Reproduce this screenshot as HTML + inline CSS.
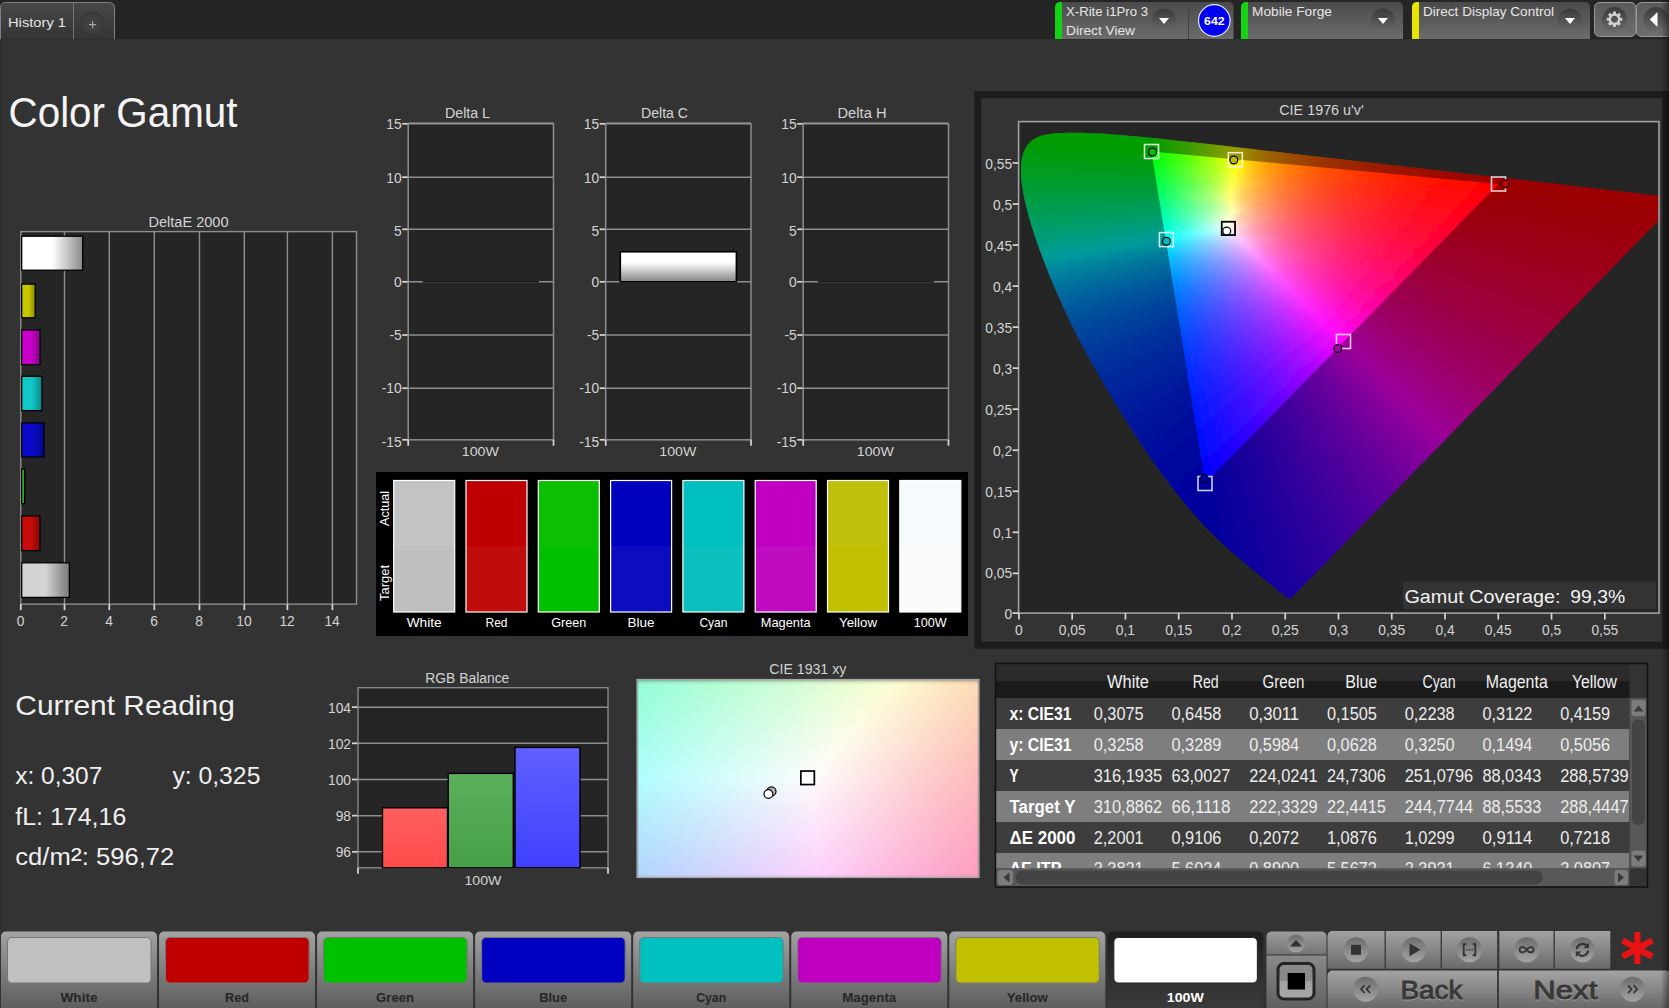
<!DOCTYPE html>
<html lang="en"><head><meta charset="utf-8"><title>Color Gamut</title>
<style>
html,body{margin:0;padding:0;background:#333;overflow:hidden}
body{width:1669px;height:1008px;font-family:"Liberation Sans",sans-serif}
svg{display:block;font-family:"Liberation Sans",sans-serif}
</style></head><body>
<svg width="1669" height="1008" viewBox="0 0 1669 1008" fill="#d4d4d4">
<defs>
<linearGradient id="tabg" x1="0" y1="0" x2="0" y2="1"><stop offset="0" stop-color="#484848"/><stop offset="1" stop-color="#343434"/></linearGradient>
<radialGradient id="plusg" cx="0.5" cy="0.5" r="0.5"><stop offset="0" stop-color="#3c3c3c"/><stop offset="1" stop-color="#333"/></radialGradient>
<radialGradient id="plusg2" cx="0.5" cy="0.5" r="0.5"><stop offset="0" stop-color="#444"/><stop offset="0.75" stop-color="#3e3e3e"/><stop offset="1" stop-color="#373737"/></radialGradient>
<linearGradient id="devg" x1="0" y1="0" x2="0" y2="1"><stop offset="0" stop-color="#4a4a4a"/><stop offset="1" stop-color="#6c6c6c"/></linearGradient>
<radialGradient id="ddg" cx="0.5" cy="0.3" r="0.8"><stop offset="0" stop-color="#3e3e3e"/><stop offset="1" stop-color="#5a5a5a"/></radialGradient>
<linearGradient id="ddg2" x1="0" y1="0" x2="0" y2="1"><stop offset="0" stop-color="#3a3a3a"/><stop offset="1" stop-color="#6a6a6a"/></linearGradient>
<linearGradient id="gbg" x1="0" y1="0" x2="0" y2="1"><stop offset="0" stop-color="#5a5a5a"/><stop offset="1" stop-color="#6e6e6e"/></linearGradient>
<linearGradient id="eb0" x1="0" y1="0" x2="1" y2="0"><stop offset="0" stop-color="#ffffff"/><stop offset="0.5" stop-color="#ffffff"/><stop offset="1" stop-color="#8a8a8a"/></linearGradient>
<linearGradient id="eb1" x1="0" y1="0" x2="1" y2="0"><stop offset="0" stop-color="#c8c800"/><stop offset="0.5" stop-color="#c8c800"/><stop offset="1" stop-color="#8c8c00"/></linearGradient>
<linearGradient id="eb2" x1="0" y1="0" x2="1" y2="0"><stop offset="0" stop-color="#c800c8"/><stop offset="0.5" stop-color="#c800c8"/><stop offset="1" stop-color="#8c008c"/></linearGradient>
<linearGradient id="eb3" x1="0" y1="0" x2="1" y2="0"><stop offset="0" stop-color="#10c8c8"/><stop offset="0.5" stop-color="#10c8c8"/><stop offset="1" stop-color="#0a8888"/></linearGradient>
<linearGradient id="eb4" x1="0" y1="0" x2="1" y2="0"><stop offset="0" stop-color="#0a0ac8"/><stop offset="0.5" stop-color="#0a0ac8"/><stop offset="1" stop-color="#06068c"/></linearGradient>
<linearGradient id="eb5" x1="0" y1="0" x2="1" y2="0"><stop offset="0" stop-color="#2cb82c"/><stop offset="0.5" stop-color="#2cb82c"/><stop offset="1" stop-color="#1e801e"/></linearGradient>
<linearGradient id="eb6" x1="0" y1="0" x2="1" y2="0"><stop offset="0" stop-color="#c80c0c"/><stop offset="0.5" stop-color="#c80c0c"/><stop offset="1" stop-color="#880808"/></linearGradient>
<linearGradient id="eb7" x1="0" y1="0" x2="1" y2="0"><stop offset="0" stop-color="#d4d4d4"/><stop offset="0.5" stop-color="#d4d4d4"/><stop offset="1" stop-color="#787878"/></linearGradient>
<linearGradient id="dcb" x1="0" y1="0" x2="0" y2="1"><stop offset="0" stop-color="#fff"/><stop offset="0.35" stop-color="#fff"/><stop offset="1" stop-color="#858585"/></linearGradient>
<linearGradient id="rb0" x1="0" y1="0" x2="0" y2="1"><stop offset="0" stop-color="#ff6060"/><stop offset="1" stop-color="#ff4a4a"/></linearGradient>
<linearGradient id="rb1" x1="0" y1="0" x2="0" y2="1"><stop offset="0" stop-color="#5cb05c"/><stop offset="1" stop-color="#46a046"/></linearGradient>
<linearGradient id="rb2" x1="0" y1="0" x2="0" y2="1"><stop offset="0" stop-color="#6060ff"/><stop offset="1" stop-color="#4040ff"/></linearGradient>
<clipPath id="locus"><polygon points="1291.08,598.13 1291.28,597.97 1291.19,598.03 1291.13,598.07 1291.08,598.11 1291.03,598.14 1290.99,598.17 1290.95,598.2 1290.91,598.22 1290.87,598.24 1290.83,598.26 1290.79,598.28 1290.75,598.3 1290.71,598.31 1290.66,598.33 1290.61,598.34 1290.56,598.35 1290.49,598.36 1290.41,598.36 1290.3,598.37 1290.18,598.37 1290.05,598.37 1289.9,598.36 1289.73,598.36 1289.55,598.35 1289.37,598.34 1289.21,598.33 1289.05,598.32 1288.88,598.28 1288.66,598.23 1288.4,598.13 1288.07,597.99 1287.68,597.79 1287.21,597.53 1286.66,597.19 1286.03,596.78 1285.33,596.29 1284.54,595.72 1283.68,595.07 1282.73,594.33 1281.7,593.52 1280.58,592.61 1279.37,591.62 1278.07,590.54 1276.68,589.37 1275.18,588.12 1273.59,586.78 1271.89,585.36 1270.08,583.85 1268.16,582.26 1266.13,580.58 1263.98,578.8 1261.7,576.93 1259.28,574.94 1256.72,572.84 1254.01,570.61 1251.14,568.25 1248.11,565.75 1244.91,563.1 1241.55,560.28 1238.02,557.29 1234.33,554.12 1230.47,550.74 1226.45,547.15 1222.27,543.33 1217.93,539.27 1213.41,534.92 1208.63,530.14 1203.5,524.79 1197.95,518.73 1191.93,511.85 1185.48,504.18 1178.66,495.76 1171.52,486.62 1164.11,476.8 1156.46,466.28 1148.58,455.03 1140.5,443.06 1132.25,430.37 1123.87,417.06 1115.41,403.27 1106.94,389.1 1098.52,374.69 1090.25,360.13 1082.28,345.51 1074.71,330.95 1067.64,316.52 1061.09,302.33 1055.04,288.5 1049.48,275.13 1044.42,262.32 1039.85,250.15 1035.79,238.67 1032.27,227.94 1029.28,218.01 1026.81,208.86 1024.81,200.45 1023.25,192.76 1022.1,185.75 1021.34,179.37 1020.94,173.56 1020.9,168.28 1021.2,163.46 1021.81,159.09 1022.73,155.14 1023.95,151.59 1025.45,148.43 1027.21,145.62 1029.22,143.17 1031.44,141.05 1033.87,139.25 1036.49,137.75 1039.29,136.51 1042.25,135.51 1045.36,134.73 1048.61,134.13 1051.98,133.68 1055.46,133.35 1059.04,133.11 1062.69,132.94 1066.39,132.83 1070.12,132.77 1073.85,132.75 1077.59,132.76 1081.34,132.81 1085.11,132.9 1088.91,133.02 1092.76,133.17 1096.66,133.35 1100.62,133.57 1104.66,133.81 1108.78,134.09 1112.98,134.39 1117.27,134.72 1121.66,135.08 1126.14,135.47 1130.73,135.88 1135.42,136.32 1140.22,136.78 1145.13,137.26 1150.16,137.77 1155.32,138.3 1160.6,138.85 1166.02,139.42 1171.57,140.02 1177.27,140.64 1183.12,141.28 1189.12,141.94 1195.28,142.62 1201.59,143.33 1208.06,144.06 1214.69,144.8 1221.49,145.57 1228.45,146.37 1235.57,147.18 1242.87,148.01 1250.33,148.87 1257.96,149.75 1265.77,150.64 1273.75,151.56 1281.9,152.5 1290.22,153.46 1298.72,154.43 1307.39,155.43 1316.22,156.44 1325.2,157.47 1334.3,158.52 1343.51,159.57 1352.81,160.64 1362.2,161.72 1371.65,162.81 1381.14,163.9 1390.67,165 1400.2,166.1 1409.73,167.2 1419.23,168.3 1428.69,169.39 1438.09,170.47 1447.42,171.54 1456.64,172.6 1465.75,173.64 1474.72,174.67 1483.53,175.68 1492.16,176.66 1500.59,177.62 1508.79,178.56 1516.76,179.48 1524.47,180.36 1531.9,181.22 1539.08,182.05 1545.99,182.85 1552.63,183.62 1559.01,184.35 1565.13,185.06 1570.98,185.74 1576.57,186.38 1581.92,187 1587.02,187.58 1591.91,188.14 1596.6,188.68 1601.1,189.19 1605.43,189.69 1609.61,190.17 1613.66,190.63 1617.56,191.08 1621.34,191.52 1624.97,191.94 1628.45,192.34 1631.79,192.73 1634.98,193.1 1638.01,193.45 1640.88,193.78 1643.59,194.09 1646.15,194.38 1648.57,194.65 1650.85,194.91 1653,195.15 1655.02,195.38 1656.92,195.6 1658.71,195.8 1660.39,196 1661.97,196.18 1663.44,196.35 1664.81,196.51 1666.08,196.65 1667.25,196.79 1668.32,196.91 1669.3,197.03 1670.18,197.13 1670.99,197.22 1671.73,197.31 1672.4,197.39 1673.03,197.46 1673.62,197.52 1674.18,197.59 1674.72,197.65 1675.25,197.71 1675.77,197.77 1676.28,197.83 1676.78,197.89 1677.26,197.95 1677.73,198 1678.19,198.05 1678.63,198.1 1679.06,198.15 1679.46,198.2 1679.85,198.24 1680.22,198.29 1680.56,198.33 1680.88,198.36 1681.17,198.4 1681.44,198.43 1681.67,198.45 1681.87,198.48 1682.03,198.5 1682.16,198.51 1682.25,198.52 1682.3,198.53 1682.31,198.53 1681.61,196.66"/></clipPath>
<clipPath id="plotc"><rect x="1018.6" y="121.6" width="640.4" height="491.5"/></clipPath>
<filter id="vb" x="-2%" y="-2%" width="104%" height="104%"><feGaussianBlur stdDeviation="0.9 1.7"/></filter>
<linearGradient id="s0" x1="1046.46" y1="0" x2="1108.61" y2="0" gradientUnits="userSpaceOnUse"><stop offset="0" stop-color="#0f0"/><stop offset="1" stop-color="#0f0"/></linearGradient>
<linearGradient id="s1" x1="1036.56" y1="0" x2="1134.23" y2="0" gradientUnits="userSpaceOnUse"><stop offset="0" stop-color="#0f0"/><stop offset="0.99" stop-color="#0f0"/></linearGradient>
<linearGradient id="s2" x1="1031.49" y1="0" x2="1154.95" y2="0" gradientUnits="userSpaceOnUse"><stop offset="0" stop-color="#0f0"/><stop offset="0.96" stop-color="#02ff00"/><stop offset="1" stop-color="#0dff00"/></linearGradient>
<linearGradient id="s3" x1="1028.2" y1="0" x2="1174.03" y2="0" gradientUnits="userSpaceOnUse"><stop offset="0" stop-color="#0f0"/><stop offset="0.83" stop-color="#01ff00"/><stop offset="0.99" stop-color="#3aff00"/></linearGradient>
<linearGradient id="s4" x1="1025.71" y1="0" x2="1192.37" y2="0" gradientUnits="userSpaceOnUse"><stop offset="0" stop-color="#0f0"/><stop offset="0.74" stop-color="#01ff00"/><stop offset="0.95" stop-color="#5f0"/><stop offset="1" stop-color="#6bff00"/></linearGradient>
<linearGradient id="s5" x1="1023.74" y1="0" x2="1210.32" y2="0" gradientUnits="userSpaceOnUse"><stop offset="0" stop-color="#0f0"/><stop offset="0.68" stop-color="#0f0"/><stop offset="0.86" stop-color="#54ff00"/><stop offset="1" stop-color="#a0ff00"/></linearGradient>
<linearGradient id="s6" x1="1022.13" y1="0" x2="1228.02" y2="0" gradientUnits="userSpaceOnUse"><stop offset="0" stop-color="#00ff04"/><stop offset="0.26" stop-color="#0f0"/><stop offset="0.62" stop-color="#01ff00"/><stop offset="0.79" stop-color="#5f0"/><stop offset="0.93" stop-color="#aeff00"/><stop offset="1" stop-color="#daff00"/></linearGradient>
<linearGradient id="s7" x1="1020.88" y1="0" x2="1245.55" y2="0" gradientUnits="userSpaceOnUse"><stop offset="0" stop-color="#00ff07"/><stop offset="0.29" stop-color="#0f0"/><stop offset="0.58" stop-color="#02ff00"/><stop offset="0.73" stop-color="#57ff00"/><stop offset="0.86" stop-color="#b1ff00"/><stop offset="0.96" stop-color="#feff00"/><stop offset="1" stop-color="#ffe400"/></linearGradient>
<linearGradient id="s8" x1="1019.82" y1="0" x2="1262.98" y2="0" gradientUnits="userSpaceOnUse"><stop offset="0" stop-color="#00ff0a"/><stop offset="0.35" stop-color="#0f0"/><stop offset="0.54" stop-color="#01ff00"/><stop offset="0.68" stop-color="#56ff00"/><stop offset="0.8" stop-color="#aeff00"/><stop offset="0.89" stop-color="#ff0"/><stop offset="0.95" stop-color="#ffce00"/><stop offset="1" stop-color="#ffb300"/></linearGradient>
<linearGradient id="s9" x1="1018.9" y1="0" x2="1280.36" y2="0" gradientUnits="userSpaceOnUse"><stop offset="0" stop-color="#00ff0e"/><stop offset="0.41" stop-color="#0f0"/><stop offset="0.5" stop-color="#0f0"/><stop offset="0.63" stop-color="#56ff00"/><stop offset="0.75" stop-color="#aeff00"/><stop offset="0.83" stop-color="#fffe00"/><stop offset="0.89" stop-color="#ffcd00"/><stop offset="0.96" stop-color="#ffa100"/><stop offset="1" stop-color="#ff9100"/></linearGradient>
<linearGradient id="s10" x1="1018.6" y1="0" x2="1297.75" y2="0" gradientUnits="userSpaceOnUse"><stop offset="0" stop-color="#0f1"/><stop offset="0.46" stop-color="#0f0"/><stop offset="0.48" stop-color="#03ff00"/><stop offset="0.6" stop-color="#58ff00"/><stop offset="0.7" stop-color="#b1ff00"/><stop offset="0.78" stop-color="#fffe00"/><stop offset="0.83" stop-color="#ffcd00"/><stop offset="0.9" stop-color="#ffa100"/><stop offset="0.99" stop-color="#ff7800"/><stop offset="1" stop-color="#ff7600"/></linearGradient>
<linearGradient id="s11" x1="1018.6" y1="0" x2="1315.16" y2="0" gradientUnits="userSpaceOnUse"><stop offset="0" stop-color="#00ff14"/><stop offset="0.45" stop-color="#0f0"/><stop offset="0.56" stop-color="#5f0"/><stop offset="0.66" stop-color="#adff00"/><stop offset="0.74" stop-color="#fffe00"/><stop offset="0.79" stop-color="#ffcd00"/><stop offset="0.85" stop-color="#ffa000"/><stop offset="0.93" stop-color="#ff7800"/><stop offset="1" stop-color="#ff6100"/></linearGradient>
<linearGradient id="s12" x1="1018.6" y1="0" x2="1332.59" y2="0" gradientUnits="userSpaceOnUse"><stop offset="0" stop-color="#00ff18"/><stop offset="0.43" stop-color="#02ff05"/><stop offset="0.53" stop-color="#57ff00"/><stop offset="0.62" stop-color="#b1ff00"/><stop offset="0.69" stop-color="#fffd00"/><stop offset="0.74" stop-color="#fc0"/><stop offset="0.8" stop-color="#ffa000"/><stop offset="0.88" stop-color="#f70"/><stop offset="0.99" stop-color="#ff5200"/><stop offset="1" stop-color="#ff5000"/></linearGradient>
<linearGradient id="s13" x1="1018.6" y1="0" x2="1350.03" y2="0" gradientUnits="userSpaceOnUse"><stop offset="0" stop-color="#00ff1b"/><stop offset="0.4" stop-color="#01ff09"/><stop offset="0.5" stop-color="#57ff02"/><stop offset="0.59" stop-color="#aeff00"/><stop offset="0.65" stop-color="#feff00"/><stop offset="0.71" stop-color="#ffc800"/><stop offset="0.76" stop-color="#ff9d00"/><stop offset="0.84" stop-color="#ff7500"/><stop offset="0.94" stop-color="#ff5100"/><stop offset="1" stop-color="#ff4200"/></linearGradient>
<linearGradient id="s14" x1="1018.6" y1="0" x2="1367.44" y2="0" gradientUnits="userSpaceOnUse"><stop offset="0" stop-color="#00ff1e"/><stop offset="0.38" stop-color="#00ff0e"/><stop offset="0.48" stop-color="#54ff08"/><stop offset="0.56" stop-color="#abff01"/><stop offset="0.62" stop-color="#ff0"/><stop offset="0.67" stop-color="#ffcd00"/><stop offset="0.72" stop-color="#ffa000"/><stop offset="0.79" stop-color="#f70"/><stop offset="0.89" stop-color="#ff5200"/><stop offset="1" stop-color="#ff3600"/></linearGradient>
<linearGradient id="s15" x1="1018.6" y1="0" x2="1384.81" y2="0" gradientUnits="userSpaceOnUse"><stop offset="0" stop-color="#0f2"/><stop offset="0.37" stop-color="#02ff12"/><stop offset="0.46" stop-color="#56ff0c"/><stop offset="0.53" stop-color="#aeff06"/><stop offset="0.59" stop-color="#ffff01"/><stop offset="0.63" stop-color="#ffcf00"/><stop offset="0.68" stop-color="#ffa300"/><stop offset="0.75" stop-color="#ff7a00"/><stop offset="0.83" stop-color="#ff5600"/><stop offset="0.96" stop-color="#ff3400"/><stop offset="1" stop-color="#ff2c00"/></linearGradient>
<linearGradient id="s16" x1="1018.6" y1="0" x2="1402.14" y2="0" gradientUnits="userSpaceOnUse"><stop offset="0" stop-color="#00ff25"/><stop offset="0.35" stop-color="#01ff16"/><stop offset="0.44" stop-color="#56ff11"/><stop offset="0.51" stop-color="#aeff0c"/><stop offset="0.57" stop-color="#fffe07"/><stop offset="0.6" stop-color="#ffce03"/><stop offset="0.65" stop-color="#ffa200"/><stop offset="0.71" stop-color="#ff7a00"/><stop offset="0.8" stop-color="#f50"/><stop offset="0.91" stop-color="#ff3400"/><stop offset="1" stop-color="#ff2300"/></linearGradient>
<linearGradient id="s17" x1="1018.6" y1="0" x2="1419.47" y2="0" gradientUnits="userSpaceOnUse"><stop offset="0" stop-color="#00ff29"/><stop offset="0.34" stop-color="#00ff1b"/><stop offset="0.42" stop-color="#55ff16"/><stop offset="0.49" stop-color="#aeff11"/><stop offset="0.54" stop-color="#fffd0d"/><stop offset="0.58" stop-color="#ffce07"/><stop offset="0.62" stop-color="#ffa203"/><stop offset="0.68" stop-color="#ff7900"/><stop offset="0.76" stop-color="#ff5400"/><stop offset="0.87" stop-color="#f30"/><stop offset="1" stop-color="#ff1c00"/></linearGradient>
<linearGradient id="s18" x1="1018.6" y1="0" x2="1436.82" y2="0" gradientUnits="userSpaceOnUse"><stop offset="0" stop-color="#00ff2c"/><stop offset="0.32" stop-color="#00ff20"/><stop offset="0.39" stop-color="#4fff1c"/><stop offset="0.46" stop-color="#a8ff17"/><stop offset="0.52" stop-color="#feff13"/><stop offset="0.55" stop-color="#ffca0c"/><stop offset="0.6" stop-color="#ff9f07"/><stop offset="0.66" stop-color="#ff7702"/><stop offset="0.73" stop-color="#ff5200"/><stop offset="0.84" stop-color="#ff3100"/><stop offset="1" stop-color="#ff1500"/></linearGradient>
<linearGradient id="s19" x1="1018.6" y1="0" x2="1454.21" y2="0" gradientUnits="userSpaceOnUse"><stop offset="0" stop-color="#00ff30"/><stop offset="0.31" stop-color="#01ff24"/><stop offset="0.38" stop-color="#55ff21"/><stop offset="0.45" stop-color="#abff1d"/><stop offset="0.5" stop-color="#feff19"/><stop offset="0.53" stop-color="#fc1"/><stop offset="0.57" stop-color="#ffa00b"/><stop offset="0.63" stop-color="#ff7705"/><stop offset="0.7" stop-color="#ff5300"/><stop offset="0.8" stop-color="#ff3200"/><stop offset="0.96" stop-color="#ff1500"/><stop offset="1" stop-color="#ff0f00"/></linearGradient>
<linearGradient id="s20" x1="1018.6" y1="0" x2="1471.67" y2="0" gradientUnits="userSpaceOnUse"><stop offset="0" stop-color="#0f3"/><stop offset="0.3" stop-color="#00ff29"/><stop offset="0.37" stop-color="#54ff26"/><stop offset="0.43" stop-color="#abff22"/><stop offset="0.48" stop-color="#ffff1f"/><stop offset="0.51" stop-color="#ffce17"/><stop offset="0.55" stop-color="#ffa110"/><stop offset="0.6" stop-color="#ff7909"/><stop offset="0.67" stop-color="#ff5403"/><stop offset="0.77" stop-color="#f30"/><stop offset="0.91" stop-color="#ff1500"/><stop offset="1" stop-color="#ff0900"/></linearGradient>
<linearGradient id="s21" x1="1018.6" y1="0" x2="1489.16" y2="0" gradientUnits="userSpaceOnUse"><stop offset="0" stop-color="#00ff37"/><stop offset="0.29" stop-color="#00ff2e"/><stop offset="0.35" stop-color="#51ff2b"/><stop offset="0.41" stop-color="#a8ff28"/><stop offset="0.46" stop-color="#fffe25"/><stop offset="0.49" stop-color="#ffcd1c"/><stop offset="0.53" stop-color="#ffa014"/><stop offset="0.58" stop-color="#ff790d"/><stop offset="0.64" stop-color="#ff5306"/><stop offset="0.74" stop-color="#ff3200"/><stop offset="0.88" stop-color="#ff1500"/><stop offset="1" stop-color="#ff0500"/></linearGradient>
<linearGradient id="s22" x1="1018.6" y1="0" x2="1506.66" y2="0" gradientUnits="userSpaceOnUse"><stop offset="0" stop-color="#00ff3a"/><stop offset="0.28" stop-color="#01ff33"/><stop offset="0.34" stop-color="#57ff30"/><stop offset="0.4" stop-color="#afff2e"/><stop offset="0.44" stop-color="#fffd2b"/><stop offset="0.47" stop-color="#ffcc21"/><stop offset="0.51" stop-color="#ffa018"/><stop offset="0.56" stop-color="#ff7810"/><stop offset="0.62" stop-color="#ff5309"/><stop offset="0.71" stop-color="#ff3102"/><stop offset="0.85" stop-color="#ff1400"/><stop offset="1" stop-color="#f00"/></linearGradient>
<linearGradient id="s23" x1="1018.6" y1="0" x2="1524.11" y2="0" gradientUnits="userSpaceOnUse"><stop offset="0" stop-color="#00ff3e"/><stop offset="0.27" stop-color="#01ff38"/><stop offset="0.33" stop-color="#56ff36"/><stop offset="0.39" stop-color="#b0ff34"/><stop offset="0.43" stop-color="#fdff32"/><stop offset="0.46" stop-color="#ffc926"/><stop offset="0.49" stop-color="#ff9d1c"/><stop offset="0.54" stop-color="#ff7413"/><stop offset="0.6" stop-color="#ff500b"/><stop offset="0.69" stop-color="#ff2f04"/><stop offset="0.83" stop-color="#ff1200"/><stop offset="0.98" stop-color="#f00"/><stop offset="1" stop-color="#f00"/></linearGradient>
<linearGradient id="s24" x1="1018.6" y1="0" x2="1541.48" y2="0" gradientUnits="userSpaceOnUse"><stop offset="0" stop-color="#00ff41"/><stop offset="0.26" stop-color="#00ff3d"/><stop offset="0.32" stop-color="#50ff3b"/><stop offset="0.37" stop-color="#a9ff3a"/><stop offset="0.41" stop-color="#feff38"/><stop offset="0.44" stop-color="#ffcb2c"/><stop offset="0.47" stop-color="#ff9e21"/><stop offset="0.52" stop-color="#ff7618"/><stop offset="0.58" stop-color="#ff510f"/><stop offset="0.67" stop-color="#ff3007"/><stop offset="0.79" stop-color="#ff1300"/><stop offset="0.94" stop-color="#f00"/><stop offset="1" stop-color="#f00"/></linearGradient>
<linearGradient id="s25" x1="1018.6" y1="0" x2="1558.78" y2="0" gradientUnits="userSpaceOnUse"><stop offset="0" stop-color="#00ff45"/><stop offset="0.26" stop-color="#01ff42"/><stop offset="0.31" stop-color="#55ff41"/><stop offset="0.36" stop-color="#acff40"/><stop offset="0.4" stop-color="#ffff3f"/><stop offset="0.42" stop-color="#ffcd32"/><stop offset="0.46" stop-color="#ffa127"/><stop offset="0.5" stop-color="#ff781c"/><stop offset="0.56" stop-color="#ff5312"/><stop offset="0.64" stop-color="#ff320a"/><stop offset="0.76" stop-color="#ff1502"/><stop offset="0.91" stop-color="#f00"/><stop offset="1" stop-color="#f00"/></linearGradient>
<linearGradient id="s26" x1="1018.6" y1="0" x2="1576.08" y2="0" gradientUnits="userSpaceOnUse"><stop offset="0" stop-color="#00ff49"/><stop offset="0.25" stop-color="#01ff47"/><stop offset="0.3" stop-color="#55ff47"/><stop offset="0.35" stop-color="#adff46"/><stop offset="0.39" stop-color="#fffe45"/><stop offset="0.41" stop-color="#ffcf38"/><stop offset="0.44" stop-color="#ffa32c"/><stop offset="0.48" stop-color="#ff7a20"/><stop offset="0.53" stop-color="#ff5616"/><stop offset="0.61" stop-color="#ff340d"/><stop offset="0.72" stop-color="#ff1705"/><stop offset="0.87" stop-color="#f00"/><stop offset="1" stop-color="#f00"/></linearGradient>
<linearGradient id="s27" x1="1018.6" y1="0" x2="1593.48" y2="0" gradientUnits="userSpaceOnUse"><stop offset="0" stop-color="#00ff4d"/><stop offset="0.24" stop-color="#00ff4c"/><stop offset="0.29" stop-color="#52ff4c"/><stop offset="0.34" stop-color="#a9ff4c"/><stop offset="0.37" stop-color="#fffe4c"/><stop offset="0.4" stop-color="#ffce3e"/><stop offset="0.43" stop-color="#ffa230"/><stop offset="0.46" stop-color="#ff7a24"/><stop offset="0.52" stop-color="#ff5519"/><stop offset="0.59" stop-color="#ff340f"/><stop offset="0.7" stop-color="#ff1606"/><stop offset="0.84" stop-color="#f00"/><stop offset="1" stop-color="#f00"/></linearGradient>
<linearGradient id="s28" x1="1018.6" y1="0" x2="1610.94" y2="0" gradientUnits="userSpaceOnUse"><stop offset="0" stop-color="#00ff50"/><stop offset="0.23" stop-color="#02ff52"/><stop offset="0.29" stop-color="#57ff52"/><stop offset="0.33" stop-color="#b1ff53"/><stop offset="0.36" stop-color="#fdff53"/><stop offset="0.39" stop-color="#ffc741"/><stop offset="0.42" stop-color="#ff9d33"/><stop offset="0.46" stop-color="#ff7427"/><stop offset="0.51" stop-color="#ff501b"/><stop offset="0.58" stop-color="#ff2f11"/><stop offset="0.69" stop-color="#ff1207"/><stop offset="0.82" stop-color="#ff0001"/><stop offset="1" stop-color="#f00"/></linearGradient>
<linearGradient id="s29" x1="1018.6" y1="0" x2="1628.31" y2="0" gradientUnits="userSpaceOnUse"><stop offset="0" stop-color="#00ff54"/><stop offset="0.23" stop-color="#01ff57"/><stop offset="0.28" stop-color="#54ff58"/><stop offset="0.32" stop-color="#adff59"/><stop offset="0.35" stop-color="#feff5a"/><stop offset="0.38" stop-color="#ffc948"/><stop offset="0.4" stop-color="#ff9e39"/><stop offset="0.44" stop-color="#ff752b"/><stop offset="0.49" stop-color="#ff501e"/><stop offset="0.56" stop-color="#ff2f13"/><stop offset="0.67" stop-color="#ff1209"/><stop offset="0.79" stop-color="#ff0002"/><stop offset="1" stop-color="#f00"/></linearGradient>
<linearGradient id="s30" x1="1018.6" y1="0" x2="1645.64" y2="0" gradientUnits="userSpaceOnUse"><stop offset="0" stop-color="#00ff58"/><stop offset="0.22" stop-color="#00ff5c"/><stop offset="0.27" stop-color="#54ff5e"/><stop offset="0.31" stop-color="#adff5f"/><stop offset="0.34" stop-color="#ffff61"/><stop offset="0.36" stop-color="#ffcc4e"/><stop offset="0.39" stop-color="#ff9f3e"/><stop offset="0.43" stop-color="#ff7730"/><stop offset="0.47" stop-color="#ff5322"/><stop offset="0.54" stop-color="#ff3216"/><stop offset="0.64" stop-color="#ff150c"/><stop offset="0.76" stop-color="#ff0004"/><stop offset="0.96" stop-color="#f00"/><stop offset="1" stop-color="#f00"/></linearGradient>
<linearGradient id="s31" x1="1018.6" y1="0" x2="1661" y2="0" gradientUnits="userSpaceOnUse"><stop offset="0" stop-color="#00ff5c"/><stop offset="0.22" stop-color="#02ff62"/><stop offset="0.26" stop-color="#56ff64"/><stop offset="0.3" stop-color="#adff66"/><stop offset="0.33" stop-color="#ffff68"/><stop offset="0.35" stop-color="#ffce55"/><stop offset="0.38" stop-color="#ffa345"/><stop offset="0.41" stop-color="#ff7935"/><stop offset="0.46" stop-color="#ff5527"/><stop offset="0.52" stop-color="#ff341a"/><stop offset="0.61" stop-color="#ff160f"/><stop offset="0.74" stop-color="#ff0006"/><stop offset="0.95" stop-color="#f00"/><stop offset="1" stop-color="#f00"/></linearGradient>
<linearGradient id="s32" x1="1018.6" y1="0" x2="1661" y2="0" gradientUnits="userSpaceOnUse"><stop offset="0" stop-color="#00ff60"/><stop offset="0.22" stop-color="#01ff68"/><stop offset="0.26" stop-color="#56ff6a"/><stop offset="0.3" stop-color="#aeff6d"/><stop offset="0.33" stop-color="#fffe6f"/><stop offset="0.35" stop-color="#ffcd5b"/><stop offset="0.38" stop-color="#ffa249"/><stop offset="0.41" stop-color="#ff7939"/><stop offset="0.46" stop-color="#ff542a"/><stop offset="0.52" stop-color="#ff331c"/><stop offset="0.61" stop-color="#ff1610"/><stop offset="0.74" stop-color="#ff0007"/><stop offset="0.97" stop-color="#f00"/><stop offset="1" stop-color="#f00"/></linearGradient>
<linearGradient id="s33" x1="1018.6" y1="0" x2="1661" y2="0" gradientUnits="userSpaceOnUse"><stop offset="0" stop-color="#00ff64"/><stop offset="0.22" stop-color="#00ff6d"/><stop offset="0.26" stop-color="#52ff70"/><stop offset="0.3" stop-color="#aaff73"/><stop offset="0.33" stop-color="#fffd76"/><stop offset="0.35" stop-color="#ffcc61"/><stop offset="0.38" stop-color="#ffa14e"/><stop offset="0.41" stop-color="#ff783d"/><stop offset="0.46" stop-color="#ff532d"/><stop offset="0.52" stop-color="#ff321f"/><stop offset="0.61" stop-color="#ff1512"/><stop offset="0.73" stop-color="#ff0009"/><stop offset="1" stop-color="#f00"/></linearGradient>
<linearGradient id="s34" x1="1018.6" y1="0" x2="1661" y2="0" gradientUnits="userSpaceOnUse"><stop offset="0" stop-color="#00ff67"/><stop offset="0.22" stop-color="#02ff73"/><stop offset="0.26" stop-color="#5f7"/><stop offset="0.3" stop-color="#aeff7a"/><stop offset="0.33" stop-color="#fdff7e"/><stop offset="0.35" stop-color="#ffc865"/><stop offset="0.38" stop-color="#ff9c51"/><stop offset="0.42" stop-color="#ff743f"/><stop offset="0.46" stop-color="#ff502f"/><stop offset="0.53" stop-color="#ff2f20"/><stop offset="0.63" stop-color="#ff1213"/><stop offset="0.74" stop-color="#ff000a"/><stop offset="1" stop-color="#f00"/></linearGradient>
<linearGradient id="s35" x1="1018.85" y1="0" x2="1661" y2="0" gradientUnits="userSpaceOnUse"><stop offset="0" stop-color="#00ff6b"/><stop offset="0.22" stop-color="#02ff79"/><stop offset="0.26" stop-color="#56ff7d"/><stop offset="0.3" stop-color="#afff81"/><stop offset="0.33" stop-color="#ffff85"/><stop offset="0.35" stop-color="#ffd06f"/><stop offset="0.38" stop-color="#ffa35a"/><stop offset="0.41" stop-color="#ff7a47"/><stop offset="0.45" stop-color="#ff5635"/><stop offset="0.51" stop-color="#ff3425"/><stop offset="0.6" stop-color="#ff1717"/><stop offset="0.73" stop-color="#ff000c"/><stop offset="1" stop-color="#f00"/></linearGradient>
<linearGradient id="s36" x1="1019.26" y1="0" x2="1661" y2="0" gradientUnits="userSpaceOnUse"><stop offset="0" stop-color="#00ff70"/><stop offset="0.22" stop-color="#02ff7f"/><stop offset="0.26" stop-color="#56ff83"/><stop offset="0.3" stop-color="#adff88"/><stop offset="0.33" stop-color="#feff8d"/><stop offset="0.35" stop-color="#ffc771"/><stop offset="0.38" stop-color="#ff9d5c"/><stop offset="0.41" stop-color="#ff7448"/><stop offset="0.46" stop-color="#ff4f36"/><stop offset="0.53" stop-color="#ff2f25"/><stop offset="0.62" stop-color="#ff1217"/><stop offset="0.73" stop-color="#ff000e"/><stop offset="1" stop-color="#ff0001"/></linearGradient>
<linearGradient id="s37" x1="1019.66" y1="0" x2="1661" y2="0" gradientUnits="userSpaceOnUse"><stop offset="0" stop-color="#00ff74"/><stop offset="0.22" stop-color="#00ff85"/><stop offset="0.26" stop-color="#4aff89"/><stop offset="0.3" stop-color="#a3ff8f"/><stop offset="0.33" stop-color="#fffe94"/><stop offset="0.35" stop-color="#ffcf7c"/><stop offset="0.37" stop-color="#ffa264"/><stop offset="0.41" stop-color="#ff794f"/><stop offset="0.45" stop-color="#ff543c"/><stop offset="0.51" stop-color="#ff332a"/><stop offset="0.6" stop-color="#ff161b"/><stop offset="0.72" stop-color="#ff0010"/><stop offset="1" stop-color="#ff0002"/></linearGradient>
<linearGradient id="s38" x1="1020.11" y1="0" x2="1661" y2="0" gradientUnits="userSpaceOnUse"><stop offset="0" stop-color="#00ff78"/><stop offset="0.22" stop-color="#00ff8b"/><stop offset="0.26" stop-color="#4fff90"/><stop offset="0.3" stop-color="#a5ff96"/><stop offset="0.33" stop-color="#ffff9c"/><stop offset="0.35" stop-color="#ffcc81"/><stop offset="0.37" stop-color="#ffa069"/><stop offset="0.41" stop-color="#ff7753"/><stop offset="0.45" stop-color="#ff533f"/><stop offset="0.51" stop-color="#ff322d"/><stop offset="0.61" stop-color="#ff141d"/><stop offset="0.72" stop-color="#f01"/><stop offset="1" stop-color="#ff0003"/></linearGradient>
<linearGradient id="s39" x1="1020.59" y1="0" x2="1661" y2="0" gradientUnits="userSpaceOnUse"><stop offset="0" stop-color="#00ff7c"/><stop offset="0.22" stop-color="#00ff91"/><stop offset="0.26" stop-color="#53ff97"/><stop offset="0.3" stop-color="#abff9e"/><stop offset="0.33" stop-color="#fdffa4"/><stop offset="0.35" stop-color="#ffc784"/><stop offset="0.38" stop-color="#ff9c6c"/><stop offset="0.41" stop-color="#ff7456"/><stop offset="0.45" stop-color="#ff5041"/><stop offset="0.52" stop-color="#ff2f2e"/><stop offset="0.61" stop-color="#ff121e"/><stop offset="0.72" stop-color="#ff0013"/><stop offset="1" stop-color="#ff0004"/></linearGradient>
<linearGradient id="s40" x1="1021.07" y1="0" x2="1661" y2="0" gradientUnits="userSpaceOnUse"><stop offset="0" stop-color="#00ff80"/><stop offset="0.21" stop-color="#00ff96"/><stop offset="0.22" stop-color="#00ff97"/><stop offset="0.26" stop-color="#54ff9e"/><stop offset="0.3" stop-color="#adffa6"/><stop offset="0.33" stop-color="#fffeac"/><stop offset="0.35" stop-color="#ffce8f"/><stop offset="0.37" stop-color="#ffa376"/><stop offset="0.4" stop-color="#ff7b5e"/><stop offset="0.44" stop-color="#ff5648"/><stop offset="0.5" stop-color="#ff3535"/><stop offset="0.59" stop-color="#ff1723"/><stop offset="0.71" stop-color="#ff0015"/><stop offset="1" stop-color="#ff0005"/></linearGradient>
<linearGradient id="s41" x1="1021.54" y1="0" x2="1661" y2="0" gradientUnits="userSpaceOnUse"><stop offset="0" stop-color="#00ff84"/><stop offset="0.21" stop-color="#00ff9b"/><stop offset="0.22" stop-color="#01ff9d"/><stop offset="0.26" stop-color="#55ffa5"/><stop offset="0.3" stop-color="#afffad"/><stop offset="0.33" stop-color="#feffb5"/><stop offset="0.35" stop-color="#ffcc95"/><stop offset="0.37" stop-color="#ff9e79"/><stop offset="0.41" stop-color="#ff7660"/><stop offset="0.45" stop-color="#ff5149"/><stop offset="0.51" stop-color="#ff3035"/><stop offset="0.6" stop-color="#ff1323"/><stop offset="0.71" stop-color="#ff0016"/><stop offset="1" stop-color="#ff0006"/></linearGradient>
<linearGradient id="s42" x1="1022.05" y1="0" x2="1661" y2="0" gradientUnits="userSpaceOnUse"><stop offset="0" stop-color="#00ff89"/><stop offset="0.2" stop-color="#00ffa0"/><stop offset="0.22" stop-color="#01ffa4"/><stop offset="0.26" stop-color="#57ffac"/><stop offset="0.3" stop-color="#adffb5"/><stop offset="0.33" stop-color="#fdffbd"/><stop offset="0.35" stop-color="#ffc698"/><stop offset="0.37" stop-color="#ff9a7c"/><stop offset="0.41" stop-color="#ff7263"/><stop offset="0.45" stop-color="#ff4e4b"/><stop offset="0.52" stop-color="#ff2d36"/><stop offset="0.61" stop-color="#ff1024"/><stop offset="0.71" stop-color="#ff0018"/><stop offset="1" stop-color="#ff0007"/></linearGradient>
<linearGradient id="s43" x1="1022.59" y1="0" x2="1661" y2="0" gradientUnits="userSpaceOnUse"><stop offset="0" stop-color="#00ff8d"/><stop offset="0.19" stop-color="#00ffa6"/><stop offset="0.22" stop-color="#02ffab"/><stop offset="0.26" stop-color="#58ffb4"/><stop offset="0.3" stop-color="#b0ffbd"/><stop offset="0.33" stop-color="#fffdc4"/><stop offset="0.34" stop-color="#ffcda4"/><stop offset="0.37" stop-color="#ffa187"/><stop offset="0.4" stop-color="#ff796c"/><stop offset="0.44" stop-color="#ff5453"/><stop offset="0.5" stop-color="#ff333d"/><stop offset="0.59" stop-color="#ff1529"/><stop offset="0.7" stop-color="#ff001a"/><stop offset="0.98" stop-color="#ff0009"/><stop offset="1" stop-color="#ff0008"/></linearGradient>
<linearGradient id="s44" x1="1023.13" y1="0" x2="1661" y2="0" gradientUnits="userSpaceOnUse"><stop offset="0" stop-color="#00ff92"/><stop offset="0.19" stop-color="#00ffab"/><stop offset="0.22" stop-color="#00ffb1"/><stop offset="0.26" stop-color="#53ffba"/><stop offset="0.29" stop-color="#aaffc4"/><stop offset="0.32" stop-color="#ffffce"/><stop offset="0.34" stop-color="#ffd1ae"/><stop offset="0.37" stop-color="#ffa48f"/><stop offset="0.4" stop-color="#ff7c73"/><stop offset="0.44" stop-color="#ff5759"/><stop offset="0.49" stop-color="#ff3542"/><stop offset="0.58" stop-color="#ff172d"/><stop offset="0.7" stop-color="#ff001d"/><stop offset="0.96" stop-color="#ff000a"/><stop offset="1" stop-color="#ff0009"/></linearGradient>
<linearGradient id="s45" x1="1023.67" y1="0" x2="1661" y2="0" gradientUnits="userSpaceOnUse"><stop offset="0" stop-color="#00ff96"/><stop offset="0.18" stop-color="#00ffb0"/><stop offset="0.22" stop-color="#00ffb8"/><stop offset="0.26" stop-color="#54ffc2"/><stop offset="0.29" stop-color="#adffcd"/><stop offset="0.32" stop-color="#feffd6"/><stop offset="0.34" stop-color="#ffcbb1"/><stop offset="0.37" stop-color="#ff9f91"/><stop offset="0.4" stop-color="#ff7774"/><stop offset="0.44" stop-color="#ff525a"/><stop offset="0.5" stop-color="#ff3142"/><stop offset="0.59" stop-color="#ff142d"/><stop offset="0.7" stop-color="#ff001e"/><stop offset="0.96" stop-color="#ff000c"/><stop offset="1" stop-color="#ff000a"/></linearGradient>
<linearGradient id="s46" x1="1024.21" y1="0" x2="1661" y2="0" gradientUnits="userSpaceOnUse"><stop offset="0" stop-color="#00ff9b"/><stop offset="0.18" stop-color="#00ffb5"/><stop offset="0.22" stop-color="#01ffbf"/><stop offset="0.26" stop-color="#56ffca"/><stop offset="0.3" stop-color="#afffd5"/><stop offset="0.32" stop-color="#fdffdf"/><stop offset="0.33" stop-color="#ffead0"/><stop offset="0.35" stop-color="#ffbbac"/><stop offset="0.38" stop-color="#ff918d"/><stop offset="0.41" stop-color="#ff6a70"/><stop offset="0.46" stop-color="#ff4756"/><stop offset="0.52" stop-color="#ff273e"/><stop offset="0.63" stop-color="#ff0b29"/><stop offset="0.7" stop-color="#ff001f"/><stop offset="0.96" stop-color="#ff000d"/><stop offset="1" stop-color="#ff000b"/></linearGradient>
<linearGradient id="s47" x1="1024.81" y1="0" x2="1661" y2="0" gradientUnits="userSpaceOnUse"><stop offset="0" stop-color="#00ff9f"/><stop offset="0.17" stop-color="#0fb"/><stop offset="0.22" stop-color="#02ffc6"/><stop offset="0.26" stop-color="#57ffd1"/><stop offset="0.29" stop-color="#aeffdd"/><stop offset="0.32" stop-color="#fffee7"/><stop offset="0.34" stop-color="#ffcfc3"/><stop offset="0.36" stop-color="#ffa4a2"/><stop offset="0.39" stop-color="#ff7b82"/><stop offset="0.43" stop-color="#ff5665"/><stop offset="0.49" stop-color="#ff354c"/><stop offset="0.57" stop-color="#ff1735"/><stop offset="0.69" stop-color="#f02"/><stop offset="0.93" stop-color="#ff000f"/><stop offset="1" stop-color="#ff000c"/></linearGradient>
<linearGradient id="s48" x1="1025.41" y1="0" x2="1661" y2="0" gradientUnits="userSpaceOnUse"><stop offset="0" stop-color="#00ffa4"/><stop offset="0.17" stop-color="#00ffc0"/><stop offset="0.22" stop-color="#0fc"/><stop offset="0.26" stop-color="#52ffd8"/><stop offset="0.29" stop-color="#a8ffe5"/><stop offset="0.32" stop-color="#fffff1"/><stop offset="0.34" stop-color="#ffd0cb"/><stop offset="0.36" stop-color="#ffa4a9"/><stop offset="0.39" stop-color="#ff7b88"/><stop offset="0.43" stop-color="#ff5669"/><stop offset="0.49" stop-color="#ff344f"/><stop offset="0.57" stop-color="#ff1737"/><stop offset="0.68" stop-color="#ff0024"/><stop offset="0.92" stop-color="#f01"/><stop offset="1" stop-color="#ff000d"/></linearGradient>
<linearGradient id="s49" x1="1026.01" y1="0" x2="1660.27" y2="0" gradientUnits="userSpaceOnUse"><stop offset="0" stop-color="#00ffa8"/><stop offset="0.16" stop-color="#00ffc5"/><stop offset="0.22" stop-color="#01ffd4"/><stop offset="0.26" stop-color="#54ffe0"/><stop offset="0.29" stop-color="#abffee"/><stop offset="0.32" stop-color="#fefffa"/><stop offset="0.34" stop-color="#ffcdd1"/><stop offset="0.36" stop-color="#ffa2ad"/><stop offset="0.39" stop-color="#ff798c"/><stop offset="0.43" stop-color="#ff546d"/><stop offset="0.49" stop-color="#ff3351"/><stop offset="0.57" stop-color="#ff1639"/><stop offset="0.68" stop-color="#ff0026"/><stop offset="0.91" stop-color="#ff0012"/><stop offset="1" stop-color="#ff000e"/></linearGradient>
<linearGradient id="s50" x1="1026.61" y1="0" x2="1658.32" y2="0" gradientUnits="userSpaceOnUse"><stop offset="0" stop-color="#00ffad"/><stop offset="0.16" stop-color="#00ffcb"/><stop offset="0.22" stop-color="#01ffdb"/><stop offset="0.26" stop-color="#55ffe9"/><stop offset="0.29" stop-color="#adfff7"/><stop offset="0.32" stop-color="#ecfdff"/><stop offset="0.32" stop-color="#fff7fd"/><stop offset="0.34" stop-color="#ffc9d6"/><stop offset="0.36" stop-color="#ff9db0"/><stop offset="0.4" stop-color="#ff748c"/><stop offset="0.44" stop-color="#ff4f6d"/><stop offset="0.5" stop-color="#ff2e51"/><stop offset="0.59" stop-color="#ff1238"/><stop offset="0.69" stop-color="#ff0028"/><stop offset="0.91" stop-color="#ff0013"/><stop offset="1" stop-color="#ff000f"/></linearGradient>
<linearGradient id="s51" x1="1027.21" y1="0" x2="1656.38" y2="0" gradientUnits="userSpaceOnUse"><stop offset="0" stop-color="#00ffb2"/><stop offset="0.16" stop-color="#00ffd0"/><stop offset="0.22" stop-color="#00ffe2"/><stop offset="0.25" stop-color="#4cffef"/><stop offset="0.29" stop-color="#a3fffe"/><stop offset="0.33" stop-color="#fef"/><stop offset="0.34" stop-color="#ffbfd5"/><stop offset="0.37" stop-color="#ff95b0"/><stop offset="0.4" stop-color="#ff6f8d"/><stop offset="0.45" stop-color="#ff4a6d"/><stop offset="0.51" stop-color="#ff2a50"/><stop offset="0.6" stop-color="#ff0e37"/><stop offset="0.69" stop-color="#ff0029"/><stop offset="0.91" stop-color="#ff0015"/><stop offset="1" stop-color="#ff0010"/></linearGradient>
<linearGradient id="s52" x1="1027.86" y1="0" x2="1654.43" y2="0" gradientUnits="userSpaceOnUse"><stop offset="0" stop-color="#00ffb7"/><stop offset="0.15" stop-color="#00ffd6"/><stop offset="0.22" stop-color="#00ffea"/><stop offset="0.26" stop-color="#55fff9"/><stop offset="0.28" stop-color="#87fcff"/><stop offset="0.33" stop-color="#fee5ff"/><stop offset="0.35" stop-color="#ffb3d1"/><stop offset="0.38" stop-color="#f8a"/><stop offset="0.41" stop-color="#ff6287"/><stop offset="0.46" stop-color="#ff3f67"/><stop offset="0.53" stop-color="#ff214b"/><stop offset="0.64" stop-color="#ff0633"/><stop offset="0.69" stop-color="#ff002b"/><stop offset="0.91" stop-color="#ff0016"/><stop offset="1" stop-color="#f01"/></linearGradient>
<linearGradient id="s53" x1="1028.52" y1="0" x2="1652.48" y2="0" gradientUnits="userSpaceOnUse"><stop offset="0" stop-color="#00ffbc"/><stop offset="0.15" stop-color="#00ffdb"/><stop offset="0.22" stop-color="#01fff2"/><stop offset="0.26" stop-color="#53fdff"/><stop offset="0.33" stop-color="#eddfff"/><stop offset="0.33" stop-color="#ffdafe"/><stop offset="0.35" stop-color="#ffadd3"/><stop offset="0.38" stop-color="#ff83ac"/><stop offset="0.42" stop-color="#ff5e88"/><stop offset="0.47" stop-color="#ff3b68"/><stop offset="0.54" stop-color="#ff1d4b"/><stop offset="0.66" stop-color="#ff0332"/><stop offset="0.72" stop-color="#ff0029"/><stop offset="0.96" stop-color="#ff0015"/><stop offset="1" stop-color="#ff0012"/></linearGradient>
<linearGradient id="s54" x1="1029.18" y1="0" x2="1650.54" y2="0" gradientUnits="userSpaceOnUse"><stop offset="0" stop-color="#00ffc1"/><stop offset="0.15" stop-color="#00ffe1"/><stop offset="0.22" stop-color="#00fff9"/><stop offset="0.24" stop-color="#2dfcff"/><stop offset="0.31" stop-color="#c7ddff"/><stop offset="0.34" stop-color="#ffd2ff"/><stop offset="0.36" stop-color="#ffa7d5"/><stop offset="0.39" stop-color="#ff7dac"/><stop offset="0.42" stop-color="#ff5888"/><stop offset="0.48" stop-color="#ff3767"/><stop offset="0.56" stop-color="#ff194a"/><stop offset="0.67" stop-color="#ff0032"/><stop offset="0.87" stop-color="#ff001c"/><stop offset="1" stop-color="#ff0013"/></linearGradient>
<linearGradient id="s55" x1="1029.83" y1="0" x2="1648.59" y2="0" gradientUnits="userSpaceOnUse"><stop offset="0" stop-color="#00ffc6"/><stop offset="0.14" stop-color="#00ffe7"/><stop offset="0.22" stop-color="#00fdff"/><stop offset="0.29" stop-color="#99deff"/><stop offset="0.34" stop-color="#fecaff"/><stop offset="0.37" stop-color="#ff9acf"/><stop offset="0.4" stop-color="#ff72a7"/><stop offset="0.44" stop-color="#ff4e82"/><stop offset="0.5" stop-color="#ff2d62"/><stop offset="0.59" stop-color="#ff1145"/><stop offset="0.68" stop-color="#ff0032"/><stop offset="0.88" stop-color="#ff001c"/><stop offset="1" stop-color="#ff0015"/></linearGradient>
<linearGradient id="s56" x1="1030.49" y1="0" x2="1646.65" y2="0" gradientUnits="userSpaceOnUse"><stop offset="0" stop-color="#00ffcb"/><stop offset="0.14" stop-color="#00ffec"/><stop offset="0.2" stop-color="#00fdff"/><stop offset="0.22" stop-color="#01f5ff"/><stop offset="0.3" stop-color="#9ad6ff"/><stop offset="0.34" stop-color="#ffc0fe"/><stop offset="0.37" stop-color="#ff97d3"/><stop offset="0.4" stop-color="#ff70ab"/><stop offset="0.44" stop-color="#ff4c86"/><stop offset="0.5" stop-color="#ff2d65"/><stop offset="0.58" stop-color="#ff1148"/><stop offset="0.68" stop-color="#ff0035"/><stop offset="0.87" stop-color="#ff001e"/><stop offset="1" stop-color="#ff0016"/></linearGradient>
<linearGradient id="s57" x1="1031.18" y1="0" x2="1644.7" y2="0" gradientUnits="userSpaceOnUse"><stop offset="0" stop-color="#00ffd0"/><stop offset="0.14" stop-color="#00fff2"/><stop offset="0.18" stop-color="#00fdff"/><stop offset="0.22" stop-color="#0ef"/><stop offset="0.29" stop-color="#8ad1ff"/><stop offset="0.35" stop-color="#ffb9ff"/><stop offset="0.37" stop-color="#ff8fd2"/><stop offset="0.4" stop-color="#ff6aab"/><stop offset="0.44" stop-color="#ff4886"/><stop offset="0.51" stop-color="#ff2a65"/><stop offset="0.59" stop-color="#ff0e48"/><stop offset="0.68" stop-color="#ff0037"/><stop offset="0.87" stop-color="#ff0020"/><stop offset="1" stop-color="#ff0017"/></linearGradient>
<linearGradient id="s58" x1="1031.88" y1="0" x2="1642.76" y2="0" gradientUnits="userSpaceOnUse"><stop offset="0" stop-color="#00ffd6"/><stop offset="0.13" stop-color="#00fff8"/><stop offset="0.16" stop-color="#00fcff"/><stop offset="0.22" stop-color="#00e7ff"/><stop offset="0.3" stop-color="#99c7ff"/><stop offset="0.35" stop-color="#feb2ff"/><stop offset="0.38" stop-color="#ff86cf"/><stop offset="0.41" stop-color="#ff62a7"/><stop offset="0.46" stop-color="#ff4183"/><stop offset="0.52" stop-color="#ff2362"/><stop offset="0.62" stop-color="#ff0945"/><stop offset="0.68" stop-color="#ff0039"/><stop offset="0.87" stop-color="#f02"/><stop offset="1" stop-color="#ff0018"/></linearGradient>
<linearGradient id="s59" x1="1032.59" y1="0" x2="1640.81" y2="0" gradientUnits="userSpaceOnUse"><stop offset="0" stop-color="#00ffdb"/><stop offset="0.14" stop-color="#00fdff"/><stop offset="0.22" stop-color="#02e0ff"/><stop offset="0.3" stop-color="#9ac0ff"/><stop offset="0.36" stop-color="#ffa9fe"/><stop offset="0.38" stop-color="#ff83d3"/><stop offset="0.41" stop-color="#ff60ab"/><stop offset="0.46" stop-color="#ff4087"/><stop offset="0.52" stop-color="#ff2366"/><stop offset="0.61" stop-color="#ff0a49"/><stop offset="0.68" stop-color="#ff003b"/><stop offset="0.86" stop-color="#ff0024"/><stop offset="1" stop-color="#ff0019"/></linearGradient>
<linearGradient id="s60" x1="1033.29" y1="0" x2="1638.87" y2="0" gradientUnits="userSpaceOnUse"><stop offset="0" stop-color="#00ffe0"/><stop offset="0.12" stop-color="#00fdff"/><stop offset="0.22" stop-color="#00daff"/><stop offset="0.3" stop-color="#94baff"/><stop offset="0.36" stop-color="#ffa3ff"/><stop offset="0.38" stop-color="#ff7dd2"/><stop offset="0.42" stop-color="#ff5aa9"/><stop offset="0.47" stop-color="#ff3b85"/><stop offset="0.53" stop-color="#ff1f64"/><stop offset="0.63" stop-color="#ff0647"/><stop offset="0.68" stop-color="#ff003d"/><stop offset="0.86" stop-color="#ff0025"/><stop offset="1" stop-color="#ff001b"/></linearGradient>
<linearGradient id="s61" x1="1034" y1="0" x2="1636.92" y2="0" gradientUnits="userSpaceOnUse"><stop offset="0" stop-color="#00ffe6"/><stop offset="0.1" stop-color="#00fdff"/><stop offset="0.22" stop-color="#01d3ff"/><stop offset="0.31" stop-color="#9cb2ff"/><stop offset="0.36" stop-color="#fe9dff"/><stop offset="0.39" stop-color="#ff75cf"/><stop offset="0.43" stop-color="#ff53a6"/><stop offset="0.48" stop-color="#ff3482"/><stop offset="0.55" stop-color="#ff1961"/><stop offset="0.65" stop-color="#ff0245"/><stop offset="0.81" stop-color="#ff002c"/><stop offset="1" stop-color="#ff001c"/></linearGradient>
<linearGradient id="s62" x1="1034.71" y1="0" x2="1634.97" y2="0" gradientUnits="userSpaceOnUse"><stop offset="0" stop-color="#00ffeb"/><stop offset="0.08" stop-color="#00fdff"/><stop offset="0.22" stop-color="#02cdff"/><stop offset="0.31" stop-color="#9dacff"/><stop offset="0.37" stop-color="#ff95fe"/><stop offset="0.39" stop-color="#ff72d3"/><stop offset="0.43" stop-color="#ff51a9"/><stop offset="0.48" stop-color="#ff3485"/><stop offset="0.55" stop-color="#ff1965"/><stop offset="0.65" stop-color="#ff0247"/><stop offset="0.81" stop-color="#ff002e"/><stop offset="1" stop-color="#ff001d"/></linearGradient>
<linearGradient id="s63" x1="1035.45" y1="0" x2="1633.03" y2="0" gradientUnits="userSpaceOnUse"><stop offset="0" stop-color="#00fff1"/><stop offset="0.06" stop-color="#00fdff"/><stop offset="0.22" stop-color="#00c8ff"/><stop offset="0.31" stop-color="#9ba6ff"/><stop offset="0.37" stop-color="#ff8ffe"/><stop offset="0.4" stop-color="#ff6cd2"/><stop offset="0.44" stop-color="#ff4daa"/><stop offset="0.49" stop-color="#ff3085"/><stop offset="0.56" stop-color="#ff1664"/><stop offset="0.66" stop-color="#ff0047"/><stop offset="0.82" stop-color="#ff002e"/><stop offset="1" stop-color="#ff001e"/></linearGradient>
<linearGradient id="s64" x1="1036.2" y1="0" x2="1631.08" y2="0" gradientUnits="userSpaceOnUse"><stop offset="0" stop-color="#00fff7"/><stop offset="0.04" stop-color="#00fdff"/><stop offset="0.22" stop-color="#01c2ff"/><stop offset="0.32" stop-color="#9ca0ff"/><stop offset="0.37" stop-color="#ff8aff"/><stop offset="0.4" stop-color="#ff68d3"/><stop offset="0.44" stop-color="#ff4aab"/><stop offset="0.49" stop-color="#ff2e86"/><stop offset="0.56" stop-color="#ff1566"/><stop offset="0.66" stop-color="#ff0049"/><stop offset="0.82" stop-color="#ff0030"/><stop offset="1" stop-color="#ff0020"/></linearGradient>
<linearGradient id="s65" x1="1036.95" y1="0" x2="1629.14" y2="0" gradientUnits="userSpaceOnUse"><stop offset="0" stop-color="#00fffd"/><stop offset="0.05" stop-color="#00f3ff"/><stop offset="0.22" stop-color="#00bdff"/><stop offset="0.32" stop-color="#979bff"/><stop offset="0.38" stop-color="#ff83fd"/><stop offset="0.41" stop-color="#ff63d2"/><stop offset="0.45" stop-color="#ff45aa"/><stop offset="0.5" stop-color="#ff2a85"/><stop offset="0.57" stop-color="#ff1164"/><stop offset="0.66" stop-color="#ff004b"/><stop offset="0.82" stop-color="#ff0031"/><stop offset="1" stop-color="#ff0021"/></linearGradient>
<linearGradient id="s66" x1="1037.7" y1="0" x2="1627.19" y2="0" gradientUnits="userSpaceOnUse"><stop offset="0" stop-color="#00fbff"/><stop offset="0.22" stop-color="#01b8ff"/><stop offset="0.32" stop-color="#9b95ff"/><stop offset="0.38" stop-color="#ff7efe"/><stop offset="0.41" stop-color="#ff5dd1"/><stop offset="0.45" stop-color="#ff40a8"/><stop offset="0.51" stop-color="#ff2684"/><stop offset="0.58" stop-color="#ff0e63"/><stop offset="0.66" stop-color="#ff004d"/><stop offset="0.82" stop-color="#f03"/><stop offset="1" stop-color="#f02"/></linearGradient>
<linearGradient id="s67" x1="1038.45" y1="0" x2="1625.25" y2="0" gradientUnits="userSpaceOnUse"><stop offset="0" stop-color="#00f6ff"/><stop offset="0.22" stop-color="#02b3ff"/><stop offset="0.33" stop-color="#9c90ff"/><stop offset="0.39" stop-color="#ff79ff"/><stop offset="0.42" stop-color="#ff5ad2"/><stop offset="0.46" stop-color="#ff3daa"/><stop offset="0.51" stop-color="#ff2485"/><stop offset="0.59" stop-color="#ff0d65"/><stop offset="0.66" stop-color="#ff0050"/><stop offset="0.81" stop-color="#ff0035"/><stop offset="1" stop-color="#ff0023"/></linearGradient>
<linearGradient id="s68" x1="1039.2" y1="0" x2="1623.3" y2="0" gradientUnits="userSpaceOnUse"><stop offset="0" stop-color="#00f0ff"/><stop offset="0.22" stop-color="#01aeff"/><stop offset="0.33" stop-color="#9a8bff"/><stop offset="0.39" stop-color="#ff74ff"/><stop offset="0.42" stop-color="#ff55d2"/><stop offset="0.46" stop-color="#ff3aaa"/><stop offset="0.52" stop-color="#ff2185"/><stop offset="0.6" stop-color="#ff0a64"/><stop offset="0.66" stop-color="#ff0052"/><stop offset="0.81" stop-color="#ff0038"/><stop offset="1" stop-color="#ff0025"/></linearGradient>
<linearGradient id="s69" x1="1039.98" y1="0" x2="1621.36" y2="0" gradientUnits="userSpaceOnUse"><stop offset="0" stop-color="#00ebff"/><stop offset="0.23" stop-color="#02aaff"/><stop offset="0.33" stop-color="#9b86ff"/><stop offset="0.39" stop-color="#ff6efd"/><stop offset="0.43" stop-color="#ff50d1"/><stop offset="0.47" stop-color="#ff35a8"/><stop offset="0.53" stop-color="#ff1d84"/><stop offset="0.61" stop-color="#ff0763"/><stop offset="0.66" stop-color="#ff0054"/><stop offset="0.81" stop-color="#ff0039"/><stop offset="1" stop-color="#ff0026"/></linearGradient>
<linearGradient id="s70" x1="1040.77" y1="0" x2="1619.41" y2="0" gradientUnits="userSpaceOnUse"><stop offset="0" stop-color="#00e6ff"/><stop offset="0.22" stop-color="#00a5ff"/><stop offset="0.33" stop-color="#9a82ff"/><stop offset="0.4" stop-color="#ff6afe"/><stop offset="0.43" stop-color="#ff4dd2"/><stop offset="0.47" stop-color="#f3a"/><stop offset="0.53" stop-color="#ff1b85"/><stop offset="0.62" stop-color="#ff0664"/><stop offset="0.66" stop-color="#ff0057"/><stop offset="0.81" stop-color="#ff003c"/><stop offset="1" stop-color="#ff0027"/></linearGradient>
<linearGradient id="s71" x1="1041.56" y1="0" x2="1617.47" y2="0" gradientUnits="userSpaceOnUse"><stop offset="0" stop-color="#00e1ff"/><stop offset="0.23" stop-color="#01a1ff"/><stop offset="0.34" stop-color="#9b7dff"/><stop offset="0.4" stop-color="#ff65fe"/><stop offset="0.43" stop-color="#ff4ad3"/><stop offset="0.48" stop-color="#ff30ab"/><stop offset="0.54" stop-color="#ff1986"/><stop offset="0.62" stop-color="#ff0465"/><stop offset="0.66" stop-color="#ff0059"/><stop offset="0.81" stop-color="#ff003d"/><stop offset="1" stop-color="#ff0029"/></linearGradient>
<linearGradient id="s72" x1="1042.35" y1="0" x2="1615.52" y2="0" gradientUnits="userSpaceOnUse"><stop offset="0" stop-color="#00dcff"/><stop offset="0.23" stop-color="#009dff"/><stop offset="0.34" stop-color="#9979ff"/><stop offset="0.4" stop-color="#ff61ff"/><stop offset="0.44" stop-color="#ff45d2"/><stop offset="0.49" stop-color="#ff2ca9"/><stop offset="0.55" stop-color="#ff1685"/><stop offset="0.63" stop-color="#ff0264"/><stop offset="0.76" stop-color="#ff0047"/><stop offset="0.96" stop-color="#ff002e"/><stop offset="1" stop-color="#ff002a"/></linearGradient>
<linearGradient id="s73" x1="1043.15" y1="0" x2="1613.57" y2="0" gradientUnits="userSpaceOnUse"><stop offset="0" stop-color="#00d7ff"/><stop offset="0.23" stop-color="#0199ff"/><stop offset="0.34" stop-color="#9b75ff"/><stop offset="0.41" stop-color="#ff5cfd"/><stop offset="0.45" stop-color="#ff41d1"/><stop offset="0.49" stop-color="#ff29a8"/><stop offset="0.56" stop-color="#ff1384"/><stop offset="0.65" stop-color="#ff0063"/><stop offset="0.78" stop-color="#ff0046"/><stop offset="0.98" stop-color="#ff002d"/><stop offset="1" stop-color="#ff002c"/></linearGradient>
<linearGradient id="s74" x1="1043.94" y1="0" x2="1611.63" y2="0" gradientUnits="userSpaceOnUse"><stop offset="0" stop-color="#00d2ff"/><stop offset="0.23" stop-color="#0095ff"/><stop offset="0.34" stop-color="#9971ff"/><stop offset="0.41" stop-color="#ff58fe"/><stop offset="0.45" stop-color="#ff3ed2"/><stop offset="0.5" stop-color="#ff27a9"/><stop offset="0.56" stop-color="#ff1184"/><stop offset="0.65" stop-color="#ff0065"/><stop offset="0.78" stop-color="#ff0048"/><stop offset="0.98" stop-color="#ff002f"/><stop offset="1" stop-color="#ff002d"/></linearGradient>
<linearGradient id="s75" x1="1044.74" y1="0" x2="1609.68" y2="0" gradientUnits="userSpaceOnUse"><stop offset="0" stop-color="#00ceff"/><stop offset="0.23" stop-color="#0191ff"/><stop offset="0.35" stop-color="#9a6dff"/><stop offset="0.42" stop-color="#ff54fe"/><stop offset="0.45" stop-color="#ff3ad1"/><stop offset="0.5" stop-color="#ff24a9"/><stop offset="0.57" stop-color="#ff0f85"/><stop offset="0.65" stop-color="#ff0068"/><stop offset="0.78" stop-color="#ff004a"/><stop offset="0.98" stop-color="#ff0031"/><stop offset="1" stop-color="#ff002e"/></linearGradient>
<linearGradient id="s76" x1="1045.57" y1="0" x2="1607.74" y2="0" gradientUnits="userSpaceOnUse"><stop offset="0" stop-color="#00c9ff"/><stop offset="0.23" stop-color="#008eff"/><stop offset="0.35" stop-color="#9969ff"/><stop offset="0.42" stop-color="#ff50ff"/><stop offset="0.46" stop-color="#ff38d2"/><stop offset="0.51" stop-color="#ff21a9"/><stop offset="0.58" stop-color="#ff0c84"/><stop offset="0.65" stop-color="#ff006b"/><stop offset="0.77" stop-color="#ff004d"/><stop offset="0.97" stop-color="#f03"/><stop offset="1" stop-color="#ff0030"/></linearGradient>
<linearGradient id="s77" x1="1046.4" y1="0" x2="1605.79" y2="0" gradientUnits="userSpaceOnUse"><stop offset="0" stop-color="#00c5ff"/><stop offset="0.23" stop-color="#018aff"/><stop offset="0.35" stop-color="#9a65ff"/><stop offset="0.43" stop-color="#ff4dff"/><stop offset="0.46" stop-color="#ff35d3"/><stop offset="0.51" stop-color="#ff1faa"/><stop offset="0.58" stop-color="#ff0b86"/><stop offset="0.64" stop-color="#ff006e"/><stop offset="0.77" stop-color="#ff0050"/><stop offset="0.96" stop-color="#ff0035"/><stop offset="1" stop-color="#ff0031"/></linearGradient>
<linearGradient id="s78" x1="1047.23" y1="0" x2="1603.85" y2="0" gradientUnits="userSpaceOnUse"><stop offset="0" stop-color="#00c1ff"/><stop offset="0.23" stop-color="#0087ff"/><stop offset="0.35" stop-color="#9b61ff"/><stop offset="0.43" stop-color="#ff48fd"/><stop offset="0.47" stop-color="#ff30d1"/><stop offset="0.52" stop-color="#ff1ba8"/><stop offset="0.59" stop-color="#ff0884"/><stop offset="0.64" stop-color="#ff0070"/><stop offset="0.77" stop-color="#ff0052"/><stop offset="0.96" stop-color="#ff0037"/><stop offset="1" stop-color="#f03"/></linearGradient>
<linearGradient id="s79" x1="1048.06" y1="0" x2="1601.9" y2="0" gradientUnits="userSpaceOnUse"><stop offset="0" stop-color="#00bdff"/><stop offset="0.23" stop-color="#0183ff"/><stop offset="0.36" stop-color="#9c5dff"/><stop offset="0.44" stop-color="#ff45fd"/><stop offset="0.47" stop-color="#ff2ed1"/><stop offset="0.53" stop-color="#ff19a9"/><stop offset="0.6" stop-color="#ff0684"/><stop offset="0.64" stop-color="#ff0073"/><stop offset="0.77" stop-color="#ff0054"/><stop offset="0.95" stop-color="#ff0039"/><stop offset="1" stop-color="#ff0034"/></linearGradient>
<linearGradient id="s80" x1="1048.9" y1="0" x2="1599.96" y2="0" gradientUnits="userSpaceOnUse"><stop offset="0" stop-color="#00b9ff"/><stop offset="0.23" stop-color="#0080ff"/><stop offset="0.36" stop-color="#9b5aff"/><stop offset="0.44" stop-color="#ff41fe"/><stop offset="0.48" stop-color="#ff2bd2"/><stop offset="0.53" stop-color="#ff17aa"/><stop offset="0.6" stop-color="#ff0585"/><stop offset="0.65" stop-color="#ff0076"/><stop offset="0.77" stop-color="#ff0056"/><stop offset="0.95" stop-color="#ff003b"/><stop offset="1" stop-color="#ff0036"/></linearGradient>
<linearGradient id="s81" x1="1049.73" y1="0" x2="1598.01" y2="0" gradientUnits="userSpaceOnUse"><stop offset="0" stop-color="#00b5ff"/><stop offset="0.23" stop-color="#017dff"/><stop offset="0.36" stop-color="#9c57ff"/><stop offset="0.44" stop-color="#ff3efe"/><stop offset="0.49" stop-color="#ff28d1"/><stop offset="0.54" stop-color="#ff14a9"/><stop offset="0.61" stop-color="#ff0284"/><stop offset="0.72" stop-color="#ff0063"/><stop offset="0.88" stop-color="#ff0046"/><stop offset="1" stop-color="#ff0037"/></linearGradient>
<linearGradient id="s82" x1="1050.58" y1="0" x2="1596.07" y2="0" gradientUnits="userSpaceOnUse"><stop offset="0" stop-color="#00b1ff"/><stop offset="0.23" stop-color="#007aff"/><stop offset="0.36" stop-color="#9b54ff"/><stop offset="0.45" stop-color="#ff3bff"/><stop offset="0.49" stop-color="#ff26d2"/><stop offset="0.54" stop-color="#ff12aa"/><stop offset="0.62" stop-color="#ff0185"/><stop offset="0.73" stop-color="#ff0064"/><stop offset="0.88" stop-color="#ff0047"/><stop offset="1" stop-color="#ff0039"/></linearGradient>
<linearGradient id="s83" x1="1051.46" y1="0" x2="1594.12" y2="0" gradientUnits="userSpaceOnUse"><stop offset="0" stop-color="#00aeff"/><stop offset="0.23" stop-color="#0177ff"/><stop offset="0.37" stop-color="#9c51ff"/><stop offset="0.45" stop-color="#ff38ff"/><stop offset="0.49" stop-color="#ff23d3"/><stop offset="0.55" stop-color="#ff10aa"/><stop offset="0.63" stop-color="#ff0085"/><stop offset="0.74" stop-color="#ff0064"/><stop offset="0.9" stop-color="#ff0047"/><stop offset="1" stop-color="#ff003a"/></linearGradient>
<linearGradient id="s84" x1="1052.33" y1="0" x2="1592.17" y2="0" gradientUnits="userSpaceOnUse"><stop offset="0" stop-color="#0af"/><stop offset="0.23" stop-color="#0074ff"/><stop offset="0.37" stop-color="#9b4eff"/><stop offset="0.46" stop-color="#ff34fd"/><stop offset="0.5" stop-color="#ff20d1"/><stop offset="0.56" stop-color="#ff0da9"/><stop offset="0.63" stop-color="#ff0087"/><stop offset="0.74" stop-color="#f06"/><stop offset="0.89" stop-color="#ff0049"/><stop offset="1" stop-color="#ff003c"/></linearGradient>
<linearGradient id="s85" x1="1053.21" y1="0" x2="1590.23" y2="0" gradientUnits="userSpaceOnUse"><stop offset="0" stop-color="#00a7ff"/><stop offset="0.23" stop-color="#0171ff"/><stop offset="0.37" stop-color="#9c4bff"/><stop offset="0.46" stop-color="#ff31fd"/><stop offset="0.51" stop-color="#ff1dd1"/><stop offset="0.57" stop-color="#ff0ba8"/><stop offset="0.63" stop-color="#ff008b"/><stop offset="0.73" stop-color="#ff0069"/><stop offset="0.89" stop-color="#ff004b"/><stop offset="1" stop-color="#ff003d"/></linearGradient>
<linearGradient id="s86" x1="1054.08" y1="0" x2="1588.28" y2="0" gradientUnits="userSpaceOnUse"><stop offset="0" stop-color="#00a3ff"/><stop offset="0.23" stop-color="#016fff"/><stop offset="0.38" stop-color="#9b48ff"/><stop offset="0.47" stop-color="#ff2efe"/><stop offset="0.51" stop-color="#ff1bd2"/><stop offset="0.57" stop-color="#ff0aa9"/><stop offset="0.63" stop-color="#ff008e"/><stop offset="0.73" stop-color="#ff006c"/><stop offset="0.88" stop-color="#ff004e"/><stop offset="1" stop-color="#ff003f"/></linearGradient>
<linearGradient id="s87" x1="1054.96" y1="0" x2="1586.34" y2="0" gradientUnits="userSpaceOnUse"><stop offset="0" stop-color="#00a0ff"/><stop offset="0.23" stop-color="#026cff"/><stop offset="0.38" stop-color="#9c45ff"/><stop offset="0.47" stop-color="#ff2bfe"/><stop offset="0.52" stop-color="#ff18d1"/><stop offset="0.58" stop-color="#ff07a8"/><stop offset="0.63" stop-color="#ff0092"/><stop offset="0.73" stop-color="#ff006f"/><stop offset="0.88" stop-color="#ff0051"/><stop offset="1" stop-color="#ff0041"/></linearGradient>
<linearGradient id="s88" x1="1055.83" y1="0" x2="1584.39" y2="0" gradientUnits="userSpaceOnUse"><stop offset="0" stop-color="#009dff"/><stop offset="0.23" stop-color="#0169ff"/><stop offset="0.38" stop-color="#9a42ff"/><stop offset="0.47" stop-color="#ff29fe"/><stop offset="0.52" stop-color="#ff16d2"/><stop offset="0.58" stop-color="#ff06a9"/><stop offset="0.63" stop-color="#ff0095"/><stop offset="0.73" stop-color="#ff0072"/><stop offset="0.87" stop-color="#ff0053"/><stop offset="1" stop-color="#ff0042"/></linearGradient>
<linearGradient id="s89" x1="1056.74" y1="0" x2="1582.45" y2="0" gradientUnits="userSpaceOnUse"><stop offset="0" stop-color="#09f"/><stop offset="0.23" stop-color="#0266ff"/><stop offset="0.39" stop-color="#9c3fff"/><stop offset="0.48" stop-color="#ff26ff"/><stop offset="0.53" stop-color="#ff14d3"/><stop offset="0.59" stop-color="#ff04aa"/><stop offset="0.63" stop-color="#ff0097"/><stop offset="0.73" stop-color="#ff0074"/><stop offset="0.88" stop-color="#f05"/><stop offset="1" stop-color="#f04"/></linearGradient>
<linearGradient id="s90" x1="1057.67" y1="0" x2="1580.5" y2="0" gradientUnits="userSpaceOnUse"><stop offset="0" stop-color="#0096ff"/><stop offset="0.23" stop-color="#0164ff"/><stop offset="0.39" stop-color="#9b3dff"/><stop offset="0.48" stop-color="#ff24ff"/><stop offset="0.53" stop-color="#ff12d3"/><stop offset="0.6" stop-color="#ff02aa"/><stop offset="0.68" stop-color="#ff0085"/><stop offset="0.81" stop-color="#ff0064"/><stop offset="0.99" stop-color="#ff0047"/><stop offset="1" stop-color="#ff0046"/></linearGradient>
<linearGradient id="s91" x1="1058.59" y1="0" x2="1578.56" y2="0" gradientUnits="userSpaceOnUse"><stop offset="0" stop-color="#0093ff"/><stop offset="0.23" stop-color="#0262ff"/><stop offset="0.39" stop-color="#9c3aff"/><stop offset="0.49" stop-color="#ff20fd"/><stop offset="0.54" stop-color="#ff0fd1"/><stop offset="0.61" stop-color="#ff00a9"/><stop offset="0.7" stop-color="#ff0084"/><stop offset="0.82" stop-color="#ff0063"/><stop offset="1" stop-color="#ff0047"/></linearGradient>
<linearGradient id="s92" x1="1059.51" y1="0" x2="1576.61" y2="0" gradientUnits="userSpaceOnUse"><stop offset="0" stop-color="#0090ff"/><stop offset="0.23" stop-color="#015fff"/><stop offset="0.39" stop-color="#9b38ff"/><stop offset="0.5" stop-color="#ff1efd"/><stop offset="0.55" stop-color="#ff0dd1"/><stop offset="0.61" stop-color="#f0a"/><stop offset="0.7" stop-color="#ff0085"/><stop offset="0.83" stop-color="#ff0064"/><stop offset="1" stop-color="#ff0049"/></linearGradient>
<linearGradient id="s93" x1="1060.44" y1="0" x2="1574.66" y2="0" gradientUnits="userSpaceOnUse"><stop offset="0" stop-color="#008dff"/><stop offset="0.23" stop-color="#015dff"/><stop offset="0.4" stop-color="#9a36ff"/><stop offset="0.5" stop-color="#ff1bfd"/><stop offset="0.55" stop-color="#ff0bd1"/><stop offset="0.61" stop-color="#ff00ad"/><stop offset="0.7" stop-color="#f08"/><stop offset="0.83" stop-color="#ff0067"/><stop offset="1" stop-color="#ff004b"/></linearGradient>
<linearGradient id="s94" x1="1061.36" y1="0" x2="1572.72" y2="0" gradientUnits="userSpaceOnUse"><stop offset="0" stop-color="#008aff"/><stop offset="0.23" stop-color="#025bff"/><stop offset="0.4" stop-color="#9b33ff"/><stop offset="0.5" stop-color="#ff19fe"/><stop offset="0.56" stop-color="#ff09d1"/><stop offset="0.61" stop-color="#ff00b2"/><stop offset="0.7" stop-color="#ff008c"/><stop offset="0.82" stop-color="#ff006b"/><stop offset="1" stop-color="#ff004c"/></linearGradient>
<linearGradient id="s95" x1="1062.28" y1="0" x2="1570.77" y2="0" gradientUnits="userSpaceOnUse"><stop offset="0" stop-color="#08f"/><stop offset="0.23" stop-color="#0159ff"/><stop offset="0.41" stop-color="#9c31ff"/><stop offset="0.51" stop-color="#ff17fe"/><stop offset="0.56" stop-color="#ff07d2"/><stop offset="0.61" stop-color="#ff00b6"/><stop offset="0.69" stop-color="#ff0090"/><stop offset="0.81" stop-color="#ff006e"/><stop offset="0.99" stop-color="#ff0050"/><stop offset="1" stop-color="#ff004e"/></linearGradient>
<linearGradient id="s96" x1="1063.24" y1="0" x2="1568.83" y2="0" gradientUnits="userSpaceOnUse"><stop offset="0" stop-color="#0085ff"/><stop offset="0.23" stop-color="#0256ff"/><stop offset="0.41" stop-color="#9d2eff"/><stop offset="0.51" stop-color="#ff14fe"/><stop offset="0.57" stop-color="#ff05d1"/><stop offset="0.61" stop-color="#ff00ba"/><stop offset="0.69" stop-color="#ff0094"/><stop offset="0.81" stop-color="#ff0071"/><stop offset="0.98" stop-color="#ff0052"/><stop offset="1" stop-color="#ff0050"/></linearGradient>
<linearGradient id="s97" x1="1064.22" y1="0" x2="1566.88" y2="0" gradientUnits="userSpaceOnUse"><stop offset="0" stop-color="#0082ff"/><stop offset="0.23" stop-color="#0154ff"/><stop offset="0.41" stop-color="#9c2cff"/><stop offset="0.52" stop-color="#ff12fe"/><stop offset="0.57" stop-color="#ff03d1"/><stop offset="0.61" stop-color="#f0b"/><stop offset="0.7" stop-color="#ff0094"/><stop offset="0.82" stop-color="#ff0071"/><stop offset="1" stop-color="#ff0052"/><stop offset="1" stop-color="#ff0052"/></linearGradient>
<linearGradient id="s98" x1="1065.2" y1="0" x2="1564.94" y2="0" gradientUnits="userSpaceOnUse"><stop offset="0" stop-color="#0080ff"/><stop offset="0.23" stop-color="#0153ff"/><stop offset="0.41" stop-color="#9c2aff"/><stop offset="0.52" stop-color="#ff10fe"/><stop offset="0.58" stop-color="#ff02d2"/><stop offset="0.65" stop-color="#ff00a9"/><stop offset="0.76" stop-color="#ff0084"/><stop offset="0.9" stop-color="#ff0064"/><stop offset="1" stop-color="#ff0054"/></linearGradient>
<linearGradient id="s99" x1="1066.18" y1="0" x2="1562.99" y2="0" gradientUnits="userSpaceOnUse"><stop offset="0" stop-color="#007dff"/><stop offset="0.23" stop-color="#0250ff"/><stop offset="0.42" stop-color="#9d28ff"/><stop offset="0.53" stop-color="#ff0efe"/><stop offset="0.59" stop-color="#ff00d1"/><stop offset="0.66" stop-color="#ff00a8"/><stop offset="0.77" stop-color="#ff0083"/><stop offset="0.92" stop-color="#ff0063"/><stop offset="1" stop-color="#ff0056"/></linearGradient>
<linearGradient id="s100" x1="1067.16" y1="0" x2="1561.05" y2="0" gradientUnits="userSpaceOnUse"><stop offset="0" stop-color="#007aff"/><stop offset="0.23" stop-color="#014fff"/><stop offset="0.42" stop-color="#9c26ff"/><stop offset="0.53" stop-color="#ff0cfe"/><stop offset="0.59" stop-color="#ff00d2"/><stop offset="0.67" stop-color="#ff00a9"/><stop offset="0.78" stop-color="#ff0084"/><stop offset="0.92" stop-color="#ff0063"/><stop offset="1" stop-color="#ff0058"/></linearGradient>
<linearGradient id="s101" x1="1068.14" y1="0" x2="1559.1" y2="0" gradientUnits="userSpaceOnUse"><stop offset="0" stop-color="#0078ff"/><stop offset="0.23" stop-color="#014dff"/><stop offset="0.42" stop-color="#9b24ff"/><stop offset="0.54" stop-color="#ff0afe"/><stop offset="0.59" stop-color="#ff00d7"/><stop offset="0.67" stop-color="#ff00ae"/><stop offset="0.77" stop-color="#ff0089"/><stop offset="0.91" stop-color="#ff0068"/><stop offset="1" stop-color="#ff0059"/></linearGradient>
<linearGradient id="s102" x1="1069.12" y1="0" x2="1557.16" y2="0" gradientUnits="userSpaceOnUse"><stop offset="0" stop-color="#0076ff"/><stop offset="0.23" stop-color="#024bff"/><stop offset="0.43" stop-color="#9c22ff"/><stop offset="0.55" stop-color="#ff08fe"/><stop offset="0.59" stop-color="#ff00dc"/><stop offset="0.67" stop-color="#ff00b2"/><stop offset="0.77" stop-color="#ff008c"/><stop offset="0.91" stop-color="#ff006a"/><stop offset="1" stop-color="#ff005b"/></linearGradient>
<linearGradient id="s103" x1="1070.12" y1="0" x2="1555.21" y2="0" gradientUnits="userSpaceOnUse"><stop offset="0" stop-color="#0073ff"/><stop offset="0.23" stop-color="#0149ff"/><stop offset="0.43" stop-color="#9b20ff"/><stop offset="0.55" stop-color="#ff06fe"/><stop offset="0.59" stop-color="#ff00e0"/><stop offset="0.66" stop-color="#ff00b6"/><stop offset="0.76" stop-color="#ff0090"/><stop offset="0.9" stop-color="#ff006e"/><stop offset="1" stop-color="#ff005d"/></linearGradient>
<linearGradient id="s104" x1="1071.16" y1="0" x2="1553.26" y2="0" gradientUnits="userSpaceOnUse"><stop offset="0" stop-color="#0071ff"/><stop offset="0.23" stop-color="#0147ff"/><stop offset="0.43" stop-color="#9b1fff"/><stop offset="0.56" stop-color="#ff04fe"/><stop offset="0.59" stop-color="#ff00e2"/><stop offset="0.67" stop-color="#ff00b8"/><stop offset="0.77" stop-color="#ff0092"/><stop offset="0.91" stop-color="#ff006f"/><stop offset="1" stop-color="#ff005f"/></linearGradient>
<linearGradient id="s105" x1="1072.2" y1="0" x2="1551.32" y2="0" gradientUnits="userSpaceOnUse"><stop offset="0" stop-color="#006fff"/><stop offset="0.23" stop-color="#0245ff"/><stop offset="0.44" stop-color="#9c1dff"/><stop offset="0.56" stop-color="#ff02fe"/><stop offset="0.62" stop-color="#ff00d2"/><stop offset="0.71" stop-color="#f0a"/><stop offset="0.82" stop-color="#ff0085"/><stop offset="0.98" stop-color="#ff0064"/><stop offset="1" stop-color="#ff0061"/></linearGradient>
<linearGradient id="s106" x1="1073.24" y1="0" x2="1549.37" y2="0" gradientUnits="userSpaceOnUse"><stop offset="0" stop-color="#006cff"/><stop offset="0.23" stop-color="#0144ff"/><stop offset="0.44" stop-color="#9b1bff"/><stop offset="0.57" stop-color="#ff00fe"/><stop offset="0.63" stop-color="#ff00d2"/><stop offset="0.72" stop-color="#ff00a9"/><stop offset="0.84" stop-color="#ff0084"/><stop offset="1" stop-color="#ff0063"/></linearGradient>
<linearGradient id="s107" x1="1074.28" y1="0" x2="1547.43" y2="0" gradientUnits="userSpaceOnUse"><stop offset="0" stop-color="#006aff"/><stop offset="0.23" stop-color="#0142ff"/><stop offset="0.44" stop-color="#9b19ff"/><stop offset="0.57" stop-color="#ff00fe"/><stop offset="0.64" stop-color="#ff00d2"/><stop offset="0.72" stop-color="#ff00a9"/><stop offset="0.84" stop-color="#ff0084"/><stop offset="1" stop-color="#ff0065"/></linearGradient>
<linearGradient id="s108" x1="1075.32" y1="0" x2="1545.48" y2="0" gradientUnits="userSpaceOnUse"><stop offset="0" stop-color="#0068ff"/><stop offset="0.23" stop-color="#0240ff"/><stop offset="0.45" stop-color="#9c17ff"/><stop offset="0.57" stop-color="#fb00ff"/><stop offset="0.58" stop-color="#ff00fb"/><stop offset="0.65" stop-color="#ff00cf"/><stop offset="0.74" stop-color="#ff00a6"/><stop offset="0.87" stop-color="#ff0081"/><stop offset="1" stop-color="#ff0067"/></linearGradient>
<linearGradient id="s109" x1="1076.36" y1="0" x2="1543.54" y2="0" gradientUnits="userSpaceOnUse"><stop offset="0" stop-color="#06f"/><stop offset="0.23" stop-color="#023fff"/><stop offset="0.45" stop-color="#9b16ff"/><stop offset="0.57" stop-color="#f400ff"/><stop offset="0.59" stop-color="#ff00fc"/><stop offset="0.65" stop-color="#ff00d0"/><stop offset="0.75" stop-color="#ff00a7"/><stop offset="0.87" stop-color="#ff0083"/><stop offset="1" stop-color="#ff0069"/></linearGradient>
<linearGradient id="s110" x1="1077.4" y1="0" x2="1541.59" y2="0" gradientUnits="userSpaceOnUse"><stop offset="0" stop-color="#0064ff"/><stop offset="0.23" stop-color="#013dff"/><stop offset="0.45" stop-color="#9b14ff"/><stop offset="0.57" stop-color="#e0f"/><stop offset="0.59" stop-color="#ff00fe"/><stop offset="0.66" stop-color="#ff00d2"/><stop offset="0.75" stop-color="#ff00a9"/><stop offset="0.88" stop-color="#ff0084"/><stop offset="1" stop-color="#ff006b"/></linearGradient>
<linearGradient id="s111" x1="1078.5" y1="0" x2="1539.65" y2="0" gradientUnits="userSpaceOnUse"><stop offset="0" stop-color="#0062ff"/><stop offset="0.23" stop-color="#013cff"/><stop offset="0.46" stop-color="#9a13ff"/><stop offset="0.56" stop-color="#e800ff"/><stop offset="0.6" stop-color="#ff00fe"/><stop offset="0.67" stop-color="#ff00d1"/><stop offset="0.76" stop-color="#ff00a8"/><stop offset="0.89" stop-color="#ff0083"/><stop offset="1" stop-color="#ff006d"/></linearGradient>
<linearGradient id="s112" x1="1079.59" y1="0" x2="1537.7" y2="0" gradientUnits="userSpaceOnUse"><stop offset="0" stop-color="#005fff"/><stop offset="0.23" stop-color="#023aff"/><stop offset="0.46" stop-color="#9b11ff"/><stop offset="0.56" stop-color="#e200ff"/><stop offset="0.6" stop-color="#ff00fe"/><stop offset="0.67" stop-color="#ff00d1"/><stop offset="0.77" stop-color="#ff00a8"/><stop offset="0.9" stop-color="#ff0084"/><stop offset="1" stop-color="#ff0070"/></linearGradient>
<linearGradient id="s113" x1="1080.68" y1="0" x2="1535.76" y2="0" gradientUnits="userSpaceOnUse"><stop offset="0" stop-color="#005dff"/><stop offset="0.23" stop-color="#0239ff"/><stop offset="0.47" stop-color="#9d0fff"/><stop offset="0.56" stop-color="#d0f"/><stop offset="0.61" stop-color="#ff00fe"/><stop offset="0.68" stop-color="#ff00d1"/><stop offset="0.78" stop-color="#ff00a9"/><stop offset="0.91" stop-color="#ff0084"/><stop offset="1" stop-color="#ff0072"/></linearGradient>
<linearGradient id="s114" x1="1081.77" y1="0" x2="1533.81" y2="0" gradientUnits="userSpaceOnUse"><stop offset="0" stop-color="#005cff"/><stop offset="0.23" stop-color="#0137ff"/><stop offset="0.47" stop-color="#9c0eff"/><stop offset="0.56" stop-color="#d800ff"/><stop offset="0.61" stop-color="#ff00fe"/><stop offset="0.69" stop-color="#ff00d1"/><stop offset="0.79" stop-color="#ff00a8"/><stop offset="0.92" stop-color="#ff0083"/><stop offset="1" stop-color="#ff0074"/></linearGradient>
<linearGradient id="s115" x1="1082.86" y1="0" x2="1531.86" y2="0" gradientUnits="userSpaceOnUse"><stop offset="0" stop-color="#005aff"/><stop offset="0.23" stop-color="#0136ff"/><stop offset="0.47" stop-color="#9c0cff"/><stop offset="0.55" stop-color="#d200ff"/><stop offset="0.62" stop-color="#ff00fd"/><stop offset="0.7" stop-color="#ff00d1"/><stop offset="0.8" stop-color="#ff00a8"/><stop offset="0.93" stop-color="#ff0084"/><stop offset="1" stop-color="#ff0076"/></linearGradient>
<linearGradient id="s116" x1="1083.95" y1="0" x2="1529.92" y2="0" gradientUnits="userSpaceOnUse"><stop offset="0" stop-color="#0058ff"/><stop offset="0.23" stop-color="#0234ff"/><stop offset="0.48" stop-color="#9d0bff"/><stop offset="0.55" stop-color="#c0f"/><stop offset="0.63" stop-color="#ff00fd"/><stop offset="0.7" stop-color="#ff00d1"/><stop offset="0.8" stop-color="#ff00a9"/><stop offset="0.94" stop-color="#ff0084"/><stop offset="1" stop-color="#ff0079"/></linearGradient>
<linearGradient id="s117" x1="1085.05" y1="0" x2="1527.97" y2="0" gradientUnits="userSpaceOnUse"><stop offset="0" stop-color="#0056ff"/><stop offset="0.23" stop-color="#0233ff"/><stop offset="0.48" stop-color="#9c09ff"/><stop offset="0.55" stop-color="#c700ff"/><stop offset="0.63" stop-color="#ff00fd"/><stop offset="0.71" stop-color="#ff00d0"/><stop offset="0.82" stop-color="#ff00a8"/><stop offset="0.96" stop-color="#ff0083"/><stop offset="1" stop-color="#ff007b"/></linearGradient>
<linearGradient id="s118" x1="1086.17" y1="0" x2="1526.03" y2="0" gradientUnits="userSpaceOnUse"><stop offset="0" stop-color="#0054ff"/><stop offset="0.23" stop-color="#0132ff"/><stop offset="0.49" stop-color="#9c08ff"/><stop offset="0.55" stop-color="#c200ff"/><stop offset="0.64" stop-color="#ff00fd"/><stop offset="0.72" stop-color="#ff00d1"/><stop offset="0.83" stop-color="#ff00a8"/><stop offset="0.97" stop-color="#ff0083"/><stop offset="1" stop-color="#ff007e"/></linearGradient>
<linearGradient id="s119" x1="1087.31" y1="0" x2="1524.08" y2="0" gradientUnits="userSpaceOnUse"><stop offset="0" stop-color="#0052ff"/><stop offset="0.23" stop-color="#0131ff"/><stop offset="0.49" stop-color="#9c07ff"/><stop offset="0.54" stop-color="#be00ff"/><stop offset="0.65" stop-color="#ff00fe"/><stop offset="0.73" stop-color="#ff00d2"/><stop offset="0.83" stop-color="#ff00a9"/><stop offset="0.98" stop-color="#ff0084"/><stop offset="1" stop-color="#ff0080"/></linearGradient>
<linearGradient id="s120" x1="1088.44" y1="0" x2="1522.14" y2="0" gradientUnits="userSpaceOnUse"><stop offset="0" stop-color="#0050ff"/><stop offset="0.23" stop-color="#012fff"/><stop offset="0.49" stop-color="#9b05ff"/><stop offset="0.54" stop-color="#b0f"/><stop offset="0.65" stop-color="#ff00fe"/><stop offset="0.73" stop-color="#ff00d2"/><stop offset="0.84" stop-color="#ff00a9"/><stop offset="0.99" stop-color="#ff0084"/><stop offset="1" stop-color="#ff0082"/></linearGradient>
<linearGradient id="s121" x1="1089.58" y1="0" x2="1520.19" y2="0" gradientUnits="userSpaceOnUse"><stop offset="0" stop-color="#004fff"/><stop offset="0.23" stop-color="#022eff"/><stop offset="0.5" stop-color="#9c04ff"/><stop offset="0.55" stop-color="#ba00ff"/><stop offset="0.66" stop-color="#ff00fe"/><stop offset="0.74" stop-color="#ff00d1"/><stop offset="0.85" stop-color="#ff00a9"/><stop offset="1" stop-color="#ff0085"/></linearGradient>
<linearGradient id="s122" x1="1090.71" y1="0" x2="1518.25" y2="0" gradientUnits="userSpaceOnUse"><stop offset="0" stop-color="#004dff"/><stop offset="0.23" stop-color="#022dff"/><stop offset="0.5" stop-color="#9c03ff"/><stop offset="0.58" stop-color="#c900ff"/><stop offset="0.67" stop-color="#ff00fe"/><stop offset="0.75" stop-color="#ff00d2"/><stop offset="0.86" stop-color="#ff00a9"/><stop offset="1" stop-color="#ff0087"/></linearGradient>
<linearGradient id="s123" x1="1091.85" y1="0" x2="1516.3" y2="0" gradientUnits="userSpaceOnUse"><stop offset="0" stop-color="#004bff"/><stop offset="0.23" stop-color="#012cff"/><stop offset="0.51" stop-color="#9b01ff"/><stop offset="0.67" stop-color="#ff00fe"/><stop offset="0.76" stop-color="#ff00d1"/><stop offset="0.87" stop-color="#ff00a8"/><stop offset="1" stop-color="#ff008a"/></linearGradient>
<linearGradient id="s124" x1="1092.98" y1="0" x2="1514.35" y2="0" gradientUnits="userSpaceOnUse"><stop offset="0" stop-color="#004aff"/><stop offset="0.23" stop-color="#012aff"/><stop offset="0.51" stop-color="#9b00ff"/><stop offset="0.68" stop-color="#ff00fd"/><stop offset="0.77" stop-color="#ff00d1"/><stop offset="0.89" stop-color="#ff00a8"/><stop offset="1" stop-color="#ff008c"/></linearGradient>
<linearGradient id="s125" x1="1094.14" y1="0" x2="1512.41" y2="0" gradientUnits="userSpaceOnUse"><stop offset="0" stop-color="#0048ff"/><stop offset="0.23" stop-color="#0129ff"/><stop offset="0.51" stop-color="#9b00ff"/><stop offset="0.69" stop-color="#ff00fd"/><stop offset="0.78" stop-color="#ff00d1"/><stop offset="0.89" stop-color="#ff00a9"/><stop offset="1" stop-color="#ff008f"/></linearGradient>
<linearGradient id="s126" x1="1095.3" y1="0" x2="1510.46" y2="0" gradientUnits="userSpaceOnUse"><stop offset="0" stop-color="#0046ff"/><stop offset="0.23" stop-color="#0228ff"/><stop offset="0.52" stop-color="#9b00ff"/><stop offset="0.7" stop-color="#ff00fd"/><stop offset="0.79" stop-color="#ff00d0"/><stop offset="0.91" stop-color="#ff00a8"/><stop offset="1" stop-color="#ff0091"/></linearGradient>
<linearGradient id="s127" x1="1096.47" y1="0" x2="1508.52" y2="0" gradientUnits="userSpaceOnUse"><stop offset="0" stop-color="#0045ff"/><stop offset="0.23" stop-color="#0227ff"/><stop offset="0.51" stop-color="#9600ff"/><stop offset="0.7" stop-color="#ff00fe"/><stop offset="0.79" stop-color="#ff00d1"/><stop offset="0.91" stop-color="#ff00a9"/><stop offset="1" stop-color="#ff0094"/></linearGradient>
<linearGradient id="s128" x1="1097.64" y1="0" x2="1506.57" y2="0" gradientUnits="userSpaceOnUse"><stop offset="0" stop-color="#0043ff"/><stop offset="0.23" stop-color="#0126ff"/><stop offset="0.51" stop-color="#9200ff"/><stop offset="0.71" stop-color="#ff00fe"/><stop offset="0.8" stop-color="#ff00d2"/><stop offset="0.92" stop-color="#ff00a9"/><stop offset="1" stop-color="#ff0097"/></linearGradient>
<linearGradient id="s129" x1="1098.81" y1="0" x2="1504.63" y2="0" gradientUnits="userSpaceOnUse"><stop offset="0" stop-color="#0042ff"/><stop offset="0.23" stop-color="#0125ff"/><stop offset="0.51" stop-color="#8e00ff"/><stop offset="0.72" stop-color="#ff00fe"/><stop offset="0.81" stop-color="#ff00d2"/><stop offset="0.94" stop-color="#ff00a9"/><stop offset="1" stop-color="#ff009a"/></linearGradient>
<linearGradient id="s130" x1="1099.98" y1="0" x2="1502.68" y2="0" gradientUnits="userSpaceOnUse"><stop offset="0" stop-color="#0040ff"/><stop offset="0.23" stop-color="#0124ff"/><stop offset="0.5" stop-color="#8a00ff"/><stop offset="0.73" stop-color="#ff00fe"/><stop offset="0.82" stop-color="#ff00d1"/><stop offset="0.95" stop-color="#ff00a9"/><stop offset="1" stop-color="#ff009c"/></linearGradient>
<linearGradient id="s131" x1="1101.15" y1="0" x2="1500.74" y2="0" gradientUnits="userSpaceOnUse"><stop offset="0" stop-color="#003eff"/><stop offset="0.23" stop-color="#0222ff"/><stop offset="0.5" stop-color="#8600ff"/><stop offset="0.73" stop-color="#ff00fd"/><stop offset="0.83" stop-color="#ff00d1"/><stop offset="0.96" stop-color="#ff00a8"/><stop offset="1" stop-color="#ff009f"/></linearGradient>
<linearGradient id="s132" x1="1102.33" y1="0" x2="1498.79" y2="0" gradientUnits="userSpaceOnUse"><stop offset="0" stop-color="#003dff"/><stop offset="0.23" stop-color="#0221ff"/><stop offset="0.49" stop-color="#8100ff"/><stop offset="0.74" stop-color="#ff00fd"/><stop offset="0.84" stop-color="#ff00d0"/><stop offset="0.98" stop-color="#ff00a7"/><stop offset="1" stop-color="#ff00a2"/></linearGradient>
<linearGradient id="s133" x1="1103.52" y1="0" x2="1496.85" y2="0" gradientUnits="userSpaceOnUse"><stop offset="0" stop-color="#003cff"/><stop offset="0.23" stop-color="#0220ff"/><stop offset="0.49" stop-color="#7d00ff"/><stop offset="0.75" stop-color="#ff00fd"/><stop offset="0.85" stop-color="#ff00d1"/><stop offset="0.99" stop-color="#ff00a8"/><stop offset="1" stop-color="#ff00a5"/></linearGradient>
<linearGradient id="s134" x1="1104.72" y1="0" x2="1494.9" y2="0" gradientUnits="userSpaceOnUse"><stop offset="0" stop-color="#003aff"/><stop offset="0.23" stop-color="#021fff"/><stop offset="0.49" stop-color="#7a00ff"/><stop offset="0.76" stop-color="#ff00fe"/><stop offset="0.86" stop-color="#ff00d2"/><stop offset="0.99" stop-color="#ff00a9"/><stop offset="1" stop-color="#ff00a8"/></linearGradient>
<linearGradient id="s135" x1="1105.92" y1="0" x2="1492.95" y2="0" gradientUnits="userSpaceOnUse"><stop offset="0" stop-color="#0039ff"/><stop offset="0.22" stop-color="#011eff"/><stop offset="0.48" stop-color="#7600ff"/><stop offset="0.76" stop-color="#ff00fe"/><stop offset="0.87" stop-color="#ff00d2"/><stop offset="1" stop-color="#f0a"/></linearGradient>
<linearGradient id="s136" x1="1107.11" y1="0" x2="1491.01" y2="0" gradientUnits="userSpaceOnUse"><stop offset="0" stop-color="#0037ff"/><stop offset="0.22" stop-color="#011dff"/><stop offset="0.48" stop-color="#7200ff"/><stop offset="0.77" stop-color="#ff00fe"/><stop offset="0.88" stop-color="#ff00d1"/><stop offset="1" stop-color="#ff00ae"/></linearGradient>
<linearGradient id="s137" x1="1108.31" y1="0" x2="1489.06" y2="0" gradientUnits="userSpaceOnUse"><stop offset="0" stop-color="#0036ff"/><stop offset="0.22" stop-color="#011dff"/><stop offset="0.48" stop-color="#6f00ff"/><stop offset="0.78" stop-color="#ff00fd"/><stop offset="0.89" stop-color="#ff00d1"/><stop offset="1" stop-color="#ff00b1"/></linearGradient>
<linearGradient id="s138" x1="1109.51" y1="0" x2="1487.12" y2="0" gradientUnits="userSpaceOnUse"><stop offset="0" stop-color="#0035ff"/><stop offset="0.23" stop-color="#021bff"/><stop offset="0.47" stop-color="#6c00ff"/><stop offset="0.79" stop-color="#ff00fd"/><stop offset="0.9" stop-color="#ff00d0"/><stop offset="1" stop-color="#ff00b4"/></linearGradient>
<linearGradient id="s139" x1="1110.71" y1="0" x2="1485.17" y2="0" gradientUnits="userSpaceOnUse"><stop offset="0" stop-color="#03f"/><stop offset="0.22" stop-color="#021aff"/><stop offset="0.47" stop-color="#6800ff"/><stop offset="0.8" stop-color="#ff00fe"/><stop offset="0.91" stop-color="#ff00d1"/><stop offset="1" stop-color="#ff00b7"/></linearGradient>
<linearGradient id="s140" x1="1111.93" y1="0" x2="1483.23" y2="0" gradientUnits="userSpaceOnUse"><stop offset="0" stop-color="#0032ff"/><stop offset="0.22" stop-color="#021aff"/><stop offset="0.46" stop-color="#6500ff"/><stop offset="0.81" stop-color="#ff00fe"/><stop offset="0.92" stop-color="#ff00d1"/><stop offset="1" stop-color="#ff00ba"/></linearGradient>
<linearGradient id="s141" x1="1113.16" y1="0" x2="1481.28" y2="0" gradientUnits="userSpaceOnUse"><stop offset="0" stop-color="#0031ff"/><stop offset="0.22" stop-color="#0219ff"/><stop offset="0.46" stop-color="#6200ff"/><stop offset="0.82" stop-color="#ff00fe"/><stop offset="0.93" stop-color="#ff00d2"/><stop offset="1" stop-color="#ff00bd"/></linearGradient>
<linearGradient id="s142" x1="1114.39" y1="0" x2="1479.34" y2="0" gradientUnits="userSpaceOnUse"><stop offset="0" stop-color="#002fff"/><stop offset="0.22" stop-color="#0218ff"/><stop offset="0.45" stop-color="#5f00ff"/><stop offset="0.82" stop-color="#fc00ff"/><stop offset="0.84" stop-color="#ff00fa"/><stop offset="0.96" stop-color="#ff00cd"/><stop offset="1" stop-color="#ff00c1"/></linearGradient>
<linearGradient id="s143" x1="1115.61" y1="0" x2="1477.39" y2="0" gradientUnits="userSpaceOnUse"><stop offset="0" stop-color="#002eff"/><stop offset="0.22" stop-color="#0117ff"/><stop offset="0.45" stop-color="#5a00ff"/><stop offset="0.82" stop-color="#f700ff"/><stop offset="0.84" stop-color="#ff00fd"/><stop offset="0.96" stop-color="#ff00d1"/><stop offset="1" stop-color="#ff00c5"/></linearGradient>
<linearGradient id="s144" x1="1116.84" y1="0" x2="1475.44" y2="0" gradientUnits="userSpaceOnUse"><stop offset="0" stop-color="#002dff"/><stop offset="0.22" stop-color="#0116ff"/><stop offset="0.44" stop-color="#5700ff"/><stop offset="0.82" stop-color="#f400ff"/><stop offset="0.85" stop-color="#ff00fd"/><stop offset="0.97" stop-color="#ff00d0"/><stop offset="1" stop-color="#ff00c8"/></linearGradient>
<linearGradient id="s145" x1="1118.06" y1="0" x2="1473.5" y2="0" gradientUnits="userSpaceOnUse"><stop offset="0" stop-color="#002bff"/><stop offset="0.22" stop-color="#0115ff"/><stop offset="0.44" stop-color="#5400ff"/><stop offset="0.82" stop-color="#f100ff"/><stop offset="0.86" stop-color="#ff00fd"/><stop offset="0.98" stop-color="#ff00d0"/><stop offset="1" stop-color="#ff00cb"/></linearGradient>
<linearGradient id="s146" x1="1119.3" y1="0" x2="1471.55" y2="0" gradientUnits="userSpaceOnUse"><stop offset="0" stop-color="#002aff"/><stop offset="0.22" stop-color="#0115ff"/><stop offset="0.43" stop-color="#5100ff"/><stop offset="0.82" stop-color="#e0f"/><stop offset="0.87" stop-color="#ff00fe"/><stop offset="0.99" stop-color="#ff00d1"/><stop offset="1" stop-color="#ff00cf"/></linearGradient>
<linearGradient id="s147" x1="1120.56" y1="0" x2="1469.61" y2="0" gradientUnits="userSpaceOnUse"><stop offset="0" stop-color="#0029ff"/><stop offset="0.22" stop-color="#0213ff"/><stop offset="0.43" stop-color="#4f00ff"/><stop offset="0.83" stop-color="#eb00ff"/><stop offset="0.88" stop-color="#ff00fd"/><stop offset="1" stop-color="#ff00d2"/></linearGradient>
<linearGradient id="s148" x1="1121.82" y1="0" x2="1467.66" y2="0" gradientUnits="userSpaceOnUse"><stop offset="0" stop-color="#0028ff"/><stop offset="0.22" stop-color="#0213ff"/><stop offset="0.43" stop-color="#4c00ff"/><stop offset="0.83" stop-color="#e800ff"/><stop offset="0.89" stop-color="#ff00fd"/><stop offset="1" stop-color="#ff00d6"/></linearGradient>
<linearGradient id="s149" x1="1123.08" y1="0" x2="1465.72" y2="0" gradientUnits="userSpaceOnUse"><stop offset="0" stop-color="#0027ff"/><stop offset="0.22" stop-color="#0212ff"/><stop offset="0.42" stop-color="#4900ff"/><stop offset="0.83" stop-color="#e500ff"/><stop offset="0.9" stop-color="#ff00fe"/><stop offset="1" stop-color="#ff00da"/></linearGradient>
<linearGradient id="s150" x1="1124.34" y1="0" x2="1463.77" y2="0" gradientUnits="userSpaceOnUse"><stop offset="0" stop-color="#0025ff"/><stop offset="0.22" stop-color="#0211ff"/><stop offset="0.42" stop-color="#4600ff"/><stop offset="0.83" stop-color="#e300ff"/><stop offset="0.91" stop-color="#ff00fe"/><stop offset="1" stop-color="#ff00de"/></linearGradient>
<linearGradient id="s151" x1="1125.6" y1="0" x2="1461.83" y2="0" gradientUnits="userSpaceOnUse"><stop offset="0" stop-color="#0024ff"/><stop offset="0.22" stop-color="#0210ff"/><stop offset="0.41" stop-color="#4300ff"/><stop offset="0.83" stop-color="#df00ff"/><stop offset="0.92" stop-color="#ff00fd"/><stop offset="1" stop-color="#ff00e1"/></linearGradient>
<linearGradient id="s152" x1="1126.86" y1="0" x2="1459.88" y2="0" gradientUnits="userSpaceOnUse"><stop offset="0" stop-color="#0023ff"/><stop offset="0.22" stop-color="#0210ff"/><stop offset="0.4" stop-color="#4000ff"/><stop offset="0.83" stop-color="#dc00ff"/><stop offset="0.93" stop-color="#ff00fd"/><stop offset="1" stop-color="#ff00e5"/></linearGradient>
<linearGradient id="s153" x1="1128.15" y1="0" x2="1457.94" y2="0" gradientUnits="userSpaceOnUse"><stop offset="0" stop-color="#02f"/><stop offset="0.22" stop-color="#020fff"/><stop offset="0.4" stop-color="#3e00ff"/><stop offset="0.84" stop-color="#d900ff"/><stop offset="0.94" stop-color="#ff00fe"/><stop offset="1" stop-color="#ff00ea"/></linearGradient>
<linearGradient id="s154" x1="1129.45" y1="0" x2="1455.99" y2="0" gradientUnits="userSpaceOnUse"><stop offset="0" stop-color="#0021ff"/><stop offset="0.21" stop-color="#020eff"/><stop offset="0.39" stop-color="#3b00ff"/><stop offset="0.84" stop-color="#d800ff"/><stop offset="0.95" stop-color="#ff00fe"/><stop offset="1" stop-color="#f0e"/></linearGradient>
<linearGradient id="s155" x1="1130.75" y1="0" x2="1454.04" y2="0" gradientUnits="userSpaceOnUse"><stop offset="0" stop-color="#0020ff"/><stop offset="0.21" stop-color="#020dff"/><stop offset="0.39" stop-color="#3900ff"/><stop offset="0.84" stop-color="#d500ff"/><stop offset="0.97" stop-color="#ff00fd"/><stop offset="1" stop-color="#ff00f1"/></linearGradient>
<linearGradient id="s156" x1="1132.05" y1="0" x2="1452.1" y2="0" gradientUnits="userSpaceOnUse"><stop offset="0" stop-color="#001fff"/><stop offset="0.21" stop-color="#010dff"/><stop offset="0.38" stop-color="#3600ff"/><stop offset="0.85" stop-color="#d200ff"/><stop offset="0.98" stop-color="#ff00fd"/><stop offset="1" stop-color="#ff00f5"/></linearGradient>
<linearGradient id="s157" x1="1133.35" y1="0" x2="1450.15" y2="0" gradientUnits="userSpaceOnUse"><stop offset="0" stop-color="#001eff"/><stop offset="0.21" stop-color="#010cff"/><stop offset="0.38" stop-color="#3400ff"/><stop offset="0.85" stop-color="#cf00ff"/><stop offset="0.99" stop-color="#ff00fe"/><stop offset="1" stop-color="#ff00fb"/></linearGradient>
<linearGradient id="s158" x1="1134.65" y1="0" x2="1448.21" y2="0" gradientUnits="userSpaceOnUse"><stop offset="0" stop-color="#001dff"/><stop offset="0.21" stop-color="#010bff"/><stop offset="0.37" stop-color="#3200ff"/><stop offset="0.85" stop-color="#cd00ff"/><stop offset="1" stop-color="#f0f"/></linearGradient>
<linearGradient id="s159" x1="1135.97" y1="0" x2="1446.26" y2="0" gradientUnits="userSpaceOnUse"><stop offset="0" stop-color="#001cff"/><stop offset="0.21" stop-color="#010bff"/><stop offset="0.36" stop-color="#2f00ff"/><stop offset="0.86" stop-color="#cb00ff"/><stop offset="1" stop-color="#fb00ff"/></linearGradient>
<linearGradient id="s160" x1="1137.32" y1="0" x2="1444.32" y2="0" gradientUnits="userSpaceOnUse"><stop offset="0" stop-color="#001bff"/><stop offset="0.21" stop-color="#010aff"/><stop offset="0.36" stop-color="#2d00ff"/><stop offset="0.86" stop-color="#c900ff"/><stop offset="1" stop-color="#f700ff"/></linearGradient>
<linearGradient id="s161" x1="1138.67" y1="0" x2="1442.37" y2="0" gradientUnits="userSpaceOnUse"><stop offset="0" stop-color="#001aff"/><stop offset="0.21" stop-color="#0109ff"/><stop offset="0.35" stop-color="#2a00ff"/><stop offset="0.86" stop-color="#c500ff"/><stop offset="1" stop-color="#f200ff"/></linearGradient>
<linearGradient id="s162" x1="1140.02" y1="0" x2="1440.43" y2="0" gradientUnits="userSpaceOnUse"><stop offset="0" stop-color="#0018ff"/><stop offset="0.21" stop-color="#0108ff"/><stop offset="0.34" stop-color="#2800ff"/><stop offset="0.86" stop-color="#c300ff"/><stop offset="1" stop-color="#e0f"/></linearGradient>
<linearGradient id="s163" x1="1141.37" y1="0" x2="1438.48" y2="0" gradientUnits="userSpaceOnUse"><stop offset="0" stop-color="#0017ff"/><stop offset="0.21" stop-color="#0108ff"/><stop offset="0.34" stop-color="#2700ff"/><stop offset="0.87" stop-color="#c200ff"/><stop offset="1" stop-color="#eb00ff"/></linearGradient>
<linearGradient id="s164" x1="1142.72" y1="0" x2="1436.54" y2="0" gradientUnits="userSpaceOnUse"><stop offset="0" stop-color="#0016ff"/><stop offset="0.2" stop-color="#0107ff"/><stop offset="0.33" stop-color="#2400ff"/><stop offset="0.87" stop-color="#c000ff"/><stop offset="1" stop-color="#e600ff"/></linearGradient>
<linearGradient id="s165" x1="1144.08" y1="0" x2="1434.59" y2="0" gradientUnits="userSpaceOnUse"><stop offset="0" stop-color="#0015ff"/><stop offset="0.2" stop-color="#0207ff"/><stop offset="0.33" stop-color="#20f"/><stop offset="0.88" stop-color="#be00ff"/><stop offset="1" stop-color="#e200ff"/></linearGradient>
<linearGradient id="s166" x1="1145.49" y1="0" x2="1432.64" y2="0" gradientUnits="userSpaceOnUse"><stop offset="0" stop-color="#0015ff"/><stop offset="0.2" stop-color="#0206ff"/><stop offset="0.32" stop-color="#2000ff"/><stop offset="0.88" stop-color="#bc00ff"/><stop offset="1" stop-color="#df00ff"/></linearGradient>
<linearGradient id="s167" x1="1146.89" y1="0" x2="1430.7" y2="0" gradientUnits="userSpaceOnUse"><stop offset="0" stop-color="#0014ff"/><stop offset="0.2" stop-color="#0205ff"/><stop offset="0.32" stop-color="#1f00ff"/><stop offset="0.89" stop-color="#ba00ff"/><stop offset="1" stop-color="#da00ff"/></linearGradient>
<linearGradient id="s168" x1="1148.29" y1="0" x2="1428.75" y2="0" gradientUnits="userSpaceOnUse"><stop offset="0" stop-color="#0013ff"/><stop offset="0.2" stop-color="#0205ff"/><stop offset="0.31" stop-color="#1d00ff"/><stop offset="0.89" stop-color="#b800ff"/><stop offset="1" stop-color="#d700ff"/></linearGradient>
<linearGradient id="s169" x1="1149.69" y1="0" x2="1426.81" y2="0" gradientUnits="userSpaceOnUse"><stop offset="0" stop-color="#0012ff"/><stop offset="0.2" stop-color="#0204ff"/><stop offset="0.31" stop-color="#1e00ff"/><stop offset="0.91" stop-color="#b900ff"/><stop offset="1" stop-color="#d300ff"/></linearGradient>
<linearGradient id="s170" x1="1151.09" y1="0" x2="1424.86" y2="0" gradientUnits="userSpaceOnUse"><stop offset="0" stop-color="#01f"/><stop offset="0.2" stop-color="#0203ff"/><stop offset="0.32" stop-color="#1f00ff"/><stop offset="0.92" stop-color="#ba00ff"/><stop offset="1" stop-color="#cf00ff"/></linearGradient>
<linearGradient id="s171" x1="1152.53" y1="0" x2="1422.92" y2="0" gradientUnits="userSpaceOnUse"><stop offset="0" stop-color="#0010ff"/><stop offset="0.2" stop-color="#0203ff"/><stop offset="0.35" stop-color="#2700ff"/><stop offset="0.97" stop-color="#c300ff"/><stop offset="1" stop-color="#c0f"/></linearGradient>
<linearGradient id="s172" x1="1153.99" y1="0" x2="1420.97" y2="0" gradientUnits="userSpaceOnUse"><stop offset="0" stop-color="#000fff"/><stop offset="0.19" stop-color="#0202ff"/><stop offset="0.83" stop-color="#9d00ff"/><stop offset="1" stop-color="#c700ff"/></linearGradient>
<linearGradient id="s173" x1="1155.44" y1="0" x2="1419.03" y2="0" gradientUnits="userSpaceOnUse"><stop offset="0" stop-color="#000eff"/><stop offset="0.19" stop-color="#0201ff"/><stop offset="0.84" stop-color="#9d00ff"/><stop offset="1" stop-color="#c400ff"/></linearGradient>
<linearGradient id="s174" x1="1156.9" y1="0" x2="1417.08" y2="0" gradientUnits="userSpaceOnUse"><stop offset="0" stop-color="#000dff"/><stop offset="0.19" stop-color="#0101ff"/><stop offset="0.85" stop-color="#9c00ff"/><stop offset="1" stop-color="#c100ff"/></linearGradient>
<linearGradient id="s175" x1="1158.35" y1="0" x2="1415.13" y2="0" gradientUnits="userSpaceOnUse"><stop offset="0" stop-color="#000cff"/><stop offset="0.19" stop-color="#0101ff"/><stop offset="0.86" stop-color="#9c00ff"/><stop offset="1" stop-color="#bd00ff"/></linearGradient>
<linearGradient id="s176" x1="1159.83" y1="0" x2="1413.19" y2="0" gradientUnits="userSpaceOnUse"><stop offset="0" stop-color="#000bff"/><stop offset="0.19" stop-color="#0200ff"/><stop offset="0.87" stop-color="#9c00ff"/><stop offset="1" stop-color="#ba00ff"/></linearGradient>
<linearGradient id="s177" x1="1161.34" y1="0" x2="1411.24" y2="0" gradientUnits="userSpaceOnUse"><stop offset="0" stop-color="#000aff"/><stop offset="0.18" stop-color="#0200ff"/><stop offset="0.88" stop-color="#9c00ff"/><stop offset="1" stop-color="#b600ff"/></linearGradient>
<linearGradient id="s178" x1="1162.85" y1="0" x2="1409.3" y2="0" gradientUnits="userSpaceOnUse"><stop offset="0" stop-color="#0009ff"/><stop offset="0.18" stop-color="#0200ff"/><stop offset="0.9" stop-color="#9c00ff"/><stop offset="1" stop-color="#b300ff"/></linearGradient>
<linearGradient id="s179" x1="1164.35" y1="0" x2="1407.35" y2="0" gradientUnits="userSpaceOnUse"><stop offset="0" stop-color="#0009ff"/><stop offset="0.18" stop-color="#0200ff"/><stop offset="0.91" stop-color="#9c00ff"/><stop offset="1" stop-color="#b100ff"/></linearGradient>
<linearGradient id="s180" x1="1165.86" y1="0" x2="1405.41" y2="0" gradientUnits="userSpaceOnUse"><stop offset="0" stop-color="#0008ff"/><stop offset="0.18" stop-color="#0200ff"/><stop offset="0.92" stop-color="#9c00ff"/><stop offset="1" stop-color="#ad00ff"/></linearGradient>
<linearGradient id="s181" x1="1167.4" y1="0" x2="1403.46" y2="0" gradientUnits="userSpaceOnUse"><stop offset="0" stop-color="#0007ff"/><stop offset="0.17" stop-color="#0100ff"/><stop offset="0.93" stop-color="#9c00ff"/><stop offset="1" stop-color="#a0f"/></linearGradient>
<linearGradient id="s182" x1="1168.96" y1="0" x2="1401.52" y2="0" gradientUnits="userSpaceOnUse"><stop offset="0" stop-color="#0006ff"/><stop offset="0.17" stop-color="#0100ff"/><stop offset="0.95" stop-color="#9c00ff"/><stop offset="1" stop-color="#a700ff"/></linearGradient>
<linearGradient id="s183" x1="1170.52" y1="0" x2="1399.57" y2="0" gradientUnits="userSpaceOnUse"><stop offset="0" stop-color="#0005ff"/><stop offset="0.16" stop-color="#00f"/><stop offset="0.89" stop-color="#8e00ff"/><stop offset="1" stop-color="#a400ff"/></linearGradient>
<linearGradient id="s184" x1="1172.09" y1="0" x2="1397.63" y2="0" gradientUnits="userSpaceOnUse"><stop offset="0" stop-color="#0004ff"/><stop offset="0.16" stop-color="#00f"/><stop offset="0.93" stop-color="#9200ff"/><stop offset="1" stop-color="#a100ff"/></linearGradient>
<linearGradient id="s185" x1="1173.65" y1="0" x2="1395.68" y2="0" gradientUnits="userSpaceOnUse"><stop offset="0" stop-color="#0003ff"/><stop offset="0.16" stop-color="#0100ff"/><stop offset="0.99" stop-color="#9c00ff"/><stop offset="1" stop-color="#9e00ff"/></linearGradient>
<linearGradient id="s186" x1="1175.27" y1="0" x2="1393.73" y2="0" gradientUnits="userSpaceOnUse"><stop offset="0" stop-color="#0003ff"/><stop offset="0.16" stop-color="#0200ff"/><stop offset="1" stop-color="#9b00ff"/></linearGradient>
<linearGradient id="s187" x1="1176.89" y1="0" x2="1391.79" y2="0" gradientUnits="userSpaceOnUse"><stop offset="0" stop-color="#0002ff"/><stop offset="0.16" stop-color="#0200ff"/><stop offset="1" stop-color="#9700ff"/></linearGradient>
<linearGradient id="s188" x1="1178.51" y1="0" x2="1389.84" y2="0" gradientUnits="userSpaceOnUse"><stop offset="0" stop-color="#0001ff"/><stop offset="0.16" stop-color="#0200ff"/><stop offset="1" stop-color="#9500ff"/></linearGradient>
<linearGradient id="s189" x1="1180.13" y1="0" x2="1387.9" y2="0" gradientUnits="userSpaceOnUse"><stop offset="0" stop-color="#00f"/><stop offset="0.15" stop-color="#0200ff"/><stop offset="1" stop-color="#9200ff"/></linearGradient>
<linearGradient id="s190" x1="1181.8" y1="0" x2="1385.95" y2="0" gradientUnits="userSpaceOnUse"><stop offset="0" stop-color="#00f"/><stop offset="0.15" stop-color="#0200ff"/><stop offset="1" stop-color="#9000ff"/></linearGradient>
<linearGradient id="s191" x1="1183.48" y1="0" x2="1384.01" y2="0" gradientUnits="userSpaceOnUse"><stop offset="0" stop-color="#00f"/><stop offset="0.14" stop-color="#0200ff"/><stop offset="1" stop-color="#8c00ff"/></linearGradient>
<linearGradient id="s192" x1="1185.16" y1="0" x2="1382.06" y2="0" gradientUnits="userSpaceOnUse"><stop offset="0" stop-color="#00f"/><stop offset="0.14" stop-color="#0200ff"/><stop offset="1" stop-color="#8900ff"/></linearGradient>
<linearGradient id="s193" x1="1186.84" y1="0" x2="1380.12" y2="0" gradientUnits="userSpaceOnUse"><stop offset="0" stop-color="#00f"/><stop offset="0.13" stop-color="#0200ff"/><stop offset="1" stop-color="#8700ff"/></linearGradient>
<linearGradient id="s194" x1="1188.59" y1="0" x2="1378.17" y2="0" gradientUnits="userSpaceOnUse"><stop offset="0" stop-color="#00f"/><stop offset="0.13" stop-color="#0200ff"/><stop offset="1" stop-color="#8400ff"/></linearGradient>
<linearGradient id="s195" x1="1190.34" y1="0" x2="1376.23" y2="0" gradientUnits="userSpaceOnUse"><stop offset="0" stop-color="#00f"/><stop offset="0.12" stop-color="#0200ff"/><stop offset="1" stop-color="#8100ff"/></linearGradient>
<linearGradient id="s196" x1="1192.09" y1="0" x2="1374.28" y2="0" gradientUnits="userSpaceOnUse"><stop offset="0" stop-color="#00f"/><stop offset="0.12" stop-color="#0200ff"/><stop offset="1" stop-color="#7f00ff"/></linearGradient>
<linearGradient id="s197" x1="1193.88" y1="0" x2="1372.33" y2="0" gradientUnits="userSpaceOnUse"><stop offset="0" stop-color="#00f"/><stop offset="0.12" stop-color="#0200ff"/><stop offset="1" stop-color="#7d00ff"/></linearGradient>
<linearGradient id="s198" x1="1195.71" y1="0" x2="1370.39" y2="0" gradientUnits="userSpaceOnUse"><stop offset="0" stop-color="#00f"/><stop offset="0.11" stop-color="#0200ff"/><stop offset="1" stop-color="#7a00ff"/></linearGradient>
<linearGradient id="s199" x1="1197.54" y1="0" x2="1368.44" y2="0" gradientUnits="userSpaceOnUse"><stop offset="0" stop-color="#00f"/><stop offset="0.11" stop-color="#0200ff"/><stop offset="0.99" stop-color="#70f"/></linearGradient>
<linearGradient id="s200" x1="1199.41" y1="0" x2="1366.5" y2="0" gradientUnits="userSpaceOnUse"><stop offset="0" stop-color="#00f"/><stop offset="0.1" stop-color="#0200ff"/><stop offset="1" stop-color="#7600ff"/></linearGradient>
<linearGradient id="s201" x1="1201.33" y1="0" x2="1364.55" y2="0" gradientUnits="userSpaceOnUse"><stop offset="0" stop-color="#00f"/><stop offset="0.09" stop-color="#0200ff"/><stop offset="1" stop-color="#7300ff"/></linearGradient>
<linearGradient id="s202" x1="1203.25" y1="0" x2="1362.61" y2="0" gradientUnits="userSpaceOnUse"><stop offset="0" stop-color="#00f"/><stop offset="0.09" stop-color="#0300ff"/><stop offset="1" stop-color="#7000ff"/></linearGradient>
<linearGradient id="s203" x1="1205.23" y1="0" x2="1360.66" y2="0" gradientUnits="userSpaceOnUse"><stop offset="0" stop-color="#00f"/><stop offset="0.08" stop-color="#0300ff"/><stop offset="1" stop-color="#6e00ff"/></linearGradient>
<linearGradient id="s204" x1="1207.23" y1="0" x2="1358.72" y2="0" gradientUnits="userSpaceOnUse"><stop offset="0" stop-color="#00f"/><stop offset="0.07" stop-color="#0300ff"/><stop offset="1" stop-color="#6c00ff"/></linearGradient>
<linearGradient id="s205" x1="1209.27" y1="0" x2="1356.77" y2="0" gradientUnits="userSpaceOnUse"><stop offset="0" stop-color="#00f"/><stop offset="0.07" stop-color="#0400ff"/><stop offset="1" stop-color="#6900ff"/></linearGradient>
<linearGradient id="s206" x1="1211.35" y1="0" x2="1354.82" y2="0" gradientUnits="userSpaceOnUse"><stop offset="0" stop-color="#00f"/><stop offset="0.16" stop-color="#0e00ff"/><stop offset="1" stop-color="#6700ff"/></linearGradient>
<linearGradient id="s207" x1="1213.44" y1="0" x2="1352.88" y2="0" gradientUnits="userSpaceOnUse"><stop offset="0" stop-color="#00f"/><stop offset="1" stop-color="#6500ff"/></linearGradient>
<linearGradient id="s208" x1="1215.58" y1="0" x2="1350.93" y2="0" gradientUnits="userSpaceOnUse"><stop offset="0" stop-color="#00f"/><stop offset="1" stop-color="#6300ff"/></linearGradient>
<linearGradient id="s209" x1="1217.73" y1="0" x2="1348.99" y2="0" gradientUnits="userSpaceOnUse"><stop offset="0" stop-color="#0100ff"/><stop offset="1" stop-color="#6000ff"/></linearGradient>
<linearGradient id="s210" x1="1219.92" y1="0" x2="1347.04" y2="0" gradientUnits="userSpaceOnUse"><stop offset="0" stop-color="#0300ff"/><stop offset="1" stop-color="#5e00ff"/></linearGradient>
<linearGradient id="s211" x1="1222.12" y1="0" x2="1345.1" y2="0" gradientUnits="userSpaceOnUse"><stop offset="0" stop-color="#0400ff"/><stop offset="0.99" stop-color="#5c00ff"/></linearGradient>
<linearGradient id="s212" x1="1224.36" y1="0" x2="1343.15" y2="0" gradientUnits="userSpaceOnUse"><stop offset="0" stop-color="#0500ff"/><stop offset="0.99" stop-color="#5a00ff"/></linearGradient>
<linearGradient id="s213" x1="1226.62" y1="0" x2="1341.21" y2="0" gradientUnits="userSpaceOnUse"><stop offset="0" stop-color="#0700ff"/><stop offset="0.99" stop-color="#5800ff"/></linearGradient>
<linearGradient id="s214" x1="1228.9" y1="0" x2="1339.26" y2="0" gradientUnits="userSpaceOnUse"><stop offset="0" stop-color="#0800ff"/><stop offset="1" stop-color="#5600ff"/></linearGradient>
<linearGradient id="s215" x1="1231.22" y1="0" x2="1337.32" y2="0" gradientUnits="userSpaceOnUse"><stop offset="0" stop-color="#0900ff"/><stop offset="1" stop-color="#5400ff"/></linearGradient>
<linearGradient id="s216" x1="1233.55" y1="0" x2="1335.37" y2="0" gradientUnits="userSpaceOnUse"><stop offset="0" stop-color="#0b00ff"/><stop offset="0.99" stop-color="#5100ff"/></linearGradient>
<linearGradient id="s217" x1="1235.92" y1="0" x2="1333.42" y2="0" gradientUnits="userSpaceOnUse"><stop offset="0" stop-color="#0c00ff"/><stop offset="0.99" stop-color="#4f00ff"/></linearGradient>
<linearGradient id="s218" x1="1238.3" y1="0" x2="1331.48" y2="0" gradientUnits="userSpaceOnUse"><stop offset="0" stop-color="#0d00ff"/><stop offset="1" stop-color="#4e00ff"/></linearGradient>
<linearGradient id="s219" x1="1240.7" y1="0" x2="1329.53" y2="0" gradientUnits="userSpaceOnUse"><stop offset="0" stop-color="#0f00ff"/><stop offset="0.99" stop-color="#4b00ff"/></linearGradient>
<linearGradient id="s220" x1="1243.11" y1="0" x2="1327.59" y2="0" gradientUnits="userSpaceOnUse"><stop offset="0" stop-color="#1000ff"/><stop offset="0.99" stop-color="#4a00ff"/></linearGradient>
<linearGradient id="s221" x1="1245.53" y1="0" x2="1325.64" y2="0" gradientUnits="userSpaceOnUse"><stop offset="0" stop-color="#10f"/><stop offset="1" stop-color="#4800ff"/></linearGradient>
<linearGradient id="s222" x1="1247.96" y1="0" x2="1323.7" y2="0" gradientUnits="userSpaceOnUse"><stop offset="0" stop-color="#1300ff"/><stop offset="0.99" stop-color="#4600ff"/></linearGradient>
<linearGradient id="s223" x1="1250.39" y1="0" x2="1321.75" y2="0" gradientUnits="userSpaceOnUse"><stop offset="0" stop-color="#1400ff"/><stop offset="0.99" stop-color="#40f"/></linearGradient>
<linearGradient id="s224" x1="1252.83" y1="0" x2="1319.81" y2="0" gradientUnits="userSpaceOnUse"><stop offset="0" stop-color="#1500ff"/><stop offset="0.99" stop-color="#4200ff"/></linearGradient>
<linearGradient id="s225" x1="1255.26" y1="0" x2="1317.86" y2="0" gradientUnits="userSpaceOnUse"><stop offset="0" stop-color="#1700ff"/><stop offset="0.99" stop-color="#4000ff"/></linearGradient>
<linearGradient id="s226" x1="1257.7" y1="0" x2="1315.92" y2="0" gradientUnits="userSpaceOnUse"><stop offset="0" stop-color="#1800ff"/><stop offset="1" stop-color="#3e00ff"/></linearGradient>
<linearGradient id="s227" x1="1260.13" y1="0" x2="1313.97" y2="0" gradientUnits="userSpaceOnUse"><stop offset="0" stop-color="#1900ff"/><stop offset="0.98" stop-color="#3c00ff"/></linearGradient>
<linearGradient id="s228" x1="1262.55" y1="0" x2="1312.02" y2="0" gradientUnits="userSpaceOnUse"><stop offset="0" stop-color="#1a00ff"/><stop offset="0.99" stop-color="#3b00ff"/></linearGradient>
<linearGradient id="s229" x1="1264.96" y1="0" x2="1310.08" y2="0" gradientUnits="userSpaceOnUse"><stop offset="0" stop-color="#1c00ff"/><stop offset="1" stop-color="#3900ff"/></linearGradient>
<linearGradient id="s230" x1="1267.35" y1="0" x2="1308.13" y2="0" gradientUnits="userSpaceOnUse"><stop offset="0" stop-color="#1d00ff"/><stop offset="0.98" stop-color="#3700ff"/></linearGradient>
<linearGradient id="s231" x1="1269.74" y1="0" x2="1306.19" y2="0" gradientUnits="userSpaceOnUse"><stop offset="0" stop-color="#1e00ff"/><stop offset="0.99" stop-color="#3500ff"/></linearGradient>
<linearGradient id="s232" x1="1272.12" y1="0" x2="1304.24" y2="0" gradientUnits="userSpaceOnUse"><stop offset="0" stop-color="#1f00ff"/><stop offset="1" stop-color="#3400ff"/></linearGradient>
<linearGradient id="s233" x1="1274.52" y1="0" x2="1302.3" y2="0" gradientUnits="userSpaceOnUse"><stop offset="0" stop-color="#2000ff"/><stop offset="0.97" stop-color="#3200ff"/></linearGradient>
<linearGradient id="s234" x1="1276.99" y1="0" x2="1300.35" y2="0" gradientUnits="userSpaceOnUse"><stop offset="0" stop-color="#20f"/><stop offset="0.98" stop-color="#3000ff"/></linearGradient>
<linearGradient id="s235" x1="1279.59" y1="0" x2="1298.41" y2="0" gradientUnits="userSpaceOnUse"><stop offset="0" stop-color="#2300ff"/><stop offset="0.96" stop-color="#2e00ff"/></linearGradient>
<linearGradient id="s236" x1="1282.6" y1="0" x2="1296.46" y2="0" gradientUnits="userSpaceOnUse"><stop offset="0" stop-color="#2400ff"/><stop offset="0.94" stop-color="#2d00ff"/></linearGradient>
<linearGradient id="q0" x1="637" y1="0" x2="979" y2="0" gradientUnits="userSpaceOnUse"><stop offset="0" stop-color="#94ffd8"/><stop offset="0.68" stop-color="#f3ffd5"/><stop offset="0.76" stop-color="#fffed3"/><stop offset="1" stop-color="#ffddb7"/></linearGradient>
<linearGradient id="q1" x1="637" y1="0" x2="979" y2="0" gradientUnits="userSpaceOnUse"><stop offset="0" stop-color="#95ffd9"/><stop offset="0.68" stop-color="#f4ffd6"/><stop offset="0.75" stop-color="#fffdd4"/><stop offset="1" stop-color="#ffdbb7"/></linearGradient>
<linearGradient id="q2" x1="637" y1="0" x2="979" y2="0" gradientUnits="userSpaceOnUse"><stop offset="0" stop-color="#96ffdb"/><stop offset="0.67" stop-color="#f5ffd8"/><stop offset="0.75" stop-color="#fffdd6"/><stop offset="1" stop-color="#ffdab7"/></linearGradient>
<linearGradient id="q3" x1="637" y1="0" x2="979" y2="0" gradientUnits="userSpaceOnUse"><stop offset="0" stop-color="#97ffdc"/><stop offset="0.67" stop-color="#f6ffd9"/><stop offset="0.74" stop-color="#fffdd7"/><stop offset="1" stop-color="#ffd9b7"/></linearGradient>
<linearGradient id="q4" x1="637" y1="0" x2="979" y2="0" gradientUnits="userSpaceOnUse"><stop offset="0" stop-color="#98ffde"/><stop offset="0.67" stop-color="#f8ffdb"/><stop offset="0.73" stop-color="#fffcd9"/><stop offset="1" stop-color="#ffd7b8"/></linearGradient>
<linearGradient id="q5" x1="637" y1="0" x2="979" y2="0" gradientUnits="userSpaceOnUse"><stop offset="0" stop-color="#99ffdf"/><stop offset="0.66" stop-color="#f8ffdd"/><stop offset="0.72" stop-color="#fffcda"/><stop offset="1" stop-color="#ffd6b8"/></linearGradient>
<linearGradient id="q6" x1="637" y1="0" x2="979" y2="0" gradientUnits="userSpaceOnUse"><stop offset="0" stop-color="#9bffe1"/><stop offset="0.66" stop-color="#faffde"/><stop offset="0.71" stop-color="#fffcdc"/><stop offset="1" stop-color="#ffd4b8"/></linearGradient>
<linearGradient id="q7" x1="637" y1="0" x2="979" y2="0" gradientUnits="userSpaceOnUse"><stop offset="0" stop-color="#9cffe2"/><stop offset="0.66" stop-color="#fbffe0"/><stop offset="0.71" stop-color="#fffadc"/><stop offset="1" stop-color="#ffd3b8"/></linearGradient>
<linearGradient id="q8" x1="637" y1="0" x2="979" y2="0" gradientUnits="userSpaceOnUse"><stop offset="0" stop-color="#9dffe4"/><stop offset="0.65" stop-color="#fcffe2"/><stop offset="0.71" stop-color="#fff9dc"/><stop offset="1" stop-color="#ffd2b9"/></linearGradient>
<linearGradient id="q9" x1="637" y1="0" x2="979" y2="0" gradientUnits="userSpaceOnUse"><stop offset="0" stop-color="#9effe6"/><stop offset="0.65" stop-color="#fdffe4"/><stop offset="1" stop-color="#ffd0b9"/></linearGradient>
<linearGradient id="q10" x1="637" y1="0" x2="979" y2="0" gradientUnits="userSpaceOnUse"><stop offset="0" stop-color="#9fffe7"/><stop offset="0.66" stop-color="#fffde4"/><stop offset="1" stop-color="#ffcfb9"/></linearGradient>
<linearGradient id="q11" x1="637" y1="0" x2="979" y2="0" gradientUnits="userSpaceOnUse"><stop offset="0" stop-color="#a0ffe9"/><stop offset="0.65" stop-color="#fffde5"/><stop offset="1" stop-color="#ffceb9"/></linearGradient>
<linearGradient id="q12" x1="637" y1="0" x2="979" y2="0" gradientUnits="userSpaceOnUse"><stop offset="0" stop-color="#a2ffea"/><stop offset="0.63" stop-color="#fffee8"/><stop offset="0.98" stop-color="#ffcebc"/><stop offset="1" stop-color="#ffccba"/></linearGradient>
<linearGradient id="q13" x1="637" y1="0" x2="979" y2="0" gradientUnits="userSpaceOnUse"><stop offset="0" stop-color="#a3ffec"/><stop offset="0.62" stop-color="#fffeea"/><stop offset="0.97" stop-color="#ffcebd"/><stop offset="1" stop-color="#ffcbba"/></linearGradient>
<linearGradient id="q14" x1="637" y1="0" x2="979" y2="0" gradientUnits="userSpaceOnUse"><stop offset="0" stop-color="#a4ffee"/><stop offset="0.61" stop-color="#fffeeb"/><stop offset="0.96" stop-color="#ffcebe"/><stop offset="1" stop-color="#ffcaba"/></linearGradient>
<linearGradient id="q15" x1="637" y1="0" x2="979" y2="0" gradientUnits="userSpaceOnUse"><stop offset="0" stop-color="#a5ffef"/><stop offset="0.61" stop-color="#fffded"/><stop offset="0.96" stop-color="#ffcdbf"/><stop offset="1" stop-color="#ffc8ba"/></linearGradient>
<linearGradient id="q16" x1="637" y1="0" x2="979" y2="0" gradientUnits="userSpaceOnUse"><stop offset="0" stop-color="#a7fff1"/><stop offset="0.6" stop-color="#fffdee"/><stop offset="0.95" stop-color="#ffcdc0"/><stop offset="1" stop-color="#ffc7bb"/></linearGradient>
<linearGradient id="q17" x1="637" y1="0" x2="979" y2="0" gradientUnits="userSpaceOnUse"><stop offset="0" stop-color="#a8fff3"/><stop offset="0.58" stop-color="#fffef1"/><stop offset="0.93" stop-color="#ffcec3"/><stop offset="1" stop-color="#ffc6bb"/></linearGradient>
<linearGradient id="q18" x1="637" y1="0" x2="979" y2="0" gradientUnits="userSpaceOnUse"><stop offset="0" stop-color="#a9fff4"/><stop offset="0.57" stop-color="#fffef3"/><stop offset="0.92" stop-color="#ffcdc4"/><stop offset="1" stop-color="#ffc4bb"/></linearGradient>
<linearGradient id="q19" x1="637" y1="0" x2="979" y2="0" gradientUnits="userSpaceOnUse"><stop offset="0" stop-color="#aafff6"/><stop offset="0.56" stop-color="#fffef4"/><stop offset="0.91" stop-color="#ffcdc5"/><stop offset="1" stop-color="#ffc3bb"/></linearGradient>
<linearGradient id="q20" x1="637" y1="0" x2="979" y2="0" gradientUnits="userSpaceOnUse"><stop offset="0" stop-color="#acfff8"/><stop offset="0.55" stop-color="#fffdf6"/><stop offset="0.9" stop-color="#ffcdc6"/><stop offset="1" stop-color="#ffc2bc"/></linearGradient>
<linearGradient id="q21" x1="637" y1="0" x2="979" y2="0" gradientUnits="userSpaceOnUse"><stop offset="0" stop-color="#adfff9"/><stop offset="0.54" stop-color="#fffdf7"/><stop offset="0.89" stop-color="#ffccc8"/><stop offset="1" stop-color="#ffc0bc"/></linearGradient>
<linearGradient id="q22" x1="637" y1="0" x2="979" y2="0" gradientUnits="userSpaceOnUse"><stop offset="0" stop-color="#aefffb"/><stop offset="0.53" stop-color="#fffefa"/><stop offset="0.87" stop-color="#ffcecb"/><stop offset="1" stop-color="#ffbfbc"/></linearGradient>
<linearGradient id="q23" x1="637" y1="0" x2="979" y2="0" gradientUnits="userSpaceOnUse"><stop offset="0" stop-color="#b0fffd"/><stop offset="0.52" stop-color="#fffefc"/><stop offset="0.86" stop-color="#ffcecc"/><stop offset="1" stop-color="#ffbebc"/></linearGradient>
<linearGradient id="q24" x1="637" y1="0" x2="979" y2="0" gradientUnits="userSpaceOnUse"><stop offset="0" stop-color="#b1ffff"/><stop offset="0.51" stop-color="#fffefd"/><stop offset="0.85" stop-color="#ffcdcd"/><stop offset="1" stop-color="#ffbdbd"/></linearGradient>
<linearGradient id="q25" x1="637" y1="0" x2="979" y2="0" gradientUnits="userSpaceOnUse"><stop offset="0" stop-color="#b1fdff"/><stop offset="0.51" stop-color="#fffcfe"/><stop offset="0.85" stop-color="#ffccce"/><stop offset="1" stop-color="#ffbbbd"/></linearGradient>
<linearGradient id="q26" x1="637" y1="0" x2="979" y2="0" gradientUnits="userSpaceOnUse"><stop offset="0" stop-color="#b1fcff"/><stop offset="0.51" stop-color="#fffafe"/><stop offset="0.85" stop-color="#ffcbce"/><stop offset="1" stop-color="#ffbabd"/></linearGradient>
<linearGradient id="q27" x1="637" y1="0" x2="979" y2="0" gradientUnits="userSpaceOnUse"><stop offset="0" stop-color="#b1faff"/><stop offset="0.51" stop-color="#fff8fe"/><stop offset="0.85" stop-color="#ffc9ce"/><stop offset="1" stop-color="#ffb9bd"/></linearGradient>
<linearGradient id="q28" x1="637" y1="0" x2="979" y2="0" gradientUnits="userSpaceOnUse"><stop offset="0" stop-color="#b1f8ff"/><stop offset="0.51" stop-color="#fff7fe"/><stop offset="0.85" stop-color="#ffc8ce"/><stop offset="1" stop-color="#ffb8be"/></linearGradient>
<linearGradient id="q29" x1="637" y1="0" x2="979" y2="0" gradientUnits="userSpaceOnUse"><stop offset="0" stop-color="#b2f6ff"/><stop offset="0.51" stop-color="#fff5fe"/><stop offset="0.86" stop-color="#ffc5cd"/><stop offset="1" stop-color="#ffb6be"/></linearGradient>
<linearGradient id="q30" x1="637" y1="0" x2="979" y2="0" gradientUnits="userSpaceOnUse"><stop offset="0" stop-color="#b2f5ff"/><stop offset="0.51" stop-color="#fff3fe"/><stop offset="0.86" stop-color="#ffc4ce"/><stop offset="1" stop-color="#ffb5be"/></linearGradient>
<linearGradient id="q31" x1="637" y1="0" x2="979" y2="0" gradientUnits="userSpaceOnUse"><stop offset="0" stop-color="#b2f3ff"/><stop offset="0.52" stop-color="#fff0fd"/><stop offset="0.87" stop-color="#ffc2cd"/><stop offset="1" stop-color="#ffb4be"/></linearGradient>
<linearGradient id="q32" x1="637" y1="0" x2="979" y2="0" gradientUnits="userSpaceOnUse"><stop offset="0" stop-color="#b2f1ff"/><stop offset="0.52" stop-color="#ffeefd"/><stop offset="0.87" stop-color="#ffc0cd"/><stop offset="1" stop-color="#ffb3bf"/></linearGradient>
<linearGradient id="q33" x1="637" y1="0" x2="979" y2="0" gradientUnits="userSpaceOnUse"><stop offset="0" stop-color="#b2f0ff"/><stop offset="0.52" stop-color="#ffedfd"/><stop offset="0.87" stop-color="#ffbfcd"/><stop offset="1" stop-color="#ffb1bf"/></linearGradient>
<linearGradient id="q34" x1="637" y1="0" x2="979" y2="0" gradientUnits="userSpaceOnUse"><stop offset="0" stop-color="#b2eeff"/><stop offset="0.52" stop-color="#ffebfd"/><stop offset="0.87" stop-color="#ffbecd"/><stop offset="1" stop-color="#ffb0bf"/></linearGradient>
<linearGradient id="q35" x1="637" y1="0" x2="979" y2="0" gradientUnits="userSpaceOnUse"><stop offset="0" stop-color="#b2ecff"/><stop offset="0.52" stop-color="#ffe9fe"/><stop offset="0.87" stop-color="#ffbcce"/><stop offset="1" stop-color="#ffafbf"/></linearGradient>
<linearGradient id="q36" x1="637" y1="0" x2="979" y2="0" gradientUnits="userSpaceOnUse"><stop offset="0" stop-color="#b2eaff"/><stop offset="0.52" stop-color="#ffe8fe"/><stop offset="0.87" stop-color="#ffbbce"/><stop offset="1" stop-color="#ffaebf"/></linearGradient>
<linearGradient id="q37" x1="637" y1="0" x2="979" y2="0" gradientUnits="userSpaceOnUse"><stop offset="0" stop-color="#b2e9ff"/><stop offset="0.52" stop-color="#ffe6fe"/><stop offset="0.88" stop-color="#ffb9cd"/><stop offset="1" stop-color="#ffacc0"/></linearGradient>
<linearGradient id="q38" x1="637" y1="0" x2="979" y2="0" gradientUnits="userSpaceOnUse"><stop offset="0" stop-color="#b2e7ff"/><stop offset="0.52" stop-color="#ffe4fe"/><stop offset="0.88" stop-color="#ffb8cd"/><stop offset="1" stop-color="#ffabc0"/></linearGradient>
<linearGradient id="q39" x1="637" y1="0" x2="979" y2="0" gradientUnits="userSpaceOnUse"><stop offset="0" stop-color="#b2e6ff"/><stop offset="0.52" stop-color="#ffe3fe"/><stop offset="0.88" stop-color="#ffb6ce"/><stop offset="1" stop-color="#ffaac0"/></linearGradient>
<linearGradient id="q40" x1="637" y1="0" x2="979" y2="0" gradientUnits="userSpaceOnUse"><stop offset="0" stop-color="#b3e4ff"/><stop offset="0.52" stop-color="#ffe1fe"/><stop offset="0.88" stop-color="#ffb5ce"/><stop offset="1" stop-color="#ffa9c0"/></linearGradient>
<linearGradient id="q41" x1="637" y1="0" x2="979" y2="0" gradientUnits="userSpaceOnUse"><stop offset="0" stop-color="#b3e2ff"/><stop offset="0.53" stop-color="#ffdefd"/><stop offset="0.89" stop-color="#ffb3cd"/><stop offset="1" stop-color="#ffa8c1"/></linearGradient>
<linearGradient id="q42" x1="637" y1="0" x2="979" y2="0" gradientUnits="userSpaceOnUse"><stop offset="0" stop-color="#b3e1ff"/><stop offset="0.53" stop-color="#ffddfd"/><stop offset="0.89" stop-color="#ffb2cd"/><stop offset="1" stop-color="#ffa6c1"/></linearGradient>
<linearGradient id="q43" x1="637" y1="0" x2="979" y2="0" gradientUnits="userSpaceOnUse"><stop offset="0" stop-color="#b3dfff"/><stop offset="0.53" stop-color="#ffdbfd"/><stop offset="0.89" stop-color="#ffb0cd"/><stop offset="1" stop-color="#ffa5c1"/></linearGradient>
<linearGradient id="q44" x1="637" y1="0" x2="979" y2="0" gradientUnits="userSpaceOnUse"><stop offset="0" stop-color="#b3ddff"/><stop offset="0.53" stop-color="#ffdafd"/><stop offset="0.89" stop-color="#ffafce"/><stop offset="1" stop-color="#ffa4c1"/></linearGradient>
<linearGradient id="q45" x1="637" y1="0" x2="979" y2="0" gradientUnits="userSpaceOnUse"><stop offset="0" stop-color="#b3dcff"/><stop offset="0.53" stop-color="#ffd8fd"/><stop offset="0.89" stop-color="#ffadcd"/><stop offset="1" stop-color="#ffa3c2"/></linearGradient>
<linearGradient id="q46" x1="637" y1="0" x2="979" y2="0" gradientUnits="userSpaceOnUse"><stop offset="0" stop-color="#b3daff"/><stop offset="0.53" stop-color="#ffd6fe"/><stop offset="0.89" stop-color="#ffaccd"/><stop offset="1" stop-color="#ffa2c2"/></linearGradient>
<linearGradient id="q47" x1="637" y1="0" x2="979" y2="0" gradientUnits="userSpaceOnUse"><stop offset="0" stop-color="#b3d9ff"/><stop offset="0.53" stop-color="#ffd5fe"/><stop offset="0.89" stop-color="#ffaacd"/><stop offset="1" stop-color="#ffa1c2"/></linearGradient>
<linearGradient id="q48" x1="637" y1="0" x2="979" y2="0" gradientUnits="userSpaceOnUse"><stop offset="0" stop-color="#b3d7ff"/><stop offset="0.53" stop-color="#ffd3fe"/><stop offset="0.89" stop-color="#ffa9cd"/><stop offset="1" stop-color="#ff9fc2"/></linearGradient>
<linearGradient id="q49" x1="637" y1="0" x2="979" y2="0" gradientUnits="userSpaceOnUse"><stop offset="0" stop-color="#b3d6ff"/><stop offset="0.53" stop-color="#ffd2fe"/><stop offset="0.89" stop-color="#ffa8ce"/><stop offset="1" stop-color="#ff9ec2"/></linearGradient>
<clipPath id="qc"><rect x="637" y="679.5" width="342" height="198"/></clipPath>
<filter id="qb" x="-3%" y="-5%" width="106%" height="110%"><feGaussianBlur stdDeviation="1 2.5"/></filter>
<clipPath id="tblc"><rect x="995.5" y="698" width="634" height="170.4"/></clipPath>
<linearGradient id="bbg" x1="0" y1="0" x2="0" y2="1"><stop offset="0" stop-color="#a6a6a6"/><stop offset="0.08" stop-color="#9c9c9c"/><stop offset="1" stop-color="#5c5c5c"/></linearGradient>
<linearGradient id="bbs" x1="0" y1="0" x2="0" y2="1"><stop offset="0" stop-color="#1e1e1e"/><stop offset="1" stop-color="#3c3c3c"/></linearGradient>
<linearGradient id="cbg" x1="0" y1="0" x2="0" y2="1"><stop offset="0" stop-color="#9c9c9c"/><stop offset="1" stop-color="#747474"/></linearGradient>
<linearGradient id="cbg2" x1="0" y1="0" x2="0" y2="1"><stop offset="0" stop-color="#8a8a8a"/><stop offset="1" stop-color="#5e5e5e"/></linearGradient>
<linearGradient id="cir" x1="0" y1="0" x2="0" y2="1"><stop offset="0" stop-color="#6c6c6c"/><stop offset="1" stop-color="#a4a4a4"/></linearGradient>
<linearGradient id="sqg" x1="0" y1="0" x2="0" y2="1"><stop offset="0" stop-color="#8a8a8a"/><stop offset="0.5" stop-color="#8a8a8a"/><stop offset="0.5" stop-color="#a0a0a0"/><stop offset="1" stop-color="#a8a8a8"/></linearGradient>
<linearGradient id="sbg" x1="0" y1="0" x2="0" y2="1"><stop offset="0" stop-color="#a2a2a2"/><stop offset="1" stop-color="#6a6a6a"/></linearGradient>
<linearGradient id="nbg" x1="0" y1="0" x2="0" y2="1"><stop offset="0" stop-color="#a4a4a4"/><stop offset="1" stop-color="#666"/></linearGradient>
<linearGradient id="rsh" x1="0" y1="0" x2="1" y2="0"><stop offset="0" stop-color="#000" stop-opacity="0"/><stop offset="1" stop-color="#000" stop-opacity="0.42"/></linearGradient>
</defs>
<rect width="1669" height="1008" fill="#333333"/>
<rect x="0" y="0" width="1669" height="39.3" fill="#252525"/>
<rect x="0" y="39.3" width="1.3" height="892" fill="#2b2b2b"/>
<path d="M0.5 39.3V7.5a5 5 0 0 1 5-5H109.5a5 5 0 0 1 5 5V39.3" fill="url(#tabg)" stroke="#808080"/>
<line x1="73.5" y1="3" x2="73.5" y2="39.3" stroke="#747474" stroke-width="1"/>
<text x="8" y="27" font-size="13.5" textLength="58" lengthAdjust="spacingAndGlyphs" fill="#e4e4e4">History 1</text>
<circle cx="92.5" cy="23.3" r="12" fill="url(#plusg2)"/>
<path d="M89 24.6h7.2M92.6 21v7.2" stroke="#a8a8a8" stroke-width="1.1" fill="none"/>
<path d="M1055 39V7a5 5 0 0 1 5-5H1228.5a5 5 0 0 1 5 5V39Z" fill="url(#devg)"/>
<path d="M1055 39V7a5 5 0 0 1 5-5H1062V39Z" fill="#14d214"/>
<text x="1066" y="16" font-size="13.5" textLength="82" lengthAdjust="spacingAndGlyphs" fill="#e6e6e6">X-Rite i1Pro 3</text>
<text x="1066" y="35" font-size="13.5" textLength="69" lengthAdjust="spacingAndGlyphs" fill="#e6e6e6">Direct View</text>
<circle cx="1164" cy="20.5" r="12" fill="url(#ddg2)"/>
<path d="M1159 18h10l-5 6z" fill="#fff"/>
<line x1="1188.5" y1="5" x2="1188.5" y2="39" stroke="#444" stroke-width="1"/>
<circle cx="1214.3" cy="20.5" r="15.8" fill="#0000ee" stroke="#e8e8ff" stroke-width="1.2"/>
<text x="1214.3" y="24.8" font-size="11.5" text-anchor="middle" font-weight="bold" textLength="20.5" lengthAdjust="spacingAndGlyphs" fill="#fff">642</text>
<path d="M1241 39V7a5 5 0 0 1 5-5H1398a5 5 0 0 1 5 5V39Z" fill="url(#devg)"/>
<path d="M1241 39V7a5 5 0 0 1 5-5H1248V39Z" fill="#14d214"/>
<text x="1252" y="16" font-size="13.5" textLength="80" lengthAdjust="spacingAndGlyphs" fill="#e6e6e6">Mobile Forge</text>
<circle cx="1383" cy="20.5" r="12" fill="url(#ddg2)"/>
<path d="M1378 18h10l-5 6z" fill="#fff"/>
<path d="M1412 39V7a5 5 0 0 1 5-5H1585a5 5 0 0 1 5 5V39Z" fill="url(#devg)"/>
<path d="M1412 39V7a5 5 0 0 1 5-5H1419V39Z" fill="#e6e600"/>
<text x="1423" y="16" font-size="13.5" textLength="131" lengthAdjust="spacingAndGlyphs" fill="#e6e6e6">Direct Display Control</text>
<circle cx="1570" cy="20.5" r="12" fill="url(#ddg2)"/>
<path d="M1565 18h10l-5 6z" fill="#fff"/>
<rect x="1594.5" y="2.5" width="41.5" height="34" rx="5" fill="url(#gbg)" stroke="#9a9a9a"/>
<rect x="1636.5" y="2.5" width="41.5" height="34" rx="5" fill="url(#gbg)" stroke="#9a9a9a"/>
<circle cx="1614.5" cy="19.5" r="12.5" fill="url(#ddg2)"/>
<circle cx="1656" cy="19.5" r="12.5" fill="url(#ddg2)"/>
<path d="M1622.29 17.96L1622.29 20.64L1620.2 20.82L1619.6 22.26L1620.95 23.86L1619.06 25.75L1617.46 24.4L1616.02 25L1615.84 27.09L1613.16 27.09L1612.98 25L1611.54 24.4L1609.94 25.75L1608.05 23.86L1609.4 22.26L1608.8 20.82L1606.71 20.64L1606.71 17.96L1608.8 17.78L1609.4 16.34L1608.05 14.74L1609.94 12.85L1611.54 14.2L1612.98 13.6L1613.16 11.51L1615.84 11.51L1616.02 13.6L1617.46 14.2L1619.06 12.85L1620.95 14.74L1619.6 16.34L1620.2 17.78Z M1614.5 15.8a3.5 3.5 0 1 0 0.01 0Z" fill="#d0d0d0" fill-rule="evenodd"/>
<path d="M1649.8 19.4l7.7-7.5v15z" fill="#fff"/>
<text x="8.5" y="126.8" font-size="42" textLength="229" lengthAdjust="spacingAndGlyphs" fill="#f4f4f4">Color Gamut</text>
<text x="188.5" y="226.5" font-size="14" text-anchor="middle" textLength="80" lengthAdjust="spacingAndGlyphs">DeltaE 2000</text>
<rect x="20.8" y="231.6" width="335.7" height="372.5" fill="#252525"/>
<line x1="64.5" y1="231.6" x2="64.5" y2="604.1" stroke="#8e8e8e" stroke-width="1.4"/>
<line x1="109.3" y1="231.6" x2="109.3" y2="604.1" stroke="#8e8e8e" stroke-width="1.4"/>
<line x1="154.3" y1="231.6" x2="154.3" y2="604.1" stroke="#8e8e8e" stroke-width="1.4"/>
<line x1="199.5" y1="231.6" x2="199.5" y2="604.1" stroke="#8e8e8e" stroke-width="1.4"/>
<line x1="244.3" y1="231.6" x2="244.3" y2="604.1" stroke="#8e8e8e" stroke-width="1.4"/>
<line x1="287.4" y1="231.6" x2="287.4" y2="604.1" stroke="#8e8e8e" stroke-width="1.4"/>
<line x1="332.4" y1="231.6" x2="332.4" y2="604.1" stroke="#8e8e8e" stroke-width="1.4"/>
<rect x="20.8" y="231.6" width="335.7" height="372.5" fill="none" stroke="#8e8e8e" stroke-width="1.4"/>
<line x1="20.8" y1="604.1" x2="20.8" y2="610.1" stroke="#d8d8d8" stroke-width="1.7"/>
<text x="20.5" y="626.3" font-size="13.8" text-anchor="middle">0</text>
<line x1="64.5" y1="604.1" x2="64.5" y2="610.1" stroke="#d8d8d8" stroke-width="1.7"/>
<text x="64.2" y="626.3" font-size="13.8" text-anchor="middle">2</text>
<line x1="109.3" y1="604.1" x2="109.3" y2="610.1" stroke="#d8d8d8" stroke-width="1.7"/>
<text x="109" y="626.3" font-size="13.8" text-anchor="middle">4</text>
<line x1="154.3" y1="604.1" x2="154.3" y2="610.1" stroke="#d8d8d8" stroke-width="1.7"/>
<text x="154" y="626.3" font-size="13.8" text-anchor="middle">6</text>
<line x1="199.5" y1="604.1" x2="199.5" y2="610.1" stroke="#d8d8d8" stroke-width="1.7"/>
<text x="199.2" y="626.3" font-size="13.8" text-anchor="middle">8</text>
<line x1="244.3" y1="604.1" x2="244.3" y2="610.1" stroke="#d8d8d8" stroke-width="1.7"/>
<text x="244" y="626.3" font-size="13.8" text-anchor="middle">10</text>
<line x1="287.4" y1="604.1" x2="287.4" y2="610.1" stroke="#d8d8d8" stroke-width="1.7"/>
<text x="287.1" y="626.3" font-size="13.8" text-anchor="middle">12</text>
<line x1="332.4" y1="604.1" x2="332.4" y2="610.1" stroke="#d8d8d8" stroke-width="1.7"/>
<text x="332.1" y="626.3" font-size="13.8" text-anchor="middle">14</text>
<rect x="21.7" y="236.2" width="61" height="34" fill="url(#eb0)" stroke="#000" stroke-width="1.3"/>
<rect x="21.7" y="284.1" width="13.5" height="33.7" fill="url(#eb1)" stroke="#000" stroke-width="1.3"/>
<rect x="21.7" y="329.9" width="18.2" height="34.8" fill="url(#eb2)" stroke="#000" stroke-width="1.3"/>
<rect x="21.7" y="376.3" width="20.2" height="34.3" fill="url(#eb3)" stroke="#000" stroke-width="1.3"/>
<rect x="21.7" y="422.9" width="22.3" height="34.1" fill="url(#eb4)" stroke="#000" stroke-width="1.3"/>
<rect x="21.7" y="469.1" width="3" height="34.6" fill="url(#eb5)" stroke="#000" stroke-width="1.3"/>
<rect x="21.7" y="515.9" width="18.2" height="34.8" fill="url(#eb6)" stroke="#000" stroke-width="1.3"/>
<rect x="21.7" y="562.8" width="47.7" height="34.6" fill="url(#eb7)" stroke="#000" stroke-width="1.3"/>
<text x="467.5" y="117.6" font-size="14" text-anchor="middle" textLength="45" lengthAdjust="spacingAndGlyphs">Delta L</text>
<rect x="408.2" y="123.8" width="145.3" height="316" fill="#252525"/>
<line x1="402.2" y1="123.8" x2="408.2" y2="123.8" stroke="#d8d8d8" stroke-width="1.7"/>
<text x="401.7" y="129.05" font-size="13.8" text-anchor="end">15</text>
<line x1="408.2" y1="177.2" x2="553.5" y2="177.2" stroke="#8e8e8e" stroke-width="1.5"/>
<line x1="402.2" y1="177.2" x2="408.2" y2="177.2" stroke="#d8d8d8" stroke-width="1.7"/>
<text x="401.7" y="183.15" font-size="13.8" text-anchor="end">10</text>
<line x1="408.2" y1="229.3" x2="553.5" y2="229.3" stroke="#8e8e8e" stroke-width="1.5"/>
<line x1="402.2" y1="229.3" x2="408.2" y2="229.3" stroke="#d8d8d8" stroke-width="1.7"/>
<text x="401.7" y="235.95" font-size="13.8" text-anchor="end">5</text>
<line x1="408.2" y1="281.8" x2="553.5" y2="281.8" stroke="#8e8e8e" stroke-width="1.5"/>
<line x1="402.2" y1="281.8" x2="408.2" y2="281.8" stroke="#d8d8d8" stroke-width="1.7"/>
<text x="401.7" y="286.95" font-size="13.8" text-anchor="end">0</text>
<line x1="408.2" y1="335" x2="553.5" y2="335" stroke="#8e8e8e" stroke-width="1.5"/>
<line x1="402.2" y1="335" x2="408.2" y2="335" stroke="#d8d8d8" stroke-width="1.7"/>
<text x="401.7" y="340.15" font-size="13.8" text-anchor="end">-5</text>
<line x1="408.2" y1="388.2" x2="553.5" y2="388.2" stroke="#8e8e8e" stroke-width="1.5"/>
<line x1="402.2" y1="388.2" x2="408.2" y2="388.2" stroke="#d8d8d8" stroke-width="1.7"/>
<text x="401.7" y="393.35" font-size="13.8" text-anchor="end">-10</text>
<line x1="402.2" y1="439.8" x2="408.2" y2="439.8" stroke="#d8d8d8" stroke-width="1.7"/>
<text x="401.7" y="447.05" font-size="13.8" text-anchor="end">-15</text>
<rect x="408.2" y="123.8" width="145.3" height="316" fill="none" stroke="#8e8e8e" stroke-width="1.5"/>
<line x1="408.2" y1="123" x2="553.5" y2="123" stroke="#9c9c9c" stroke-width="1.2"/>
<line x1="408.2" y1="439.8" x2="408.2" y2="445.8" stroke="#d8d8d8" stroke-width="1.7"/>
<line x1="553.5" y1="439.8" x2="553.5" y2="445.8" stroke="#d8d8d8" stroke-width="1.7"/>
<text x="480.35" y="455.5" font-size="13.5" text-anchor="middle" textLength="37" lengthAdjust="spacingAndGlyphs">100W</text>
<line x1="422.8" y1="281.8" x2="538.9" y2="281.8" stroke="#1a1a1a" stroke-width="1.5"/>
<text x="664.5" y="117.6" font-size="14" text-anchor="middle" textLength="47" lengthAdjust="spacingAndGlyphs">Delta C</text>
<rect x="605.7" y="123.8" width="145.3" height="316" fill="#252525"/>
<line x1="599.7" y1="123.8" x2="605.7" y2="123.8" stroke="#d8d8d8" stroke-width="1.7"/>
<text x="599.2" y="129.05" font-size="13.8" text-anchor="end">15</text>
<line x1="605.7" y1="177.2" x2="751" y2="177.2" stroke="#8e8e8e" stroke-width="1.5"/>
<line x1="599.7" y1="177.2" x2="605.7" y2="177.2" stroke="#d8d8d8" stroke-width="1.7"/>
<text x="599.2" y="183.15" font-size="13.8" text-anchor="end">10</text>
<line x1="605.7" y1="229.3" x2="751" y2="229.3" stroke="#8e8e8e" stroke-width="1.5"/>
<line x1="599.7" y1="229.3" x2="605.7" y2="229.3" stroke="#d8d8d8" stroke-width="1.7"/>
<text x="599.2" y="235.95" font-size="13.8" text-anchor="end">5</text>
<line x1="605.7" y1="281.8" x2="751" y2="281.8" stroke="#8e8e8e" stroke-width="1.5"/>
<line x1="599.7" y1="281.8" x2="605.7" y2="281.8" stroke="#d8d8d8" stroke-width="1.7"/>
<text x="599.2" y="286.95" font-size="13.8" text-anchor="end">0</text>
<line x1="605.7" y1="335" x2="751" y2="335" stroke="#8e8e8e" stroke-width="1.5"/>
<line x1="599.7" y1="335" x2="605.7" y2="335" stroke="#d8d8d8" stroke-width="1.7"/>
<text x="599.2" y="340.15" font-size="13.8" text-anchor="end">-5</text>
<line x1="605.7" y1="388.2" x2="751" y2="388.2" stroke="#8e8e8e" stroke-width="1.5"/>
<line x1="599.7" y1="388.2" x2="605.7" y2="388.2" stroke="#d8d8d8" stroke-width="1.7"/>
<text x="599.2" y="393.35" font-size="13.8" text-anchor="end">-10</text>
<line x1="599.7" y1="439.8" x2="605.7" y2="439.8" stroke="#d8d8d8" stroke-width="1.7"/>
<text x="599.2" y="447.05" font-size="13.8" text-anchor="end">-15</text>
<rect x="605.7" y="123.8" width="145.3" height="316" fill="none" stroke="#8e8e8e" stroke-width="1.5"/>
<line x1="605.7" y1="123" x2="751" y2="123" stroke="#9c9c9c" stroke-width="1.2"/>
<line x1="605.7" y1="439.8" x2="605.7" y2="445.8" stroke="#d8d8d8" stroke-width="1.7"/>
<line x1="751" y1="439.8" x2="751" y2="445.8" stroke="#d8d8d8" stroke-width="1.7"/>
<text x="677.85" y="455.5" font-size="13.5" text-anchor="middle" textLength="37" lengthAdjust="spacingAndGlyphs">100W</text>
<rect x="620.3" y="251.76" width="116.1" height="30.04" fill="url(#dcb)" stroke="#000" stroke-width="1.6"/>
<text x="862" y="117.6" font-size="14" text-anchor="middle" textLength="49" lengthAdjust="spacingAndGlyphs">Delta H</text>
<rect x="803.2" y="123.8" width="145.3" height="316" fill="#252525"/>
<line x1="797.2" y1="123.8" x2="803.2" y2="123.8" stroke="#d8d8d8" stroke-width="1.7"/>
<text x="796.7" y="129.05" font-size="13.8" text-anchor="end">15</text>
<line x1="803.2" y1="177.2" x2="948.5" y2="177.2" stroke="#8e8e8e" stroke-width="1.5"/>
<line x1="797.2" y1="177.2" x2="803.2" y2="177.2" stroke="#d8d8d8" stroke-width="1.7"/>
<text x="796.7" y="183.15" font-size="13.8" text-anchor="end">10</text>
<line x1="803.2" y1="229.3" x2="948.5" y2="229.3" stroke="#8e8e8e" stroke-width="1.5"/>
<line x1="797.2" y1="229.3" x2="803.2" y2="229.3" stroke="#d8d8d8" stroke-width="1.7"/>
<text x="796.7" y="235.95" font-size="13.8" text-anchor="end">5</text>
<line x1="803.2" y1="281.8" x2="948.5" y2="281.8" stroke="#8e8e8e" stroke-width="1.5"/>
<line x1="797.2" y1="281.8" x2="803.2" y2="281.8" stroke="#d8d8d8" stroke-width="1.7"/>
<text x="796.7" y="286.95" font-size="13.8" text-anchor="end">0</text>
<line x1="803.2" y1="335" x2="948.5" y2="335" stroke="#8e8e8e" stroke-width="1.5"/>
<line x1="797.2" y1="335" x2="803.2" y2="335" stroke="#d8d8d8" stroke-width="1.7"/>
<text x="796.7" y="340.15" font-size="13.8" text-anchor="end">-5</text>
<line x1="803.2" y1="388.2" x2="948.5" y2="388.2" stroke="#8e8e8e" stroke-width="1.5"/>
<line x1="797.2" y1="388.2" x2="803.2" y2="388.2" stroke="#d8d8d8" stroke-width="1.7"/>
<text x="796.7" y="393.35" font-size="13.8" text-anchor="end">-10</text>
<line x1="797.2" y1="439.8" x2="803.2" y2="439.8" stroke="#d8d8d8" stroke-width="1.7"/>
<text x="796.7" y="447.05" font-size="13.8" text-anchor="end">-15</text>
<rect x="803.2" y="123.8" width="145.3" height="316" fill="none" stroke="#8e8e8e" stroke-width="1.5"/>
<line x1="803.2" y1="123" x2="948.5" y2="123" stroke="#9c9c9c" stroke-width="1.2"/>
<line x1="803.2" y1="439.8" x2="803.2" y2="445.8" stroke="#d8d8d8" stroke-width="1.7"/>
<line x1="948.5" y1="439.8" x2="948.5" y2="445.8" stroke="#d8d8d8" stroke-width="1.7"/>
<text x="875.35" y="455.5" font-size="13.5" text-anchor="middle" textLength="37" lengthAdjust="spacingAndGlyphs">100W</text>
<line x1="817.8" y1="281.8" x2="933.9" y2="281.8" stroke="#1a1a1a" stroke-width="1.5"/>
<rect x="376" y="472" width="592" height="164" fill="#000"/>
<rect x="393.7" y="480.5" width="61" height="65.5" fill="#c1c3c5"/>
<rect x="393.7" y="546" width="61" height="66" fill="#bfbfbf"/>
<rect x="393.7" y="480.5" width="61" height="131.5" fill="none" stroke="#fff" stroke-width="1.2"/>
<text x="424.2" y="627" font-size="13.5" text-anchor="middle" textLength="35" lengthAdjust="spacingAndGlyphs" fill="#fff">White</text>
<rect x="466" y="480.5" width="61" height="65.5" fill="#bf0000"/>
<rect x="466" y="546" width="61" height="66" fill="#c10c0c"/>
<rect x="466" y="480.5" width="61" height="131.5" fill="none" stroke="#fff" stroke-width="1.2"/>
<text x="496.5" y="627" font-size="13.5" text-anchor="middle" textLength="22" lengthAdjust="spacingAndGlyphs" fill="#fff">Red</text>
<rect x="538.3" y="480.5" width="61" height="65.5" fill="#0cbf00"/>
<rect x="538.3" y="546" width="61" height="66" fill="#00c000"/>
<rect x="538.3" y="480.5" width="61" height="131.5" fill="none" stroke="#fff" stroke-width="1.2"/>
<text x="568.8" y="627" font-size="13.5" text-anchor="middle" textLength="35" lengthAdjust="spacingAndGlyphs" fill="#fff">Green</text>
<rect x="610.6" y="480.5" width="61" height="65.5" fill="#0000bf"/>
<rect x="610.6" y="546" width="61" height="66" fill="#0c0cc0"/>
<rect x="610.6" y="480.5" width="61" height="131.5" fill="none" stroke="#fff" stroke-width="1.2"/>
<text x="641.1" y="627" font-size="13.5" text-anchor="middle" textLength="27" lengthAdjust="spacingAndGlyphs" fill="#fff">Blue</text>
<rect x="682.9" y="480.5" width="61" height="65.5" fill="#00bfc0"/>
<rect x="682.9" y="546" width="61" height="66" fill="#0cc0c0"/>
<rect x="682.9" y="480.5" width="61" height="131.5" fill="none" stroke="#fff" stroke-width="1.2"/>
<text x="713.4" y="627" font-size="13.5" text-anchor="middle" textLength="28" lengthAdjust="spacingAndGlyphs" fill="#fff">Cyan</text>
<rect x="755.2" y="480.5" width="61" height="65.5" fill="#bf00c0"/>
<rect x="755.2" y="546" width="61" height="66" fill="#c00cc0"/>
<rect x="755.2" y="480.5" width="61" height="131.5" fill="none" stroke="#fff" stroke-width="1.2"/>
<text x="785.7" y="627" font-size="13.5" text-anchor="middle" textLength="50" lengthAdjust="spacingAndGlyphs" fill="#fff">Magenta</text>
<rect x="827.5" y="480.5" width="61" height="65.5" fill="#c0bf0c"/>
<rect x="827.5" y="546" width="61" height="66" fill="#c0c000"/>
<rect x="827.5" y="480.5" width="61" height="131.5" fill="none" stroke="#fff" stroke-width="1.2"/>
<text x="858" y="627" font-size="13.5" text-anchor="middle" textLength="38" lengthAdjust="spacingAndGlyphs" fill="#fff">Yellow</text>
<rect x="899.8" y="480.5" width="61" height="65.5" fill="#f5faff"/>
<rect x="899.8" y="546" width="61" height="66" fill="#fafafa"/>
<rect x="899.8" y="480.5" width="61" height="131.5" fill="none" stroke="#fff" stroke-width="1.2"/>
<text x="930.3" y="627" font-size="13.5" text-anchor="middle" textLength="33" lengthAdjust="spacingAndGlyphs" fill="#fff">100W</text>
<text transform="translate(389,526) rotate(-90)" font-size="13.5" fill="#fff" textLength="35" lengthAdjust="spacingAndGlyphs">Actual</text>
<text transform="translate(389,601) rotate(-90)" font-size="13.5" fill="#fff" textLength="36" lengthAdjust="spacingAndGlyphs">Target</text>
<text x="15.3" y="714.7" font-size="28.5" textLength="219.5" lengthAdjust="spacingAndGlyphs" fill="#f0f0f0">Current Reading</text>
<text x="15.3" y="784" font-size="23" textLength="87" lengthAdjust="spacingAndGlyphs" fill="#f0f0f0">x: 0,307</text>
<text x="172.4" y="784" font-size="23" textLength="88" lengthAdjust="spacingAndGlyphs" fill="#f0f0f0">y: 0,325</text>
<text x="15.3" y="825" font-size="23" textLength="111" lengthAdjust="spacingAndGlyphs" fill="#f0f0f0">fL: 174,16</text>
<text x="15.3" y="864.6" font-size="23" textLength="159" lengthAdjust="spacingAndGlyphs" fill="#f0f0f0">cd/m<tspan font-size="30" dy="4.6">²</tspan><tspan dy="-4.6">: 596,72</tspan></text>
<text x="467.3" y="682.5" font-size="14" text-anchor="middle" textLength="84" lengthAdjust="spacingAndGlyphs">RGB Balance</text>
<rect x="358" y="687.7" width="250" height="180.1" fill="#252525"/>
<line x1="358" y1="707.18" x2="608" y2="707.18" stroke="#8e8e8e" stroke-width="1.5"/>
<line x1="352" y1="707.18" x2="358" y2="707.18" stroke="#d8d8d8" stroke-width="1.7"/>
<text x="351" y="712.58" font-size="13.8" text-anchor="end">104</text>
<line x1="358" y1="743.34" x2="608" y2="743.34" stroke="#8e8e8e" stroke-width="1.5"/>
<line x1="352" y1="743.34" x2="358" y2="743.34" stroke="#d8d8d8" stroke-width="1.7"/>
<text x="351" y="748.74" font-size="13.8" text-anchor="end">102</text>
<line x1="358" y1="779.5" x2="608" y2="779.5" stroke="#8e8e8e" stroke-width="1.5"/>
<line x1="352" y1="779.5" x2="358" y2="779.5" stroke="#d8d8d8" stroke-width="1.7"/>
<text x="351" y="784.9" font-size="13.8" text-anchor="end">100</text>
<line x1="358" y1="815.66" x2="608" y2="815.66" stroke="#8e8e8e" stroke-width="1.5"/>
<line x1="352" y1="815.66" x2="358" y2="815.66" stroke="#d8d8d8" stroke-width="1.7"/>
<text x="351" y="821.06" font-size="13.8" text-anchor="end">98</text>
<line x1="358" y1="851.82" x2="608" y2="851.82" stroke="#8e8e8e" stroke-width="1.5"/>
<line x1="352" y1="851.82" x2="358" y2="851.82" stroke="#d8d8d8" stroke-width="1.7"/>
<text x="351" y="857.22" font-size="13.8" text-anchor="end">96</text>
<rect x="358" y="687.7" width="250" height="180.1" fill="none" stroke="#8e8e8e" stroke-width="1.3"/>
<line x1="358" y1="867.8" x2="358" y2="873.8" stroke="#d8d8d8" stroke-width="1.7"/>
<line x1="608" y1="867.8" x2="608" y2="873.8" stroke="#d8d8d8" stroke-width="1.7"/>
<text x="483" y="885" font-size="13.5" text-anchor="middle" textLength="37" lengthAdjust="spacingAndGlyphs">100W</text>
<rect x="382.5" y="807.8" width="65" height="60" fill="url(#rb0)" stroke="#000" stroke-width="1.4"/>
<rect x="448.3" y="773.4" width="65" height="94.4" fill="url(#rb1)" stroke="#000" stroke-width="1.4"/>
<rect x="515" y="747.4" width="65" height="120.4" fill="url(#rb2)" stroke="#000" stroke-width="1.4"/>
<rect x="977.8" y="94.5" width="687.9" height="550.8" fill="#333333" stroke="#1c1c1c" stroke-width="7"/>
<text x="1321.5" y="115" font-size="14" text-anchor="middle" textLength="84.5" lengthAdjust="spacingAndGlyphs">CIE 1976 u'v'</text>
<rect x="1018.6" y="121.6" width="640.4" height="491.5" fill="#252525"/>
<g clip-path="url(#plotc)"><g clip-path="url(#locus)"><g filter="url(#vb)">
<rect x="1046.46" y="128.45" width="62.14" height="2.6" fill="url(#s0)"/>
<rect x="1036.56" y="130.45" width="97.67" height="2.6" fill="url(#s1)"/>
<rect x="1031.49" y="132.45" width="123.46" height="2.6" fill="url(#s2)"/>
<rect x="1028.2" y="134.45" width="145.84" height="2.6" fill="url(#s3)"/>
<rect x="1025.71" y="136.45" width="166.67" height="2.6" fill="url(#s4)"/>
<rect x="1023.74" y="138.45" width="186.58" height="2.6" fill="url(#s5)"/>
<rect x="1022.13" y="140.45" width="205.88" height="2.6" fill="url(#s6)"/>
<rect x="1020.88" y="142.45" width="224.67" height="2.6" fill="url(#s7)"/>
<rect x="1019.82" y="144.45" width="243.15" height="2.6" fill="url(#s8)"/>
<rect x="1018.9" y="146.45" width="261.46" height="2.6" fill="url(#s9)"/>
<rect x="1018.6" y="148.45" width="279.15" height="2.6" fill="url(#s10)"/>
<rect x="1018.6" y="150.45" width="296.56" height="2.6" fill="url(#s11)"/>
<rect x="1018.6" y="152.45" width="313.99" height="2.6" fill="url(#s12)"/>
<rect x="1018.6" y="154.45" width="331.43" height="2.6" fill="url(#s13)"/>
<rect x="1018.6" y="156.45" width="348.84" height="2.6" fill="url(#s14)"/>
<rect x="1018.6" y="158.45" width="366.21" height="2.6" fill="url(#s15)"/>
<rect x="1018.6" y="160.45" width="383.54" height="2.6" fill="url(#s16)"/>
<rect x="1018.6" y="162.45" width="400.87" height="2.6" fill="url(#s17)"/>
<rect x="1018.6" y="164.45" width="418.22" height="2.6" fill="url(#s18)"/>
<rect x="1018.6" y="166.45" width="435.61" height="2.6" fill="url(#s19)"/>
<rect x="1018.6" y="168.45" width="453.07" height="2.6" fill="url(#s20)"/>
<rect x="1018.6" y="170.45" width="470.56" height="2.6" fill="url(#s21)"/>
<rect x="1018.6" y="172.45" width="488.06" height="2.6" fill="url(#s22)"/>
<rect x="1018.6" y="174.45" width="505.51" height="2.6" fill="url(#s23)"/>
<rect x="1018.6" y="176.45" width="522.88" height="2.6" fill="url(#s24)"/>
<rect x="1018.6" y="178.45" width="540.18" height="2.6" fill="url(#s25)"/>
<rect x="1018.6" y="180.45" width="557.48" height="2.6" fill="url(#s26)"/>
<rect x="1018.6" y="182.45" width="574.88" height="2.6" fill="url(#s27)"/>
<rect x="1018.6" y="184.45" width="592.34" height="2.6" fill="url(#s28)"/>
<rect x="1018.6" y="186.45" width="609.71" height="2.6" fill="url(#s29)"/>
<rect x="1018.6" y="188.45" width="627.04" height="2.6" fill="url(#s30)"/>
<rect x="1018.6" y="190.45" width="642.4" height="2.6" fill="url(#s31)"/>
<rect x="1018.6" y="192.45" width="642.4" height="2.6" fill="url(#s32)"/>
<rect x="1018.6" y="194.45" width="642.4" height="2.6" fill="url(#s33)"/>
<rect x="1018.6" y="196.45" width="642.4" height="2.6" fill="url(#s34)"/>
<rect x="1018.85" y="198.45" width="642.15" height="2.6" fill="url(#s35)"/>
<rect x="1019.26" y="200.45" width="641.74" height="2.6" fill="url(#s36)"/>
<rect x="1019.66" y="202.45" width="641.34" height="2.6" fill="url(#s37)"/>
<rect x="1020.11" y="204.45" width="640.89" height="2.6" fill="url(#s38)"/>
<rect x="1020.59" y="206.45" width="640.41" height="2.6" fill="url(#s39)"/>
<rect x="1021.07" y="208.45" width="639.93" height="2.6" fill="url(#s40)"/>
<rect x="1021.54" y="210.45" width="639.46" height="2.6" fill="url(#s41)"/>
<rect x="1022.05" y="212.45" width="638.95" height="2.6" fill="url(#s42)"/>
<rect x="1022.59" y="214.45" width="638.41" height="2.6" fill="url(#s43)"/>
<rect x="1023.13" y="216.45" width="637.87" height="2.6" fill="url(#s44)"/>
<rect x="1023.67" y="218.45" width="637.33" height="2.6" fill="url(#s45)"/>
<rect x="1024.21" y="220.45" width="636.79" height="2.6" fill="url(#s46)"/>
<rect x="1024.81" y="222.45" width="636.19" height="2.6" fill="url(#s47)"/>
<rect x="1025.41" y="224.45" width="635.59" height="2.6" fill="url(#s48)"/>
<rect x="1026.01" y="226.45" width="634.26" height="2.6" fill="url(#s49)"/>
<rect x="1026.61" y="228.45" width="631.71" height="2.6" fill="url(#s50)"/>
<rect x="1027.21" y="230.45" width="629.16" height="2.6" fill="url(#s51)"/>
<rect x="1027.86" y="232.45" width="626.57" height="2.6" fill="url(#s52)"/>
<rect x="1028.52" y="234.45" width="623.96" height="2.6" fill="url(#s53)"/>
<rect x="1029.18" y="236.45" width="621.36" height="2.6" fill="url(#s54)"/>
<rect x="1029.83" y="238.45" width="618.76" height="2.6" fill="url(#s55)"/>
<rect x="1030.49" y="240.45" width="616.16" height="2.6" fill="url(#s56)"/>
<rect x="1031.18" y="242.45" width="613.53" height="2.6" fill="url(#s57)"/>
<rect x="1031.88" y="244.45" width="610.88" height="2.6" fill="url(#s58)"/>
<rect x="1032.59" y="246.45" width="608.22" height="2.6" fill="url(#s59)"/>
<rect x="1033.29" y="248.45" width="605.57" height="2.6" fill="url(#s60)"/>
<rect x="1034" y="250.45" width="602.92" height="2.6" fill="url(#s61)"/>
<rect x="1034.71" y="252.45" width="600.27" height="2.6" fill="url(#s62)"/>
<rect x="1035.45" y="254.45" width="597.58" height="2.6" fill="url(#s63)"/>
<rect x="1036.2" y="256.45" width="594.88" height="2.6" fill="url(#s64)"/>
<rect x="1036.95" y="258.45" width="592.19" height="2.6" fill="url(#s65)"/>
<rect x="1037.7" y="260.45" width="589.49" height="2.6" fill="url(#s66)"/>
<rect x="1038.45" y="262.45" width="586.8" height="2.6" fill="url(#s67)"/>
<rect x="1039.2" y="264.45" width="584.1" height="2.6" fill="url(#s68)"/>
<rect x="1039.98" y="266.45" width="581.38" height="2.6" fill="url(#s69)"/>
<rect x="1040.77" y="268.45" width="578.64" height="2.6" fill="url(#s70)"/>
<rect x="1041.56" y="270.45" width="575.9" height="2.6" fill="url(#s71)"/>
<rect x="1042.35" y="272.45" width="573.17" height="2.6" fill="url(#s72)"/>
<rect x="1043.15" y="274.45" width="570.43" height="2.6" fill="url(#s73)"/>
<rect x="1043.94" y="276.45" width="567.69" height="2.6" fill="url(#s74)"/>
<rect x="1044.74" y="278.45" width="564.94" height="2.6" fill="url(#s75)"/>
<rect x="1045.57" y="280.45" width="562.17" height="2.6" fill="url(#s76)"/>
<rect x="1046.4" y="282.45" width="559.39" height="2.6" fill="url(#s77)"/>
<rect x="1047.23" y="284.45" width="556.61" height="2.6" fill="url(#s78)"/>
<rect x="1048.06" y="286.45" width="553.84" height="2.6" fill="url(#s79)"/>
<rect x="1048.9" y="288.45" width="551.06" height="2.6" fill="url(#s80)"/>
<rect x="1049.73" y="290.45" width="548.28" height="2.6" fill="url(#s81)"/>
<rect x="1050.58" y="292.45" width="545.48" height="2.6" fill="url(#s82)"/>
<rect x="1051.46" y="294.45" width="542.66" height="2.6" fill="url(#s83)"/>
<rect x="1052.33" y="296.45" width="539.84" height="2.6" fill="url(#s84)"/>
<rect x="1053.21" y="298.45" width="537.02" height="2.6" fill="url(#s85)"/>
<rect x="1054.08" y="300.45" width="534.2" height="2.6" fill="url(#s86)"/>
<rect x="1054.96" y="302.45" width="531.38" height="2.6" fill="url(#s87)"/>
<rect x="1055.83" y="304.45" width="528.56" height="2.6" fill="url(#s88)"/>
<rect x="1056.74" y="306.45" width="525.71" height="2.6" fill="url(#s89)"/>
<rect x="1057.67" y="308.45" width="522.84" height="2.6" fill="url(#s90)"/>
<rect x="1058.59" y="310.45" width="519.97" height="2.6" fill="url(#s91)"/>
<rect x="1059.51" y="312.45" width="517.1" height="2.6" fill="url(#s92)"/>
<rect x="1060.44" y="314.45" width="514.23" height="2.6" fill="url(#s93)"/>
<rect x="1061.36" y="316.45" width="511.36" height="2.6" fill="url(#s94)"/>
<rect x="1062.28" y="318.45" width="508.49" height="2.6" fill="url(#s95)"/>
<rect x="1063.24" y="320.45" width="505.59" height="2.6" fill="url(#s96)"/>
<rect x="1064.22" y="322.45" width="502.66" height="2.6" fill="url(#s97)"/>
<rect x="1065.2" y="324.45" width="499.74" height="2.6" fill="url(#s98)"/>
<rect x="1066.18" y="326.45" width="496.81" height="2.6" fill="url(#s99)"/>
<rect x="1067.16" y="328.45" width="493.89" height="2.6" fill="url(#s100)"/>
<rect x="1068.14" y="330.45" width="490.96" height="2.6" fill="url(#s101)"/>
<rect x="1069.12" y="332.45" width="488.04" height="2.6" fill="url(#s102)"/>
<rect x="1070.12" y="334.45" width="485.09" height="2.6" fill="url(#s103)"/>
<rect x="1071.16" y="336.45" width="482.1" height="2.6" fill="url(#s104)"/>
<rect x="1072.2" y="338.45" width="479.12" height="2.6" fill="url(#s105)"/>
<rect x="1073.24" y="340.45" width="476.13" height="2.6" fill="url(#s106)"/>
<rect x="1074.28" y="342.45" width="473.15" height="2.6" fill="url(#s107)"/>
<rect x="1075.32" y="344.45" width="470.16" height="2.6" fill="url(#s108)"/>
<rect x="1076.36" y="346.45" width="467.18" height="2.6" fill="url(#s109)"/>
<rect x="1077.4" y="348.45" width="464.19" height="2.6" fill="url(#s110)"/>
<rect x="1078.5" y="350.45" width="461.15" height="2.6" fill="url(#s111)"/>
<rect x="1079.59" y="352.45" width="458.11" height="2.6" fill="url(#s112)"/>
<rect x="1080.68" y="354.45" width="455.08" height="2.6" fill="url(#s113)"/>
<rect x="1081.77" y="356.45" width="452.04" height="2.6" fill="url(#s114)"/>
<rect x="1082.86" y="358.45" width="449" height="2.6" fill="url(#s115)"/>
<rect x="1083.95" y="360.45" width="445.96" height="2.6" fill="url(#s116)"/>
<rect x="1085.05" y="362.45" width="442.93" height="2.6" fill="url(#s117)"/>
<rect x="1086.17" y="364.45" width="439.85" height="2.6" fill="url(#s118)"/>
<rect x="1087.31" y="366.45" width="436.77" height="2.6" fill="url(#s119)"/>
<rect x="1088.44" y="368.45" width="433.69" height="2.6" fill="url(#s120)"/>
<rect x="1089.58" y="370.45" width="430.61" height="2.6" fill="url(#s121)"/>
<rect x="1090.71" y="372.45" width="427.53" height="2.6" fill="url(#s122)"/>
<rect x="1091.85" y="374.45" width="424.45" height="2.6" fill="url(#s123)"/>
<rect x="1092.98" y="376.45" width="421.37" height="2.6" fill="url(#s124)"/>
<rect x="1094.14" y="378.45" width="418.27" height="2.6" fill="url(#s125)"/>
<rect x="1095.3" y="380.45" width="415.16" height="2.6" fill="url(#s126)"/>
<rect x="1096.47" y="382.45" width="412.04" height="2.6" fill="url(#s127)"/>
<rect x="1097.64" y="384.45" width="408.93" height="2.6" fill="url(#s128)"/>
<rect x="1098.81" y="386.45" width="405.82" height="2.6" fill="url(#s129)"/>
<rect x="1099.98" y="388.45" width="402.7" height="2.6" fill="url(#s130)"/>
<rect x="1101.15" y="390.45" width="399.59" height="2.6" fill="url(#s131)"/>
<rect x="1102.33" y="392.45" width="396.46" height="2.6" fill="url(#s132)"/>
<rect x="1103.52" y="394.45" width="393.32" height="2.6" fill="url(#s133)"/>
<rect x="1104.72" y="396.45" width="390.18" height="2.6" fill="url(#s134)"/>
<rect x="1105.92" y="398.45" width="387.04" height="2.6" fill="url(#s135)"/>
<rect x="1107.11" y="400.45" width="383.9" height="2.6" fill="url(#s136)"/>
<rect x="1108.31" y="402.45" width="380.75" height="2.6" fill="url(#s137)"/>
<rect x="1109.51" y="404.45" width="377.61" height="2.6" fill="url(#s138)"/>
<rect x="1110.71" y="406.45" width="374.46" height="2.6" fill="url(#s139)"/>
<rect x="1111.93" y="408.45" width="371.29" height="2.6" fill="url(#s140)"/>
<rect x="1113.16" y="410.45" width="368.12" height="2.6" fill="url(#s141)"/>
<rect x="1114.39" y="412.45" width="364.95" height="2.6" fill="url(#s142)"/>
<rect x="1115.61" y="414.45" width="361.78" height="2.6" fill="url(#s143)"/>
<rect x="1116.84" y="416.45" width="358.61" height="2.6" fill="url(#s144)"/>
<rect x="1118.06" y="418.45" width="355.44" height="2.6" fill="url(#s145)"/>
<rect x="1119.3" y="420.45" width="352.25" height="2.6" fill="url(#s146)"/>
<rect x="1120.56" y="422.45" width="349.05" height="2.6" fill="url(#s147)"/>
<rect x="1121.82" y="424.45" width="345.84" height="2.6" fill="url(#s148)"/>
<rect x="1123.08" y="426.45" width="342.64" height="2.6" fill="url(#s149)"/>
<rect x="1124.34" y="428.45" width="339.43" height="2.6" fill="url(#s150)"/>
<rect x="1125.6" y="430.45" width="336.23" height="2.6" fill="url(#s151)"/>
<rect x="1126.86" y="432.45" width="333.02" height="2.6" fill="url(#s152)"/>
<rect x="1128.15" y="434.45" width="329.79" height="2.6" fill="url(#s153)"/>
<rect x="1129.45" y="436.45" width="326.54" height="2.6" fill="url(#s154)"/>
<rect x="1130.75" y="438.45" width="323.3" height="2.6" fill="url(#s155)"/>
<rect x="1132.05" y="440.45" width="320.05" height="2.6" fill="url(#s156)"/>
<rect x="1133.35" y="442.45" width="316.8" height="2.6" fill="url(#s157)"/>
<rect x="1134.65" y="444.45" width="313.56" height="2.6" fill="url(#s158)"/>
<rect x="1135.97" y="446.45" width="310.29" height="2.6" fill="url(#s159)"/>
<rect x="1137.32" y="448.45" width="307" height="2.6" fill="url(#s160)"/>
<rect x="1138.67" y="450.45" width="303.7" height="2.6" fill="url(#s161)"/>
<rect x="1140.02" y="452.45" width="300.41" height="2.6" fill="url(#s162)"/>
<rect x="1141.37" y="454.45" width="297.11" height="2.6" fill="url(#s163)"/>
<rect x="1142.72" y="456.45" width="293.82" height="2.6" fill="url(#s164)"/>
<rect x="1144.08" y="458.45" width="290.5" height="2.6" fill="url(#s165)"/>
<rect x="1145.49" y="460.45" width="287.16" height="2.6" fill="url(#s166)"/>
<rect x="1146.89" y="462.45" width="283.81" height="2.6" fill="url(#s167)"/>
<rect x="1148.29" y="464.45" width="280.46" height="2.6" fill="url(#s168)"/>
<rect x="1149.69" y="466.45" width="277.12" height="2.6" fill="url(#s169)"/>
<rect x="1151.09" y="468.45" width="273.77" height="2.6" fill="url(#s170)"/>
<rect x="1152.53" y="470.45" width="270.38" height="2.6" fill="url(#s171)"/>
<rect x="1153.99" y="472.45" width="266.98" height="2.6" fill="url(#s172)"/>
<rect x="1155.44" y="474.45" width="263.58" height="2.6" fill="url(#s173)"/>
<rect x="1156.9" y="476.45" width="260.19" height="2.6" fill="url(#s174)"/>
<rect x="1158.35" y="478.45" width="256.79" height="2.6" fill="url(#s175)"/>
<rect x="1159.83" y="480.45" width="253.36" height="2.6" fill="url(#s176)"/>
<rect x="1161.34" y="482.45" width="249.91" height="2.6" fill="url(#s177)"/>
<rect x="1162.85" y="484.45" width="246.45" height="2.6" fill="url(#s178)"/>
<rect x="1164.35" y="486.45" width="243" height="2.6" fill="url(#s179)"/>
<rect x="1165.86" y="488.45" width="239.55" height="2.6" fill="url(#s180)"/>
<rect x="1167.4" y="490.45" width="236.06" height="2.6" fill="url(#s181)"/>
<rect x="1168.96" y="492.45" width="232.55" height="2.6" fill="url(#s182)"/>
<rect x="1170.52" y="494.45" width="229.05" height="2.6" fill="url(#s183)"/>
<rect x="1172.09" y="496.45" width="225.54" height="2.6" fill="url(#s184)"/>
<rect x="1173.65" y="498.45" width="222.03" height="2.6" fill="url(#s185)"/>
<rect x="1175.27" y="500.45" width="218.47" height="2.6" fill="url(#s186)"/>
<rect x="1176.89" y="502.45" width="214.9" height="2.6" fill="url(#s187)"/>
<rect x="1178.51" y="504.45" width="211.33" height="2.6" fill="url(#s188)"/>
<rect x="1180.13" y="506.45" width="207.77" height="2.6" fill="url(#s189)"/>
<rect x="1181.8" y="508.45" width="204.16" height="2.6" fill="url(#s190)"/>
<rect x="1183.48" y="510.45" width="200.53" height="2.6" fill="url(#s191)"/>
<rect x="1185.16" y="512.45" width="196.9" height="2.6" fill="url(#s192)"/>
<rect x="1186.84" y="514.45" width="193.27" height="2.6" fill="url(#s193)"/>
<rect x="1188.59" y="516.45" width="189.58" height="2.6" fill="url(#s194)"/>
<rect x="1190.34" y="518.45" width="185.88" height="2.6" fill="url(#s195)"/>
<rect x="1192.09" y="520.45" width="182.19" height="2.6" fill="url(#s196)"/>
<rect x="1193.88" y="522.45" width="178.45" height="2.6" fill="url(#s197)"/>
<rect x="1195.71" y="524.45" width="174.68" height="2.6" fill="url(#s198)"/>
<rect x="1197.54" y="526.45" width="170.9" height="2.6" fill="url(#s199)"/>
<rect x="1199.41" y="528.45" width="167.08" height="2.6" fill="url(#s200)"/>
<rect x="1201.33" y="530.45" width="163.22" height="2.6" fill="url(#s201)"/>
<rect x="1203.25" y="532.45" width="159.36" height="2.6" fill="url(#s202)"/>
<rect x="1205.23" y="534.45" width="155.43" height="2.6" fill="url(#s203)"/>
<rect x="1207.23" y="536.45" width="151.48" height="2.6" fill="url(#s204)"/>
<rect x="1209.27" y="538.45" width="147.5" height="2.6" fill="url(#s205)"/>
<rect x="1211.35" y="540.45" width="143.48" height="2.6" fill="url(#s206)"/>
<rect x="1213.44" y="542.45" width="139.44" height="2.6" fill="url(#s207)"/>
<rect x="1215.58" y="544.45" width="135.35" height="2.6" fill="url(#s208)"/>
<rect x="1217.73" y="546.45" width="131.26" height="2.6" fill="url(#s209)"/>
<rect x="1219.92" y="548.45" width="127.12" height="2.6" fill="url(#s210)"/>
<rect x="1222.12" y="550.45" width="122.97" height="2.6" fill="url(#s211)"/>
<rect x="1224.36" y="552.45" width="118.79" height="2.6" fill="url(#s212)"/>
<rect x="1226.62" y="554.45" width="114.59" height="2.6" fill="url(#s213)"/>
<rect x="1228.9" y="556.45" width="110.36" height="2.6" fill="url(#s214)"/>
<rect x="1231.22" y="558.45" width="106.09" height="2.6" fill="url(#s215)"/>
<rect x="1233.55" y="560.45" width="101.82" height="2.6" fill="url(#s216)"/>
<rect x="1235.92" y="562.45" width="97.51" height="2.6" fill="url(#s217)"/>
<rect x="1238.3" y="564.45" width="93.18" height="2.6" fill="url(#s218)"/>
<rect x="1240.7" y="566.45" width="88.84" height="2.6" fill="url(#s219)"/>
<rect x="1243.11" y="568.45" width="84.48" height="2.6" fill="url(#s220)"/>
<rect x="1245.53" y="570.45" width="80.11" height="2.6" fill="url(#s221)"/>
<rect x="1247.96" y="572.45" width="75.74" height="2.6" fill="url(#s222)"/>
<rect x="1250.39" y="574.45" width="71.36" height="2.6" fill="url(#s223)"/>
<rect x="1252.83" y="576.45" width="66.98" height="2.6" fill="url(#s224)"/>
<rect x="1255.26" y="578.45" width="62.6" height="2.6" fill="url(#s225)"/>
<rect x="1257.7" y="580.45" width="58.22" height="2.6" fill="url(#s226)"/>
<rect x="1260.13" y="582.45" width="53.84" height="2.6" fill="url(#s227)"/>
<rect x="1262.55" y="584.45" width="49.47" height="2.6" fill="url(#s228)"/>
<rect x="1264.96" y="586.45" width="45.12" height="2.6" fill="url(#s229)"/>
<rect x="1267.35" y="588.45" width="40.78" height="2.6" fill="url(#s230)"/>
<rect x="1269.74" y="590.45" width="36.45" height="2.6" fill="url(#s231)"/>
<rect x="1272.12" y="592.45" width="32.12" height="2.6" fill="url(#s232)"/>
<rect x="1274.52" y="594.45" width="27.77" height="2.6" fill="url(#s233)"/>
<rect x="1276.99" y="596.45" width="23.36" height="2.6" fill="url(#s234)"/>
<rect x="1279.59" y="598.45" width="18.82" height="2.6" fill="url(#s235)"/>
<rect x="1282.6" y="600.45" width="13.86" height="2.6" fill="url(#s236)"/>
</g>
<path d="M1000 100H1700V640H1000Z M1498.44 183.99 L1151.46 151.53 L1205.19 483.11Z" fill="#000" fill-opacity="0.39" fill-rule="evenodd"/>
</g></g>
<rect x="1018.6" y="121.6" width="640.4" height="491.5" fill="none" stroke="#a2a2a2" stroke-width="1.6"/>
<line x1="1012.6" y1="613.1" x2="1018.6" y2="613.1" stroke="#d8d8d8" stroke-width="1.7"/>
<text x="1012.1" y="619.4" font-size="13.8" text-anchor="end">0</text>
<line x1="1018.9" y1="613.1" x2="1018.9" y2="619.6" stroke="#d8d8d8" stroke-width="1.7"/>
<text x="1018.9" y="635.3" font-size="13.8" text-anchor="middle">0</text>
<line x1="1012.6" y1="573.36" x2="1018.6" y2="573.36" stroke="#d8d8d8" stroke-width="1.7"/>
<text x="1012.1" y="578.49" font-size="13.8" text-anchor="end">0,05</text>
<line x1="1072.16" y1="613.1" x2="1072.16" y2="619.6" stroke="#d8d8d8" stroke-width="1.7"/>
<text x="1072.16" y="635.3" font-size="13.8" text-anchor="middle">0,05</text>
<line x1="1012.6" y1="532.32" x2="1018.6" y2="532.32" stroke="#d8d8d8" stroke-width="1.7"/>
<text x="1012.1" y="537.57" font-size="13.8" text-anchor="end">0,1</text>
<line x1="1125.43" y1="613.1" x2="1125.43" y2="619.6" stroke="#d8d8d8" stroke-width="1.7"/>
<text x="1125.43" y="635.3" font-size="13.8" text-anchor="middle">0,1</text>
<line x1="1012.6" y1="491.28" x2="1018.6" y2="491.28" stroke="#d8d8d8" stroke-width="1.7"/>
<text x="1012.1" y="496.66" font-size="13.8" text-anchor="end">0,15</text>
<line x1="1178.69" y1="613.1" x2="1178.69" y2="619.6" stroke="#d8d8d8" stroke-width="1.7"/>
<text x="1178.69" y="635.3" font-size="13.8" text-anchor="middle">0,15</text>
<line x1="1012.6" y1="450.24" x2="1018.6" y2="450.24" stroke="#d8d8d8" stroke-width="1.7"/>
<text x="1012.1" y="455.74" font-size="13.8" text-anchor="end">0,2</text>
<line x1="1231.96" y1="613.1" x2="1231.96" y2="619.6" stroke="#d8d8d8" stroke-width="1.7"/>
<text x="1231.96" y="635.3" font-size="13.8" text-anchor="middle">0,2</text>
<line x1="1012.6" y1="409.2" x2="1018.6" y2="409.2" stroke="#d8d8d8" stroke-width="1.7"/>
<text x="1012.1" y="414.83" font-size="13.8" text-anchor="end">0,25</text>
<line x1="1285.22" y1="613.1" x2="1285.22" y2="619.6" stroke="#d8d8d8" stroke-width="1.7"/>
<text x="1285.22" y="635.3" font-size="13.8" text-anchor="middle">0,25</text>
<line x1="1012.6" y1="368.16" x2="1018.6" y2="368.16" stroke="#d8d8d8" stroke-width="1.7"/>
<text x="1012.1" y="373.91" font-size="13.8" text-anchor="end">0,3</text>
<line x1="1338.49" y1="613.1" x2="1338.49" y2="619.6" stroke="#d8d8d8" stroke-width="1.7"/>
<text x="1338.49" y="635.3" font-size="13.8" text-anchor="middle">0,3</text>
<line x1="1012.6" y1="327.12" x2="1018.6" y2="327.12" stroke="#d8d8d8" stroke-width="1.7"/>
<text x="1012.1" y="333" font-size="13.8" text-anchor="end">0,35</text>
<line x1="1391.75" y1="613.1" x2="1391.75" y2="619.6" stroke="#d8d8d8" stroke-width="1.7"/>
<text x="1391.75" y="635.3" font-size="13.8" text-anchor="middle">0,35</text>
<line x1="1012.6" y1="286.08" x2="1018.6" y2="286.08" stroke="#d8d8d8" stroke-width="1.7"/>
<text x="1012.1" y="292.08" font-size="13.8" text-anchor="end">0,4</text>
<line x1="1445.02" y1="613.1" x2="1445.02" y2="619.6" stroke="#d8d8d8" stroke-width="1.7"/>
<text x="1445.02" y="635.3" font-size="13.8" text-anchor="middle">0,4</text>
<line x1="1012.6" y1="245.04" x2="1018.6" y2="245.04" stroke="#d8d8d8" stroke-width="1.7"/>
<text x="1012.1" y="251.17" font-size="13.8" text-anchor="end">0,45</text>
<line x1="1498.28" y1="613.1" x2="1498.28" y2="619.6" stroke="#d8d8d8" stroke-width="1.7"/>
<text x="1498.28" y="635.3" font-size="13.8" text-anchor="middle">0,45</text>
<line x1="1012.6" y1="204" x2="1018.6" y2="204" stroke="#d8d8d8" stroke-width="1.7"/>
<text x="1012.1" y="210.25" font-size="13.8" text-anchor="end">0,5</text>
<line x1="1551.55" y1="613.1" x2="1551.55" y2="619.6" stroke="#d8d8d8" stroke-width="1.7"/>
<text x="1551.55" y="635.3" font-size="13.8" text-anchor="middle">0,5</text>
<line x1="1012.6" y1="162.96" x2="1018.6" y2="162.96" stroke="#d8d8d8" stroke-width="1.7"/>
<text x="1012.1" y="169.34" font-size="13.8" text-anchor="end">0,55</text>
<line x1="1604.82" y1="613.1" x2="1604.82" y2="619.6" stroke="#d8d8d8" stroke-width="1.7"/>
<text x="1604.82" y="635.3" font-size="13.8" text-anchor="middle">0,55</text>
<rect x="1403" y="581.5" width="253" height="27.5" fill="#333"/>
<text x="1404.5" y="602.5" font-size="18.5" textLength="156" lengthAdjust="spacingAndGlyphs" fill="#f2f2f2">Gamut Coverage:</text>
<text x="1570.3" y="602.5" font-size="18.5" textLength="55" lengthAdjust="spacingAndGlyphs" fill="#f2f2f2">99,3%</text>
<rect x="1144.5" y="144.5" width="14" height="14" fill="none" stroke="#fff" stroke-width="1.6" stroke-opacity="0.8"/>
<rect x="1491.5" y="177" width="14" height="14" fill="none" stroke="#fff" stroke-width="1.6" stroke-opacity="0.8"/>
<rect x="1336.5" y="334.5" width="14" height="14" fill="none" stroke="#fff" stroke-width="1.6" stroke-opacity="0.8"/>
<rect x="1198" y="476.5" width="14" height="14" fill="none" stroke="#fff" stroke-width="1.6" stroke-opacity="0.8"/>
<rect x="1159.4" y="232.6" width="14" height="14" fill="none" stroke="#fff" stroke-width="1.6" stroke-opacity="0.8"/>
<rect x="1228.3" y="152.7" width="14" height="14" fill="none" stroke="#fff" stroke-width="1.6" stroke-opacity="0.8"/>
<rect x="1221.75" y="221.75" width="13.3" height="13.3" fill="none" stroke="#000" stroke-width="1.8"/>
<circle cx="1204.35" cy="478.65" r="3.9" fill="#0000b0" stroke="#000" stroke-width="1.2"/>
<circle cx="1505.21" cy="183.85" r="3.9" fill="#c40000" stroke="#000" stroke-width="1.2"/>
<circle cx="1152.55" cy="152.03" r="3.9" fill="#0cbc00" stroke="#000" stroke-width="1.2"/>
<circle cx="1166.4" cy="241.3" r="3.9" fill="#08bcbc" stroke="#000" stroke-width="1.2"/>
<circle cx="1337.75" cy="348.45" r="3.9" fill="#a800a8" stroke="#000" stroke-width="1.2"/>
<circle cx="1233.8" cy="159.99" r="3.9" fill="#bcbc08" stroke="#000" stroke-width="1.2"/>
<circle cx="1226.77" cy="231.05" r="3.9" fill="#fff" stroke="#000" stroke-width="1.2"/>
<text x="807.8" y="673.5" font-size="14" text-anchor="middle" textLength="77" lengthAdjust="spacingAndGlyphs">CIE 1931 xy</text>
<g clip-path="url(#qc)"><g filter="url(#qb)">
<rect x="637" y="679.2" width="342" height="4.6" fill="url(#q0)"/>
<rect x="637" y="683.2" width="342" height="4.6" fill="url(#q1)"/>
<rect x="637" y="687.2" width="342" height="4.6" fill="url(#q2)"/>
<rect x="637" y="691.2" width="342" height="4.6" fill="url(#q3)"/>
<rect x="637" y="695.2" width="342" height="4.6" fill="url(#q4)"/>
<rect x="637" y="699.2" width="342" height="4.6" fill="url(#q5)"/>
<rect x="637" y="703.2" width="342" height="4.6" fill="url(#q6)"/>
<rect x="637" y="707.2" width="342" height="4.6" fill="url(#q7)"/>
<rect x="637" y="711.2" width="342" height="4.6" fill="url(#q8)"/>
<rect x="637" y="715.2" width="342" height="4.6" fill="url(#q9)"/>
<rect x="637" y="719.2" width="342" height="4.6" fill="url(#q10)"/>
<rect x="637" y="723.2" width="342" height="4.6" fill="url(#q11)"/>
<rect x="637" y="727.2" width="342" height="4.6" fill="url(#q12)"/>
<rect x="637" y="731.2" width="342" height="4.6" fill="url(#q13)"/>
<rect x="637" y="735.2" width="342" height="4.6" fill="url(#q14)"/>
<rect x="637" y="739.2" width="342" height="4.6" fill="url(#q15)"/>
<rect x="637" y="743.2" width="342" height="4.6" fill="url(#q16)"/>
<rect x="637" y="747.2" width="342" height="4.6" fill="url(#q17)"/>
<rect x="637" y="751.2" width="342" height="4.6" fill="url(#q18)"/>
<rect x="637" y="755.2" width="342" height="4.6" fill="url(#q19)"/>
<rect x="637" y="759.2" width="342" height="4.6" fill="url(#q20)"/>
<rect x="637" y="763.2" width="342" height="4.6" fill="url(#q21)"/>
<rect x="637" y="767.2" width="342" height="4.6" fill="url(#q22)"/>
<rect x="637" y="771.2" width="342" height="4.6" fill="url(#q23)"/>
<rect x="637" y="775.2" width="342" height="4.6" fill="url(#q24)"/>
<rect x="637" y="779.2" width="342" height="4.6" fill="url(#q25)"/>
<rect x="637" y="783.2" width="342" height="4.6" fill="url(#q26)"/>
<rect x="637" y="787.2" width="342" height="4.6" fill="url(#q27)"/>
<rect x="637" y="791.2" width="342" height="4.6" fill="url(#q28)"/>
<rect x="637" y="795.2" width="342" height="4.6" fill="url(#q29)"/>
<rect x="637" y="799.2" width="342" height="4.6" fill="url(#q30)"/>
<rect x="637" y="803.2" width="342" height="4.6" fill="url(#q31)"/>
<rect x="637" y="807.2" width="342" height="4.6" fill="url(#q32)"/>
<rect x="637" y="811.2" width="342" height="4.6" fill="url(#q33)"/>
<rect x="637" y="815.2" width="342" height="4.6" fill="url(#q34)"/>
<rect x="637" y="819.2" width="342" height="4.6" fill="url(#q35)"/>
<rect x="637" y="823.2" width="342" height="4.6" fill="url(#q36)"/>
<rect x="637" y="827.2" width="342" height="4.6" fill="url(#q37)"/>
<rect x="637" y="831.2" width="342" height="4.6" fill="url(#q38)"/>
<rect x="637" y="835.2" width="342" height="4.6" fill="url(#q39)"/>
<rect x="637" y="839.2" width="342" height="4.6" fill="url(#q40)"/>
<rect x="637" y="843.2" width="342" height="4.6" fill="url(#q41)"/>
<rect x="637" y="847.2" width="342" height="4.6" fill="url(#q42)"/>
<rect x="637" y="851.2" width="342" height="4.6" fill="url(#q43)"/>
<rect x="637" y="855.2" width="342" height="4.6" fill="url(#q44)"/>
<rect x="637" y="859.2" width="342" height="4.6" fill="url(#q45)"/>
<rect x="637" y="863.2" width="342" height="4.6" fill="url(#q46)"/>
<rect x="637" y="867.2" width="342" height="4.6" fill="url(#q47)"/>
<rect x="637" y="871.2" width="342" height="4.6" fill="url(#q48)"/>
<rect x="637" y="875.2" width="342" height="4.6" fill="url(#q49)"/>
</g></g>
<rect x="637" y="679.5" width="342" height="198" fill="none" stroke="#a8a8a8" stroke-width="1.2"/>
<rect x="800.85" y="771.05" width="13.5" height="13.5" fill="#fff" stroke="#000" stroke-width="1.7"/>
<circle cx="771.4" cy="791.4" r="4.6" fill="#b4b4b4" stroke="#000" stroke-width="1.2"/>
<circle cx="768.4" cy="794" r="4.4" fill="#fff" stroke="#000" stroke-width="1.2"/>
<rect x="995.5" y="663.5" width="652" height="223.5" fill="#333"/>
<rect x="995.5" y="663.5" width="634" height="17.5" fill="#2b2b2b"/>
<rect x="995.5" y="681" width="634" height="17" fill="#1b1b1b"/>
<text x="1128" y="687.5" font-size="17.5" text-anchor="middle" textLength="42" lengthAdjust="spacingAndGlyphs" fill="#f0f0f0">White</text>
<text x="1205.75" y="687.5" font-size="17.5" text-anchor="middle" textLength="26" lengthAdjust="spacingAndGlyphs" fill="#f0f0f0">Red</text>
<text x="1283.5" y="687.5" font-size="17.5" text-anchor="middle" textLength="42" lengthAdjust="spacingAndGlyphs" fill="#f0f0f0">Green</text>
<text x="1361.25" y="687.5" font-size="17.5" text-anchor="middle" textLength="32" lengthAdjust="spacingAndGlyphs" fill="#f0f0f0">Blue</text>
<text x="1439" y="687.5" font-size="17.5" text-anchor="middle" textLength="33" lengthAdjust="spacingAndGlyphs" fill="#f0f0f0">Cyan</text>
<text x="1516.75" y="687.5" font-size="17.5" text-anchor="middle" textLength="62" lengthAdjust="spacingAndGlyphs" fill="#f0f0f0">Magenta</text>
<text x="1594.5" y="687.5" font-size="17.5" text-anchor="middle" textLength="45" lengthAdjust="spacingAndGlyphs" fill="#f0f0f0">Yellow</text>
<g clip-path="url(#tblc)">
<rect x="995.5" y="698" width="634" height="31" fill="#3d3d3d"/>
<text x="1009.5" y="720.3" font-size="18" font-weight="bold" textLength="62" lengthAdjust="spacingAndGlyphs" fill="#fff">x: CIE31</text>
<text x="1093.7" y="720.3" font-size="18" textLength="50" lengthAdjust="spacingAndGlyphs" fill="#ececec">0,3075</text>
<text x="1171.45" y="720.3" font-size="18" textLength="50" lengthAdjust="spacingAndGlyphs" fill="#ececec">0,6458</text>
<text x="1249.2" y="720.3" font-size="18" textLength="50" lengthAdjust="spacingAndGlyphs" fill="#ececec">0,3011</text>
<text x="1326.95" y="720.3" font-size="18" textLength="50" lengthAdjust="spacingAndGlyphs" fill="#ececec">0,1505</text>
<text x="1404.7" y="720.3" font-size="18" textLength="50" lengthAdjust="spacingAndGlyphs" fill="#ececec">0,2238</text>
<text x="1482.45" y="720.3" font-size="18" textLength="50" lengthAdjust="spacingAndGlyphs" fill="#ececec">0,3122</text>
<text x="1560.2" y="720.3" font-size="18" textLength="50" lengthAdjust="spacingAndGlyphs" fill="#ececec">0,4159</text>
<rect x="995.5" y="729" width="634" height="31" fill="#7e7e7e"/>
<text x="1009.5" y="751.3" font-size="18" font-weight="bold" textLength="62" lengthAdjust="spacingAndGlyphs" fill="#fff">y: CIE31</text>
<text x="1093.7" y="751.3" font-size="18" textLength="50" lengthAdjust="spacingAndGlyphs" fill="#ececec">0,3258</text>
<text x="1171.45" y="751.3" font-size="18" textLength="50" lengthAdjust="spacingAndGlyphs" fill="#ececec">0,3289</text>
<text x="1249.2" y="751.3" font-size="18" textLength="50" lengthAdjust="spacingAndGlyphs" fill="#ececec">0,5984</text>
<text x="1326.95" y="751.3" font-size="18" textLength="50" lengthAdjust="spacingAndGlyphs" fill="#ececec">0,0628</text>
<text x="1404.7" y="751.3" font-size="18" textLength="50" lengthAdjust="spacingAndGlyphs" fill="#ececec">0,3250</text>
<text x="1482.45" y="751.3" font-size="18" textLength="50" lengthAdjust="spacingAndGlyphs" fill="#ececec">0,1494</text>
<text x="1560.2" y="751.3" font-size="18" textLength="50" lengthAdjust="spacingAndGlyphs" fill="#ececec">0,5056</text>
<rect x="995.5" y="760" width="634" height="31" fill="#3d3d3d"/>
<text x="1009.5" y="782.3" font-size="18" font-weight="bold" textLength="9" lengthAdjust="spacingAndGlyphs" fill="#fff">Y</text>
<text x="1093.7" y="782.3" font-size="18" textLength="68.5" lengthAdjust="spacingAndGlyphs" fill="#ececec">316,1935</text>
<text x="1171.45" y="782.3" font-size="18" textLength="59" lengthAdjust="spacingAndGlyphs" fill="#ececec">63,0027</text>
<text x="1249.2" y="782.3" font-size="18" textLength="68.5" lengthAdjust="spacingAndGlyphs" fill="#ececec">224,0241</text>
<text x="1326.95" y="782.3" font-size="18" textLength="59" lengthAdjust="spacingAndGlyphs" fill="#ececec">24,7306</text>
<text x="1404.7" y="782.3" font-size="18" textLength="68.5" lengthAdjust="spacingAndGlyphs" fill="#ececec">251,0796</text>
<text x="1482.45" y="782.3" font-size="18" textLength="59" lengthAdjust="spacingAndGlyphs" fill="#ececec">88,0343</text>
<text x="1560.2" y="782.3" font-size="18" textLength="68.5" lengthAdjust="spacingAndGlyphs" fill="#ececec">288,5739</text>
<rect x="995.5" y="791" width="634" height="31" fill="#7e7e7e"/>
<text x="1009.5" y="813.3" font-size="18" font-weight="bold" textLength="66" lengthAdjust="spacingAndGlyphs" fill="#fff">Target Y</text>
<text x="1093.7" y="813.3" font-size="18" textLength="68.5" lengthAdjust="spacingAndGlyphs" fill="#ececec">310,8862</text>
<text x="1171.45" y="813.3" font-size="18" textLength="59" lengthAdjust="spacingAndGlyphs" fill="#ececec">66,1118</text>
<text x="1249.2" y="813.3" font-size="18" textLength="68.5" lengthAdjust="spacingAndGlyphs" fill="#ececec">222,3329</text>
<text x="1326.95" y="813.3" font-size="18" textLength="59" lengthAdjust="spacingAndGlyphs" fill="#ececec">22,4415</text>
<text x="1404.7" y="813.3" font-size="18" textLength="68.5" lengthAdjust="spacingAndGlyphs" fill="#ececec">244,7744</text>
<text x="1482.45" y="813.3" font-size="18" textLength="59" lengthAdjust="spacingAndGlyphs" fill="#ececec">88,5533</text>
<text x="1560.2" y="813.3" font-size="18" textLength="68.5" lengthAdjust="spacingAndGlyphs" fill="#ececec">288,4447</text>
<rect x="995.5" y="822" width="634" height="31" fill="#3d3d3d"/>
<text x="1009.5" y="844.3" font-size="18" font-weight="bold" textLength="66" lengthAdjust="spacingAndGlyphs" fill="#fff">ΔE 2000</text>
<text x="1093.7" y="844.3" font-size="18" textLength="50" lengthAdjust="spacingAndGlyphs" fill="#ececec">2,2001</text>
<text x="1171.45" y="844.3" font-size="18" textLength="50" lengthAdjust="spacingAndGlyphs" fill="#ececec">0,9106</text>
<text x="1249.2" y="844.3" font-size="18" textLength="50" lengthAdjust="spacingAndGlyphs" fill="#ececec">0,2072</text>
<text x="1326.95" y="844.3" font-size="18" textLength="50" lengthAdjust="spacingAndGlyphs" fill="#ececec">1,0876</text>
<text x="1404.7" y="844.3" font-size="18" textLength="50" lengthAdjust="spacingAndGlyphs" fill="#ececec">1,0299</text>
<text x="1482.45" y="844.3" font-size="18" textLength="50" lengthAdjust="spacingAndGlyphs" fill="#ececec">0,9114</text>
<text x="1560.2" y="844.3" font-size="18" textLength="50" lengthAdjust="spacingAndGlyphs" fill="#ececec">0,7218</text>
<rect x="995.5" y="853" width="634" height="31" fill="#7e7e7e"/>
<text x="1009.5" y="875.3" font-size="18" font-weight="bold" textLength="52" lengthAdjust="spacingAndGlyphs" fill="#fff">ΔE ITP</text>
<text x="1093.7" y="875.3" font-size="18" textLength="50" lengthAdjust="spacingAndGlyphs" fill="#ececec">3,3821</text>
<text x="1171.45" y="875.3" font-size="18" textLength="50" lengthAdjust="spacingAndGlyphs" fill="#ececec">5,6024</text>
<text x="1249.2" y="875.3" font-size="18" textLength="50" lengthAdjust="spacingAndGlyphs" fill="#ececec">0,8900</text>
<text x="1326.95" y="875.3" font-size="18" textLength="50" lengthAdjust="spacingAndGlyphs" fill="#ececec">5,5672</text>
<text x="1404.7" y="875.3" font-size="18" textLength="50" lengthAdjust="spacingAndGlyphs" fill="#ececec">2,3931</text>
<text x="1482.45" y="875.3" font-size="18" textLength="50" lengthAdjust="spacingAndGlyphs" fill="#ececec">6,1340</text>
<text x="1560.2" y="875.3" font-size="18" textLength="50" lengthAdjust="spacingAndGlyphs" fill="#ececec">2,0807</text>
</g>
<rect x="1629.5" y="698" width="17.5" height="170.4" fill="#585858"/>
<rect x="995.5" y="868.4" width="634" height="18.6" fill="#585858"/>
<rect x="1631.5" y="700" width="14" height="16" rx="3" fill="#7c7c7c"/>
<path d="M1633.5 711.5l5-6 5 6z" fill="#3a3a3a"/>
<rect x="1631.5" y="850.5" width="14" height="16" rx="3" fill="#7c7c7c"/>
<path d="M1633.5 855.5l5 6 5-6z" fill="#3a3a3a"/>
<rect x="1632" y="719.5" width="13" height="105.5" rx="6" fill="#444"/>
<rect x="997.5" y="870" width="15.5" height="15" rx="3" fill="#7c7c7c"/>
<path d="M1009.5 872.5l-6 5 6 5z" fill="#3a3a3a"/>
<rect x="1614.5" y="870" width="13.5" height="15" rx="3" fill="#7c7c7c"/>
<path d="M1618 872.5l6 5-6 5z" fill="#3a3a3a"/>
<rect x="1015.5" y="870.5" width="527" height="14" rx="7" fill="#444"/>
<path d="M995.5 663.5H1647.5V887H995.5Z" fill="none" stroke="#111" stroke-width="1.5"/>
<path d="M1 1010V936.5a5 5 0 0 1 5-5h146a5 5 0 0 1 5 5V1010Z" fill="url(#bbg)"/>
<rect x="7.5" y="937.5" width="143.5" height="45.5" rx="4.5" fill="#c0c0c0" stroke="#777" stroke-width="1"/>
<text x="79" y="1001.5" font-size="13.5" text-anchor="middle" font-weight="bold" textLength="37" lengthAdjust="spacingAndGlyphs" fill="#262626">White</text>
<path d="M159.05 1010V936.5a5 5 0 0 1 5-5h146a5 5 0 0 1 5 5V1010Z" fill="url(#bbg)"/>
<rect x="165.55" y="937.5" width="143.5" height="45.5" rx="4.5" fill="#c00000" stroke="#777" stroke-width="1"/>
<text x="237.05" y="1001.5" font-size="13.5" text-anchor="middle" font-weight="bold" textLength="24" lengthAdjust="spacingAndGlyphs" fill="#262626">Red</text>
<path d="M317.1 1010V936.5a5 5 0 0 1 5-5h146a5 5 0 0 1 5 5V1010Z" fill="url(#bbg)"/>
<rect x="323.6" y="937.5" width="143.5" height="45.5" rx="4.5" fill="#00c000" stroke="#777" stroke-width="1"/>
<text x="395.1" y="1001.5" font-size="13.5" text-anchor="middle" font-weight="bold" textLength="38" lengthAdjust="spacingAndGlyphs" fill="#262626">Green</text>
<path d="M475.15 1010V936.5a5 5 0 0 1 5-5h146a5 5 0 0 1 5 5V1010Z" fill="url(#bbg)"/>
<rect x="481.65" y="937.5" width="143.5" height="45.5" rx="4.5" fill="#0000c0" stroke="#777" stroke-width="1"/>
<text x="553.15" y="1001.5" font-size="13.5" text-anchor="middle" font-weight="bold" textLength="28" lengthAdjust="spacingAndGlyphs" fill="#262626">Blue</text>
<path d="M633.2 1010V936.5a5 5 0 0 1 5-5h146a5 5 0 0 1 5 5V1010Z" fill="url(#bbg)"/>
<rect x="639.7" y="937.5" width="143.5" height="45.5" rx="4.5" fill="#00c0c0" stroke="#777" stroke-width="1"/>
<text x="711.2" y="1001.5" font-size="13.5" text-anchor="middle" font-weight="bold" textLength="30" lengthAdjust="spacingAndGlyphs" fill="#262626">Cyan</text>
<path d="M791.25 1010V936.5a5 5 0 0 1 5-5h146a5 5 0 0 1 5 5V1010Z" fill="url(#bbg)"/>
<rect x="797.75" y="937.5" width="143.5" height="45.5" rx="4.5" fill="#c000c0" stroke="#777" stroke-width="1"/>
<text x="869.25" y="1001.5" font-size="13.5" text-anchor="middle" font-weight="bold" textLength="54" lengthAdjust="spacingAndGlyphs" fill="#262626">Magenta</text>
<path d="M949.3 1010V936.5a5 5 0 0 1 5-5h146a5 5 0 0 1 5 5V1010Z" fill="url(#bbg)"/>
<rect x="955.8" y="937.5" width="143.5" height="45.5" rx="4.5" fill="#c0c000" stroke="#777" stroke-width="1"/>
<text x="1027.3" y="1001.5" font-size="13.5" text-anchor="middle" font-weight="bold" textLength="41" lengthAdjust="spacingAndGlyphs" fill="#262626">Yellow</text>
<path d="M1107.35 1010V936.5a5 5 0 0 1 5-5h146a5 5 0 0 1 5 5V1010Z" fill="url(#bbs)"/>
<rect x="1113.85" y="937.5" width="143.5" height="45.5" rx="4.5" fill="#ffffff" stroke="#222" stroke-width="1"/>
<text x="1185.35" y="1001.5" font-size="13.5" text-anchor="middle" font-weight="bold" textLength="37" lengthAdjust="spacingAndGlyphs" fill="#fff">100W</text>
<path d="M1266.5 954.5V936.5a5 5 0 0 1 5-5h50a5 5 0 0 1 5 5V954.5Z" fill="url(#cbg)"/>
<rect x="1266.5" y="955.5" width="60" height="55" fill="url(#cbg2)"/>
<circle cx="1296" cy="943.5" r="9" fill="url(#cir)"/>
<path d="M1290 946.5l6-6.5 6 6.5z" fill="#303030"/>
<rect x="1278" y="963.5" width="36" height="35.5" rx="6" fill="url(#sqg)" stroke="#242424" stroke-width="3"/>
<rect x="1287.7" y="973" width="17.3" height="16.5" fill="#000"/>
<path d="M1327.5 968.8V936a5 5 0 0 1 5-5H1610.3V968.8Z" fill="url(#sbg)"/>
<line x1="1385.2" y1="931" x2="1385.2" y2="968.8" stroke="#3c3c3c" stroke-width="1.4"/>
<line x1="1441.3" y1="931" x2="1441.3" y2="968.8" stroke="#3c3c3c" stroke-width="1.4"/>
<line x1="1498.2" y1="931" x2="1498.2" y2="968.8" stroke="#3c3c3c" stroke-width="2.4"/>
<line x1="1554.2" y1="931" x2="1554.2" y2="968.8" stroke="#3c3c3c" stroke-width="1.4"/>
<circle cx="1356" cy="949.8" r="12.5" fill="url(#cir)"/>
<circle cx="1413.7" cy="949.8" r="12.5" fill="url(#cir)"/>
<circle cx="1469.5" cy="949.8" r="12.5" fill="url(#cir)"/>
<circle cx="1526.6" cy="949.8" r="12.5" fill="url(#cir)"/>
<circle cx="1582.4" cy="949.8" r="12.5" fill="url(#cir)"/>
<rect x="1351" y="944.8" width="10" height="10" fill="#343434"/>
<path d="M1409.5 943.3v13l11-6.5z" fill="#343434"/>
<path d="M1466.3 944.3h-2.6v11h2.6M1472.7 944.3h2.6v11h-2.6" fill="none" stroke="#343434" stroke-width="1.9"/>
<path d="M1466.2 949.8h6.8" stroke="#343434" stroke-width="1.5" stroke-dasharray="1.6 1"/>
<path d="M1526.6 949.8c-2.4-3.6-7-3.4-7 0s4.6 3.6 7 0c2.4-3.6 7-3.4 7 0s-4.6 3.6-7 0z" fill="none" stroke="#343434" stroke-width="1.7"/>
<path d="M1576.6 949a6 6 0 0 1 10-3.6M1588.2 950.6a6 6 0 0 1-10 3.6" fill="none" stroke="#343434" stroke-width="2.2"/>
<path d="M1589 942.6v5.4h-5.4zM1575.8 957v-5.4h5.4z" fill="#343434"/>
<g stroke="#e81212" stroke-width="6.2" stroke-linecap="butt"><path d="M1637.4 932v32M1622.5 940.5l29.8 16M1622.5 956.5l29.8-16"/></g>
<path d="M1327.5 1010V975.5a5 5 0 0 1 5-5H1497V1010Z" fill="url(#nbg)"/>
<path d="M1499 1010V970.5H1666a5 5 0 0 1 5 5V1010Z" fill="url(#nbg)"/>
<line x1="1498" y1="970.5" x2="1498" y2="1008" stroke="#3c3c3c" stroke-width="2"/>
<circle cx="1365.6" cy="989.2" r="12.5" fill="url(#cir)"/>
<circle cx="1632.6" cy="989.2" r="12.5" fill="url(#cir)"/>
<path d="M1364.6 985.4l-3.6 3.8 3.6 3.8M1370.2 985.4l-3.6 3.8 3.6 3.8" fill="none" stroke="#343434" stroke-width="1.7"/>
<path d="M1628 985.4l3.6 3.8-3.6 3.8M1633.6 985.4l3.6 3.8-3.6 3.8" fill="none" stroke="#343434" stroke-width="1.7"/>
<text x="1400.5" y="1000" font-size="26.5" textLength="62" lengthAdjust="spacingAndGlyphs" fill="#bdbdbd" fill-opacity="0.55" stroke="#bdbdbd" stroke-opacity="0.55" stroke-width="0.9">Back</text>
<text x="1533.3" y="1000" font-size="26.5" textLength="64" lengthAdjust="spacingAndGlyphs" fill="#bdbdbd" fill-opacity="0.55" stroke="#bdbdbd" stroke-opacity="0.55" stroke-width="0.9">Next</text>
<text x="1400.5" y="999" font-size="26.5" textLength="62" lengthAdjust="spacingAndGlyphs" fill="#383838" stroke="#383838" stroke-width="0.9">Back</text>
<text x="1533.3" y="999" font-size="26.5" textLength="64" lengthAdjust="spacingAndGlyphs" fill="#383838" stroke="#383838" stroke-width="0.9">Next</text>
<rect x="1661" y="0" width="8" height="1008" fill="url(#rsh)"/>
</svg>
</body></html>
